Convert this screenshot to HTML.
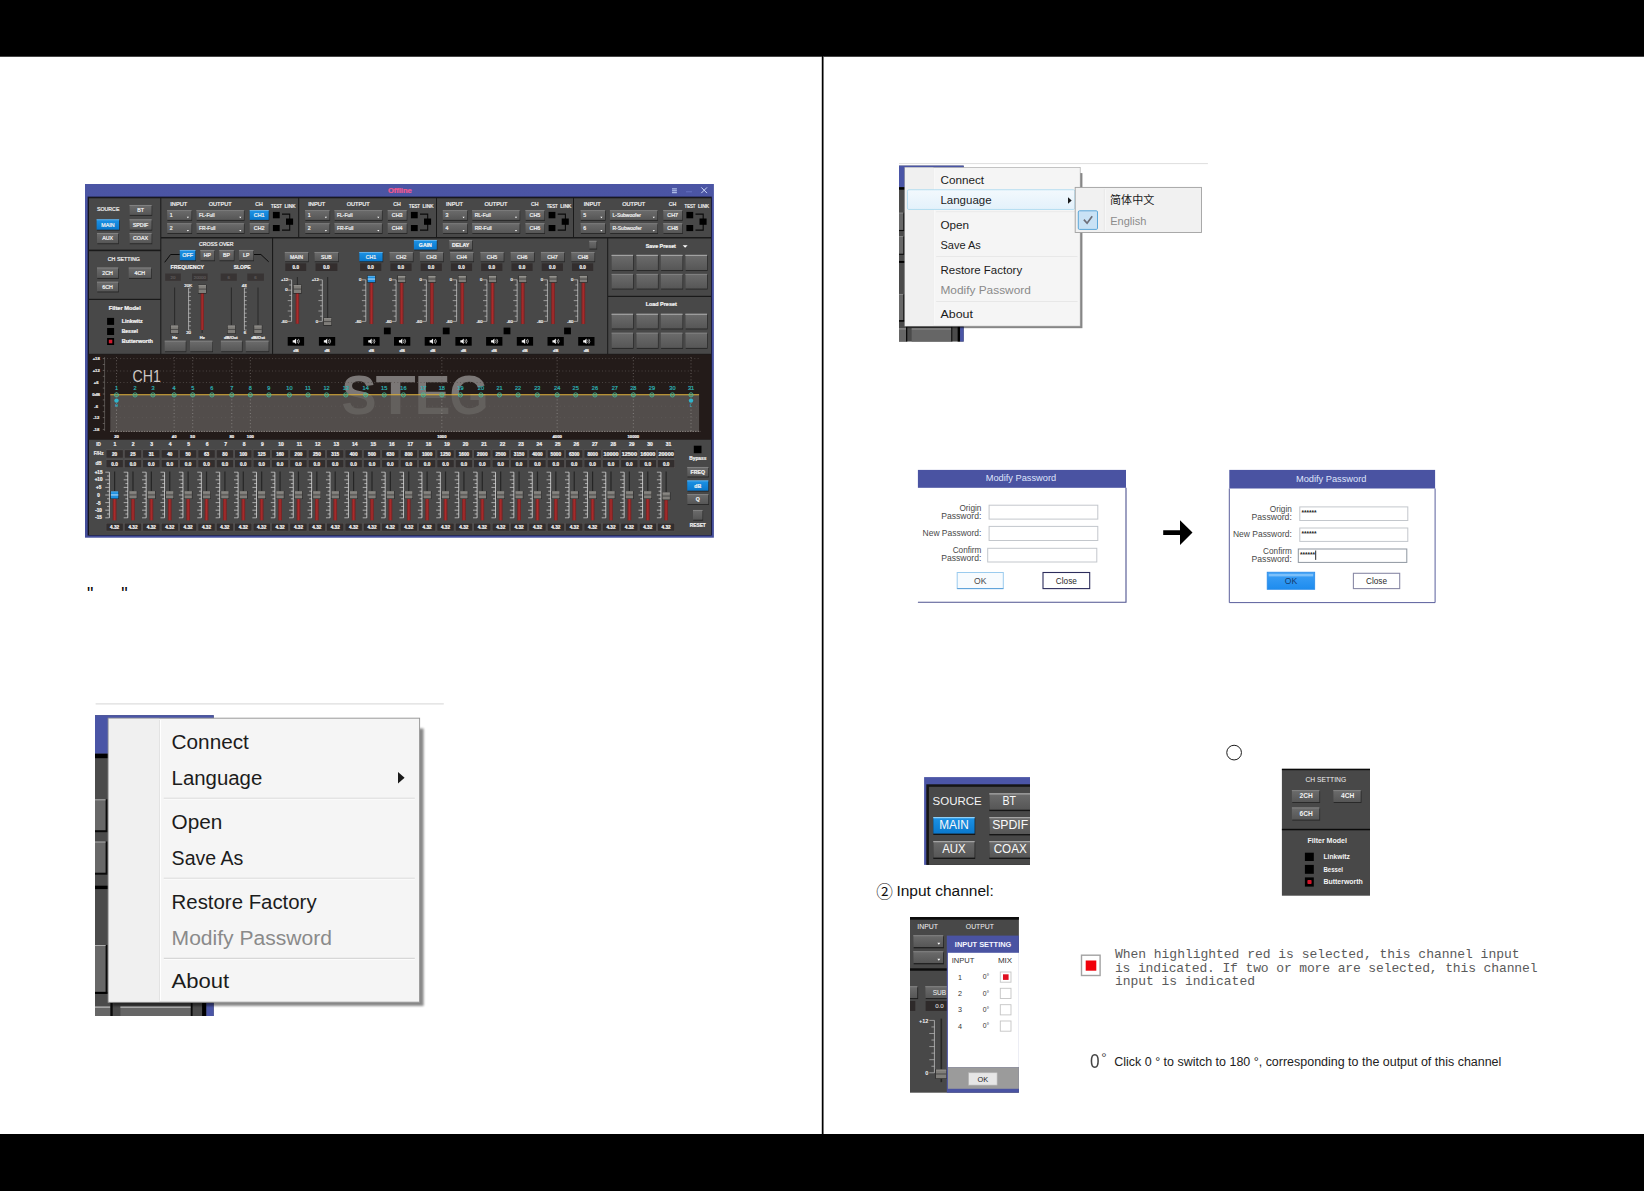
<!DOCTYPE html>
<html lang="en"><head><meta charset="utf-8"><title>Manual</title>
<style>
html,body{margin:0;padding:0;background:#fff}
body{width:1644px;height:1191px;position:relative;overflow:hidden;font-family:"Liberation Sans","Noto Sans CJK SC",sans-serif}
svg{font-family:"Liberation Sans","Noto Sans CJK SC",sans-serif;overflow:hidden}
svg text{white-space:pre}
.bar{position:absolute;left:0;width:1644px;background:#000}
.t{position:absolute;white-space:pre;line-height:1;margin:0;padding:0}
</style></head><body>
<div class="bar" style="top:0;height:56px"></div>
<div class="bar" style="top:56px;height:1px;background:#454545"></div>
<div class="bar" style="top:1134px;height:57px"></div>
<div style="position:absolute;left:822px;top:56px;width:1px;height:1079px;background:#000"></div>
<div style="position:absolute;left:821px;top:57px;width:1px;height:1077px;background:#c8c8c8"></div>
<div style="position:absolute;left:823px;top:57px;width:1px;height:1077px;background:#787878"></div>
<svg style="position:absolute;left:84px;top:183px;" width="632" height="357" viewBox="84 183 632 357"><defs><linearGradient id="gg" x1="0" y1="0" x2="0" y2="1"><stop offset="0" stop-color="#6c6c6c"/><stop offset="1" stop-color="#565656"/></linearGradient><linearGradient id="gb" x1="0" y1="0" x2="0" y2="1"><stop offset="0" stop-color="#1d93e6"/><stop offset="1" stop-color="#0a78cc"/></linearGradient><linearGradient id="rd" x1="0" y1="0" x2="1" y2="0"><stop offset="0" stop-color="#6a2424"/><stop offset="0.5" stop-color="#ae2b2b"/><stop offset="1" stop-color="#6a2424"/></linearGradient><linearGradient id="tb" x1="0" y1="0" x2="0" y2="1"><stop offset="0" stop-color="#4b55a4"/><stop offset="1" stop-color="#444e9a"/></linearGradient></defs><rect x="85.00" y="184.00" width="628.90" height="353.70" fill="url(#tb)"/><rect x="87.60" y="196.60" width="624.20" height="339.00" fill="#15152e"/><rect x="88.40" y="197.30" width="622.80" height="337.70" fill="#1a1a1a"/><text x="399.80" y="192.71" font-size="6.6" fill="#f2588e" text-anchor="middle" font-weight="bold" textLength="23.8" lengthAdjust="spacingAndGlyphs" stroke="#f2588e" stroke-width="0.22">Offline</text><path d="M672.00 188.90L676.90 188.90" stroke="#cfe0ff" stroke-width="0.9"/><path d="M672.00 190.80L676.90 190.80" stroke="#cfe0ff" stroke-width="0.9"/><path d="M672.00 192.70L676.90 192.70" stroke="#cfe0ff" stroke-width="0.9"/><path d="M686.00 191.80L692.00 191.80" stroke="#6a78c8" stroke-width="0.8"/><path d="M701.3 187.4L707 193.1M707 187.4L701.3 193.1" stroke="#d8e4ff" stroke-width="0.9" fill="none"/><rect x="89.00" y="198.30" width="71.30" height="51.30" fill="#484848"/><rect x="89.00" y="251.20" width="71.30" height="47.60" fill="#484848"/><rect x="89.00" y="300.00" width="71.30" height="53.80" fill="#484848"/><rect x="161.30" y="198.30" width="136.90" height="38.70" fill="#484848"/><rect x="299.20" y="198.30" width="136.80" height="38.70" fill="#484848"/><rect x="437.00" y="198.30" width="136.00" height="38.70" fill="#484848"/><rect x="574.00" y="198.30" width="137.00" height="38.70" fill="#484848"/><rect x="161.30" y="238.50" width="110.70" height="115.30" fill="#484848"/><rect x="273.10" y="238.50" width="334.10" height="115.30" fill="#484848"/><rect x="608.20" y="238.50" width="102.80" height="57.30" fill="#484848"/><rect x="608.20" y="297.00" width="102.80" height="56.80" fill="#484848"/><rect x="89.00" y="439.50" width="622.00" height="95.50" fill="#484848"/><text x="108.20" y="210.85" font-size="5.3" fill="#f0f0f0" text-anchor="middle" textLength="22.4" lengthAdjust="spacingAndGlyphs" stroke="#f0f0f0" stroke-width="0.22">SOURCE</text><rect x="129.80" y="206.00" width="22.40" height="9.80" fill="#1d1d1d" opacity="0.8"/><rect x="129.50" y="205.10" width="22.10" height="9.80" fill="url(#gg)"/><path d="M129.50 205.45L151.60 205.45" stroke="#8e8e8e" stroke-width="0.7"/><text x="140.55" y="211.95" font-size="5.3" fill="#f2f2f2" text-anchor="middle" stroke="#f2f2f2" stroke-width="0.22">BT</text><rect x="96.90" y="220.30" width="22.80" height="10.30" fill="#1d1d1d" opacity="0.8"/><rect x="96.60" y="219.40" width="22.50" height="10.30" fill="url(#gb)"/><path d="M96.60 219.75L119.10 219.75" stroke="#7fc4f5" stroke-width="0.7"/><text x="107.85" y="226.50" font-size="5.3" fill="#f2f2f2" text-anchor="middle" stroke="#f2f2f2" stroke-width="0.22">MAIN</text><rect x="129.80" y="220.30" width="22.40" height="10.30" fill="#1d1d1d" opacity="0.8"/><rect x="129.50" y="219.40" width="22.10" height="10.30" fill="url(#gg)"/><path d="M129.50 219.75L151.60 219.75" stroke="#8e8e8e" stroke-width="0.7"/><text x="140.55" y="226.50" font-size="5.3" fill="#f2f2f2" text-anchor="middle" stroke="#f2f2f2" stroke-width="0.22">SPDIF</text><rect x="97.30" y="234.00" width="21.50" height="10.20" fill="#1d1d1d" opacity="0.8"/><rect x="97.00" y="233.10" width="21.20" height="10.20" fill="url(#gg)"/><path d="M97.00 233.45L118.20 233.45" stroke="#8e8e8e" stroke-width="0.7"/><text x="107.60" y="240.15" font-size="5.3" fill="#f2f2f2" text-anchor="middle" stroke="#f2f2f2" stroke-width="0.22">AUX</text><rect x="129.80" y="234.00" width="22.40" height="10.20" fill="#1d1d1d" opacity="0.8"/><rect x="129.50" y="233.10" width="22.10" height="10.20" fill="url(#gg)"/><path d="M129.50 233.45L151.60 233.45" stroke="#8e8e8e" stroke-width="0.7"/><text x="140.55" y="240.15" font-size="5.3" fill="#f2f2f2" text-anchor="middle" stroke="#f2f2f2" stroke-width="0.22">COAX</text><text x="123.80" y="261.25" font-size="5.3" fill="#f0f0f0" text-anchor="middle" textLength="32.1" lengthAdjust="spacingAndGlyphs" stroke="#f0f0f0" stroke-width="0.22">CH SETTING</text><rect x="97.30" y="268.50" width="21.50" height="10.30" fill="#1d1d1d" opacity="0.8"/><rect x="97.00" y="267.60" width="21.20" height="10.30" fill="url(#gg)"/><path d="M97.00 267.95L118.20 267.95" stroke="#8e8e8e" stroke-width="0.7"/><text x="107.60" y="274.71" font-size="5.3" fill="#f2f2f2" text-anchor="middle" stroke="#f2f2f2" stroke-width="0.22">2CH</text><rect x="129.00" y="268.50" width="22.70" height="10.30" fill="#1d1d1d" opacity="0.8"/><rect x="128.70" y="267.60" width="22.40" height="10.30" fill="url(#gg)"/><path d="M128.70 267.95L151.10 267.95" stroke="#8e8e8e" stroke-width="0.7"/><text x="139.90" y="274.71" font-size="5.3" fill="#f2f2f2" text-anchor="middle" stroke="#f2f2f2" stroke-width="0.22">4CH</text><rect x="97.30" y="282.70" width="21.50" height="9.70" fill="#1d1d1d" opacity="0.8"/><rect x="97.00" y="281.80" width="21.20" height="9.70" fill="url(#gg)"/><path d="M97.00 282.15L118.20 282.15" stroke="#8e8e8e" stroke-width="0.7"/><text x="107.60" y="288.61" font-size="5.3" fill="#f2f2f2" text-anchor="middle" stroke="#f2f2f2" stroke-width="0.22">6CH</text><text x="124.80" y="309.96" font-size="5.6" fill="#f4f4f4" text-anchor="middle" font-weight="bold" textLength="32.2" lengthAdjust="spacingAndGlyphs" stroke="#f4f4f4" stroke-width="0.22">Filter Model</text><rect x="107.10" y="317.90" width="7.00" height="7.00" fill="#000"/><text x="121.70" y="323.22" font-size="5.2" fill="#f4f4f4" font-weight="bold" textLength="21.1" lengthAdjust="spacingAndGlyphs" stroke="#f4f4f4" stroke-width="0.22">Linkwitz</text><rect x="107.10" y="328.00" width="7.00" height="7.00" fill="#000"/><text x="121.70" y="333.32" font-size="5.2" fill="#f4f4f4" font-weight="bold" textLength="16.2" lengthAdjust="spacingAndGlyphs" stroke="#f4f4f4" stroke-width="0.22">Bessel</text><rect x="107.10" y="338.00" width="7.00" height="7.00" fill="#000"/><rect x="108.80" y="339.70" width="3.50" height="3.60" fill="#d0182c"/><text x="121.70" y="343.32" font-size="5.2" fill="#f4f4f4" font-weight="bold" textLength="31.3" lengthAdjust="spacingAndGlyphs" stroke="#f4f4f4" stroke-width="0.22">Butterworth</text><text x="178.80" y="205.72" font-size="5.2" fill="#f0f0f0" text-anchor="middle" textLength="17.0" lengthAdjust="spacingAndGlyphs" stroke="#f0f0f0" stroke-width="0.22">INPUT</text><text x="220.20" y="205.72" font-size="5.2" fill="#f0f0f0" text-anchor="middle" textLength="23.0" lengthAdjust="spacingAndGlyphs" stroke="#f0f0f0" stroke-width="0.22">OUTPUT</text><text x="259.00" y="205.72" font-size="5.2" fill="#f0f0f0" text-anchor="middle" stroke="#f0f0f0" stroke-width="0.22">CH</text><text x="276.50" y="208.11" font-size="4.6" fill="#f0f0f0" text-anchor="middle" textLength="11.0" lengthAdjust="spacingAndGlyphs" stroke="#f0f0f0" stroke-width="0.22">TEST</text><text x="290.10" y="208.11" font-size="4.6" fill="#f0f0f0" text-anchor="middle" textLength="11.0" lengthAdjust="spacingAndGlyphs" stroke="#f0f0f0" stroke-width="0.22">LINK</text><rect x="167.40" y="211.10" width="24.70" height="9.70" fill="#1d1d1d" opacity="0.8"/><rect x="167.10" y="210.20" width="24.40" height="9.70" fill="url(#gg)"/><path d="M167.10 210.55L191.50 210.55" stroke="#858585" stroke-width="0.7"/><text x="169.70" y="216.87" font-size="5.2" fill="#eee" stroke="#eee" stroke-width="0.22">1</text><path d="M186.80 216.70h2.2l-1.1 1.5z" stroke="none" stroke-width="1" fill="#fff"/><rect x="196.70" y="211.10" width="47.80" height="9.70" fill="#1d1d1d" opacity="0.8"/><rect x="196.40" y="210.20" width="47.50" height="9.70" fill="url(#gg)"/><path d="M196.40 210.55L243.90 210.55" stroke="#858585" stroke-width="0.7"/><text x="199.00" y="216.80" font-size="5.0" fill="#eee" stroke="#eee" stroke-width="0.22">FL-Full</text><path d="M239.20 216.70h2.2l-1.1 1.5z" stroke="none" stroke-width="1" fill="#fff"/><rect x="250.00" y="211.10" width="19.30" height="9.70" fill="#1d1d1d" opacity="0.8"/><rect x="249.70" y="210.20" width="19.00" height="9.70" fill="url(#gb)"/><path d="M249.70 210.55L268.70 210.55" stroke="#7fc4f5" stroke-width="0.7"/><text x="259.20" y="217.04" font-size="5.4" fill="#f2f2f2" text-anchor="middle" stroke="#f2f2f2" stroke-width="0.22">CH1</text><rect x="167.40" y="224.20" width="24.70" height="9.80" fill="#1d1d1d" opacity="0.8"/><rect x="167.10" y="223.30" width="24.40" height="9.80" fill="url(#gg)"/><path d="M167.10 223.65L191.50 223.65" stroke="#858585" stroke-width="0.7"/><text x="169.70" y="230.02" font-size="5.2" fill="#eee" stroke="#eee" stroke-width="0.22">2</text><path d="M186.80 229.90h2.2l-1.1 1.5z" stroke="none" stroke-width="1" fill="#fff"/><rect x="196.70" y="224.20" width="47.80" height="9.80" fill="#1d1d1d" opacity="0.8"/><rect x="196.40" y="223.30" width="47.50" height="9.80" fill="url(#gg)"/><path d="M196.40 223.65L243.90 223.65" stroke="#858585" stroke-width="0.7"/><text x="199.00" y="229.95" font-size="5.0" fill="#eee" stroke="#eee" stroke-width="0.22">FR-Full</text><path d="M239.20 229.90h2.2l-1.1 1.5z" stroke="none" stroke-width="1" fill="#fff"/><rect x="250.00" y="224.20" width="19.30" height="9.80" fill="#1d1d1d" opacity="0.8"/><rect x="249.70" y="223.30" width="19.00" height="9.80" fill="url(#gg)"/><path d="M249.70 223.65L268.70 223.65" stroke="#8e8e8e" stroke-width="0.7"/><text x="259.20" y="230.19" font-size="5.4" fill="#f2f2f2" text-anchor="middle" stroke="#f2f2f2" stroke-width="0.22">CH2</text><rect x="272.90" y="211.90" width="6.80" height="6.40" fill="#000"/><rect x="272.90" y="225.00" width="6.80" height="6.10" fill="#000"/><path d="M282.00 214.1H289.70V230.1H282.00" stroke="#0a0a0a" stroke-width="1.1" fill="none"/><rect x="286.00" y="218.50" width="7.10" height="6.30" fill="#000"/><text x="316.80" y="205.72" font-size="5.2" fill="#f0f0f0" text-anchor="middle" textLength="17.0" lengthAdjust="spacingAndGlyphs" stroke="#f0f0f0" stroke-width="0.22">INPUT</text><text x="358.20" y="205.72" font-size="5.2" fill="#f0f0f0" text-anchor="middle" textLength="23.0" lengthAdjust="spacingAndGlyphs" stroke="#f0f0f0" stroke-width="0.22">OUTPUT</text><text x="397.00" y="205.72" font-size="5.2" fill="#f0f0f0" text-anchor="middle" stroke="#f0f0f0" stroke-width="0.22">CH</text><text x="414.50" y="208.11" font-size="4.6" fill="#f0f0f0" text-anchor="middle" textLength="11.0" lengthAdjust="spacingAndGlyphs" stroke="#f0f0f0" stroke-width="0.22">TEST</text><text x="428.10" y="208.11" font-size="4.6" fill="#f0f0f0" text-anchor="middle" textLength="11.0" lengthAdjust="spacingAndGlyphs" stroke="#f0f0f0" stroke-width="0.22">LINK</text><rect x="305.40" y="211.10" width="24.70" height="9.70" fill="#1d1d1d" opacity="0.8"/><rect x="305.10" y="210.20" width="24.40" height="9.70" fill="url(#gg)"/><path d="M305.10 210.55L329.50 210.55" stroke="#858585" stroke-width="0.7"/><text x="307.70" y="216.87" font-size="5.2" fill="#eee" stroke="#eee" stroke-width="0.22">1</text><path d="M324.80 216.70h2.2l-1.1 1.5z" stroke="none" stroke-width="1" fill="#fff"/><rect x="334.70" y="211.10" width="47.80" height="9.70" fill="#1d1d1d" opacity="0.8"/><rect x="334.40" y="210.20" width="47.50" height="9.70" fill="url(#gg)"/><path d="M334.40 210.55L381.90 210.55" stroke="#858585" stroke-width="0.7"/><text x="337.00" y="216.80" font-size="5.0" fill="#eee" stroke="#eee" stroke-width="0.22">FL-Full</text><path d="M377.20 216.70h2.2l-1.1 1.5z" stroke="none" stroke-width="1" fill="#fff"/><rect x="388.00" y="211.10" width="19.30" height="9.70" fill="#1d1d1d" opacity="0.8"/><rect x="387.70" y="210.20" width="19.00" height="9.70" fill="url(#gg)"/><path d="M387.70 210.55L406.70 210.55" stroke="#8e8e8e" stroke-width="0.7"/><text x="397.20" y="217.04" font-size="5.4" fill="#f2f2f2" text-anchor="middle" stroke="#f2f2f2" stroke-width="0.22">CH3</text><rect x="305.40" y="224.20" width="24.70" height="9.80" fill="#1d1d1d" opacity="0.8"/><rect x="305.10" y="223.30" width="24.40" height="9.80" fill="url(#gg)"/><path d="M305.10 223.65L329.50 223.65" stroke="#858585" stroke-width="0.7"/><text x="307.70" y="230.02" font-size="5.2" fill="#eee" stroke="#eee" stroke-width="0.22">2</text><path d="M324.80 229.90h2.2l-1.1 1.5z" stroke="none" stroke-width="1" fill="#fff"/><rect x="334.70" y="224.20" width="47.80" height="9.80" fill="#1d1d1d" opacity="0.8"/><rect x="334.40" y="223.30" width="47.50" height="9.80" fill="url(#gg)"/><path d="M334.40 223.65L381.90 223.65" stroke="#858585" stroke-width="0.7"/><text x="337.00" y="229.95" font-size="5.0" fill="#eee" stroke="#eee" stroke-width="0.22">FR-Full</text><path d="M377.20 229.90h2.2l-1.1 1.5z" stroke="none" stroke-width="1" fill="#fff"/><rect x="388.00" y="224.20" width="19.30" height="9.80" fill="#1d1d1d" opacity="0.8"/><rect x="387.70" y="223.30" width="19.00" height="9.80" fill="url(#gg)"/><path d="M387.70 223.65L406.70 223.65" stroke="#8e8e8e" stroke-width="0.7"/><text x="397.20" y="230.19" font-size="5.4" fill="#f2f2f2" text-anchor="middle" stroke="#f2f2f2" stroke-width="0.22">CH4</text><rect x="410.90" y="211.90" width="6.80" height="6.40" fill="#000"/><rect x="410.90" y="225.00" width="6.80" height="6.10" fill="#000"/><path d="M420.00 214.1H427.70V230.1H420.00" stroke="#0a0a0a" stroke-width="1.1" fill="none"/><rect x="424.00" y="218.50" width="7.10" height="6.30" fill="#000"/><text x="454.50" y="205.72" font-size="5.2" fill="#f0f0f0" text-anchor="middle" textLength="17.0" lengthAdjust="spacingAndGlyphs" stroke="#f0f0f0" stroke-width="0.22">INPUT</text><text x="495.90" y="205.72" font-size="5.2" fill="#f0f0f0" text-anchor="middle" textLength="23.0" lengthAdjust="spacingAndGlyphs" stroke="#f0f0f0" stroke-width="0.22">OUTPUT</text><text x="534.70" y="205.72" font-size="5.2" fill="#f0f0f0" text-anchor="middle" stroke="#f0f0f0" stroke-width="0.22">CH</text><text x="552.20" y="208.11" font-size="4.6" fill="#f0f0f0" text-anchor="middle" textLength="11.0" lengthAdjust="spacingAndGlyphs" stroke="#f0f0f0" stroke-width="0.22">TEST</text><text x="565.80" y="208.11" font-size="4.6" fill="#f0f0f0" text-anchor="middle" textLength="11.0" lengthAdjust="spacingAndGlyphs" stroke="#f0f0f0" stroke-width="0.22">LINK</text><rect x="443.10" y="211.10" width="24.70" height="9.70" fill="#1d1d1d" opacity="0.8"/><rect x="442.80" y="210.20" width="24.40" height="9.70" fill="url(#gg)"/><path d="M442.80 210.55L467.20 210.55" stroke="#858585" stroke-width="0.7"/><text x="445.40" y="216.87" font-size="5.2" fill="#eee" stroke="#eee" stroke-width="0.22">3</text><path d="M462.50 216.70h2.2l-1.1 1.5z" stroke="none" stroke-width="1" fill="#fff"/><rect x="472.40" y="211.10" width="47.80" height="9.70" fill="#1d1d1d" opacity="0.8"/><rect x="472.10" y="210.20" width="47.50" height="9.70" fill="url(#gg)"/><path d="M472.10 210.55L519.60 210.55" stroke="#858585" stroke-width="0.7"/><text x="474.70" y="216.80" font-size="5.0" fill="#eee" stroke="#eee" stroke-width="0.22">RL-Full</text><path d="M514.90 216.70h2.2l-1.1 1.5z" stroke="none" stroke-width="1" fill="#fff"/><rect x="525.70" y="211.10" width="19.30" height="9.70" fill="#1d1d1d" opacity="0.8"/><rect x="525.40" y="210.20" width="19.00" height="9.70" fill="url(#gg)"/><path d="M525.40 210.55L544.40 210.55" stroke="#8e8e8e" stroke-width="0.7"/><text x="534.90" y="217.04" font-size="5.4" fill="#f2f2f2" text-anchor="middle" stroke="#f2f2f2" stroke-width="0.22">CH5</text><rect x="443.10" y="224.20" width="24.70" height="9.80" fill="#1d1d1d" opacity="0.8"/><rect x="442.80" y="223.30" width="24.40" height="9.80" fill="url(#gg)"/><path d="M442.80 223.65L467.20 223.65" stroke="#858585" stroke-width="0.7"/><text x="445.40" y="230.02" font-size="5.2" fill="#eee" stroke="#eee" stroke-width="0.22">4</text><path d="M462.50 229.90h2.2l-1.1 1.5z" stroke="none" stroke-width="1" fill="#fff"/><rect x="472.40" y="224.20" width="47.80" height="9.80" fill="#1d1d1d" opacity="0.8"/><rect x="472.10" y="223.30" width="47.50" height="9.80" fill="url(#gg)"/><path d="M472.10 223.65L519.60 223.65" stroke="#858585" stroke-width="0.7"/><text x="474.70" y="229.95" font-size="5.0" fill="#eee" stroke="#eee" stroke-width="0.22">RR-Full</text><path d="M514.90 229.90h2.2l-1.1 1.5z" stroke="none" stroke-width="1" fill="#fff"/><rect x="525.70" y="224.20" width="19.30" height="9.80" fill="#1d1d1d" opacity="0.8"/><rect x="525.40" y="223.30" width="19.00" height="9.80" fill="url(#gg)"/><path d="M525.40 223.65L544.40 223.65" stroke="#8e8e8e" stroke-width="0.7"/><text x="534.90" y="230.19" font-size="5.4" fill="#f2f2f2" text-anchor="middle" stroke="#f2f2f2" stroke-width="0.22">CH6</text><rect x="548.60" y="211.90" width="6.80" height="6.40" fill="#000"/><rect x="548.60" y="225.00" width="6.80" height="6.10" fill="#000"/><path d="M557.70 214.1H565.40V230.1H557.70" stroke="#0a0a0a" stroke-width="1.1" fill="none"/><rect x="561.70" y="218.50" width="7.10" height="6.30" fill="#000"/><text x="592.30" y="205.72" font-size="5.2" fill="#f0f0f0" text-anchor="middle" textLength="17.0" lengthAdjust="spacingAndGlyphs" stroke="#f0f0f0" stroke-width="0.22">INPUT</text><text x="633.70" y="205.72" font-size="5.2" fill="#f0f0f0" text-anchor="middle" textLength="23.0" lengthAdjust="spacingAndGlyphs" stroke="#f0f0f0" stroke-width="0.22">OUTPUT</text><text x="672.50" y="205.72" font-size="5.2" fill="#f0f0f0" text-anchor="middle" stroke="#f0f0f0" stroke-width="0.22">CH</text><text x="690.00" y="208.11" font-size="4.6" fill="#f0f0f0" text-anchor="middle" textLength="11.0" lengthAdjust="spacingAndGlyphs" stroke="#f0f0f0" stroke-width="0.22">TEST</text><text x="703.60" y="208.11" font-size="4.6" fill="#f0f0f0" text-anchor="middle" textLength="11.0" lengthAdjust="spacingAndGlyphs" stroke="#f0f0f0" stroke-width="0.22">LINK</text><rect x="580.90" y="211.10" width="24.70" height="9.70" fill="#1d1d1d" opacity="0.8"/><rect x="580.60" y="210.20" width="24.40" height="9.70" fill="url(#gg)"/><path d="M580.60 210.55L605.00 210.55" stroke="#858585" stroke-width="0.7"/><text x="583.20" y="216.87" font-size="5.2" fill="#eee" stroke="#eee" stroke-width="0.22">5</text><path d="M600.30 216.70h2.2l-1.1 1.5z" stroke="none" stroke-width="1" fill="#fff"/><rect x="610.20" y="211.10" width="47.80" height="9.70" fill="#1d1d1d" opacity="0.8"/><rect x="609.90" y="210.20" width="47.50" height="9.70" fill="url(#gg)"/><path d="M609.90 210.55L657.40 210.55" stroke="#858585" stroke-width="0.7"/><text x="612.50" y="216.80" font-size="5.0" fill="#eee" stroke="#eee" stroke-width="0.22">L-Subwoofer</text><path d="M652.70 216.70h2.2l-1.1 1.5z" stroke="none" stroke-width="1" fill="#fff"/><rect x="663.50" y="211.10" width="19.30" height="9.70" fill="#1d1d1d" opacity="0.8"/><rect x="663.20" y="210.20" width="19.00" height="9.70" fill="url(#gg)"/><path d="M663.20 210.55L682.20 210.55" stroke="#8e8e8e" stroke-width="0.7"/><text x="672.70" y="217.04" font-size="5.4" fill="#f2f2f2" text-anchor="middle" stroke="#f2f2f2" stroke-width="0.22">CH7</text><rect x="580.90" y="224.20" width="24.70" height="9.80" fill="#1d1d1d" opacity="0.8"/><rect x="580.60" y="223.30" width="24.40" height="9.80" fill="url(#gg)"/><path d="M580.60 223.65L605.00 223.65" stroke="#858585" stroke-width="0.7"/><text x="583.20" y="230.02" font-size="5.2" fill="#eee" stroke="#eee" stroke-width="0.22">6</text><path d="M600.30 229.90h2.2l-1.1 1.5z" stroke="none" stroke-width="1" fill="#fff"/><rect x="610.20" y="224.20" width="47.80" height="9.80" fill="#1d1d1d" opacity="0.8"/><rect x="609.90" y="223.30" width="47.50" height="9.80" fill="url(#gg)"/><path d="M609.90 223.65L657.40 223.65" stroke="#858585" stroke-width="0.7"/><text x="612.50" y="229.95" font-size="5.0" fill="#eee" stroke="#eee" stroke-width="0.22">R-Subwoofer</text><path d="M652.70 229.90h2.2l-1.1 1.5z" stroke="none" stroke-width="1" fill="#fff"/><rect x="663.50" y="224.20" width="19.30" height="9.80" fill="#1d1d1d" opacity="0.8"/><rect x="663.20" y="223.30" width="19.00" height="9.80" fill="url(#gg)"/><path d="M663.20 223.65L682.20 223.65" stroke="#8e8e8e" stroke-width="0.7"/><text x="672.70" y="230.19" font-size="5.4" fill="#f2f2f2" text-anchor="middle" stroke="#f2f2f2" stroke-width="0.22">CH8</text><rect x="686.40" y="211.90" width="6.80" height="6.40" fill="#000"/><rect x="686.40" y="225.00" width="6.80" height="6.10" fill="#000"/><path d="M695.50 214.1H703.20V230.1H695.50" stroke="#0a0a0a" stroke-width="1.1" fill="none"/><rect x="699.50" y="218.50" width="7.10" height="6.30" fill="#000"/><text x="216.30" y="246.16" font-size="5.3" fill="#f0f0f0" text-anchor="middle" textLength="34.5" lengthAdjust="spacingAndGlyphs" stroke="#f0f0f0" stroke-width="0.22">CROSS OVER</text><path d="M164.7 262.3L170.6 254.5H179.8M253.6 254.5H260.9L268.7 261.8" stroke="#0c0c0c" stroke-width="1" fill="none"/><rect x="180.10" y="251.00" width="15.90" height="10.20" fill="#1d1d1d" opacity="0.8"/><rect x="179.80" y="250.10" width="15.60" height="10.20" fill="url(#gb)"/><path d="M179.80 250.45L195.40 250.45" stroke="#7fc4f5" stroke-width="0.7"/><text x="187.60" y="257.19" font-size="5.4" fill="#f2f2f2" text-anchor="middle" stroke="#f2f2f2" stroke-width="0.22">OFF</text><rect x="200.60" y="251.00" width="14.40" height="10.20" fill="#1d1d1d" opacity="0.8"/><rect x="200.30" y="250.10" width="14.10" height="10.20" fill="url(#gg)"/><path d="M200.30 250.45L214.40 250.45" stroke="#8e8e8e" stroke-width="0.7"/><text x="207.35" y="257.12" font-size="5.2" fill="#f2f2f2" text-anchor="middle" stroke="#f2f2f2" stroke-width="0.22">HP</text><rect x="219.50" y="251.00" width="14.90" height="10.20" fill="#1d1d1d" opacity="0.8"/><rect x="219.20" y="250.10" width="14.60" height="10.20" fill="url(#gg)"/><path d="M219.20 250.45L233.80 250.45" stroke="#8e8e8e" stroke-width="0.7"/><text x="226.50" y="257.12" font-size="5.2" fill="#f2f2f2" text-anchor="middle" stroke="#f2f2f2" stroke-width="0.22">BP</text><rect x="239.30" y="251.00" width="14.70" height="10.20" fill="#1d1d1d" opacity="0.8"/><rect x="239.00" y="250.10" width="14.40" height="10.20" fill="url(#gg)"/><path d="M239.00 250.45L253.40 250.45" stroke="#8e8e8e" stroke-width="0.7"/><text x="246.20" y="257.12" font-size="5.2" fill="#f2f2f2" text-anchor="middle" stroke="#f2f2f2" stroke-width="0.22">LP</text><text x="187.30" y="268.82" font-size="5.2" fill="#f0f0f0" text-anchor="middle" font-weight="bold" textLength="33.5" lengthAdjust="spacingAndGlyphs" stroke="#f0f0f0" stroke-width="0.22">FREQUENCY</text><text x="242.20" y="268.82" font-size="5.2" fill="#f0f0f0" text-anchor="middle" font-weight="bold" textLength="17.0" lengthAdjust="spacingAndGlyphs" stroke="#f0f0f0" stroke-width="0.22">SLOPE</text><rect x="165.20" y="273.50" width="15.60" height="7.30" fill="#383434"/><text x="173.00" y="278.74" font-size="4.4" fill="#5c5858" text-anchor="middle" stroke="#5c5858" stroke-width="0.22">20</text><rect x="192.00" y="273.50" width="15.60" height="7.30" fill="#383434"/><text x="199.80" y="278.74" font-size="4.4" fill="#5c5858" text-anchor="middle" stroke="#5c5858" stroke-width="0.22">20000</text><rect x="220.70" y="273.50" width="16.10" height="7.30" fill="#383434"/><text x="228.75" y="278.74" font-size="4.4" fill="#5c5858" text-anchor="middle" stroke="#5c5858" stroke-width="0.22">6</text><rect x="247.30" y="273.50" width="16.60" height="7.30" fill="#383434"/><text x="255.60" y="278.74" font-size="4.4" fill="#5c5858" text-anchor="middle" stroke="#5c5858" stroke-width="0.22">6</text><path d="M174.60 287.50L174.60 333.00" stroke="#2c2c2c" stroke-width="1.1"/><path d="M231.40 287.50L231.40 333.00" stroke="#2c2c2c" stroke-width="1.1"/><path d="M258.00 287.50L258.00 333.00" stroke="#2c2c2c" stroke-width="1.1"/><path d="M202.20 287.50L202.20 333.00" stroke="#2c2c2c" stroke-width="1.1"/><path d="M188.60 288.00L188.60 330.00" stroke="#d0d0d0" stroke-width="0.7"/><path d="M188.60 288.00h2.30M188.60 292.20h2.30M188.60 296.40h2.30M188.60 300.60h2.30M188.60 304.80h2.30M188.60 309.00h2.30M188.60 313.20h2.30M188.60 317.40h2.30M188.60 321.60h2.30M188.60 325.80h2.30M188.60 330.00h2.30" stroke="#d0d0d0" stroke-width="0.6" fill="none"/><path d="M244.40 288.00L244.40 330.00" stroke="#d0d0d0" stroke-width="0.7"/><path d="M244.40 288.00h2.30M244.40 292.20h2.30M244.40 296.40h2.30M244.40 300.60h2.30M244.40 304.80h2.30M244.40 309.00h2.30M244.40 313.20h2.30M244.40 317.40h2.30M244.40 321.60h2.30M244.40 325.80h2.30M244.40 330.00h2.30" stroke="#d0d0d0" stroke-width="0.6" fill="none"/><text x="188.20" y="287.34" font-size="4.4" fill="#f0f0f0" text-anchor="middle" stroke="#f0f0f0" stroke-width="0.22">20K</text><text x="188.60" y="334.14" font-size="4.4" fill="#f0f0f0" text-anchor="middle" stroke="#f0f0f0" stroke-width="0.22">20</text><text x="244.20" y="287.34" font-size="4.4" fill="#f0f0f0" text-anchor="middle" stroke="#f0f0f0" stroke-width="0.22">48</text><text x="245.00" y="334.14" font-size="4.4" fill="#f0f0f0" text-anchor="middle" stroke="#f0f0f0" stroke-width="0.22">6</text><rect x="200.50" y="293.00" width="3.50" height="37.00" fill="url(#rd)"/><rect x="170.40" y="325.10" width="8.40" height="8.70" fill="#1a1a1a"/><rect x="170.80" y="325.50" width="7.60" height="7.80" fill="#807e7a"/><path d="M170.80 329.40L178.40 329.40" stroke="#3a3a3a" stroke-width="0.8"/><path d="M170.80 325.90L178.40 325.90" stroke="#aaa8a5" stroke-width="0.6"/><rect x="198.00" y="284.80" width="8.40" height="8.70" fill="#1a1a1a"/><rect x="198.40" y="285.20" width="7.60" height="7.80" fill="#807e7a"/><path d="M198.40 289.10L206.00 289.10" stroke="#3a3a3a" stroke-width="0.8"/><path d="M198.40 285.60L206.00 285.60" stroke="#aaa8a5" stroke-width="0.6"/><rect x="227.20" y="325.10" width="8.40" height="8.70" fill="#1a1a1a"/><rect x="227.60" y="325.50" width="7.60" height="7.80" fill="#807e7a"/><path d="M227.60 329.40L235.20 329.40" stroke="#3a3a3a" stroke-width="0.8"/><path d="M227.60 325.90L235.20 325.90" stroke="#aaa8a5" stroke-width="0.6"/><rect x="253.80" y="325.10" width="8.40" height="8.70" fill="#1a1a1a"/><rect x="254.20" y="325.50" width="7.60" height="7.80" fill="#807e7a"/><path d="M254.20 329.40L261.80 329.40" stroke="#3a3a3a" stroke-width="0.8"/><path d="M254.20 325.90L261.80 325.90" stroke="#aaa8a5" stroke-width="0.6"/><text x="174.90" y="338.77" font-size="4.2" fill="#f0f0f0" text-anchor="middle" font-weight="bold" stroke="#f0f0f0" stroke-width="0.22">Hz</text><text x="202.20" y="338.77" font-size="4.2" fill="#f0f0f0" text-anchor="middle" font-weight="bold" stroke="#f0f0f0" stroke-width="0.22">Hz</text><text x="230.90" y="338.77" font-size="4.2" fill="#f0f0f0" text-anchor="middle" font-weight="bold" stroke="#f0f0f0" stroke-width="0.22">dB/Oct</text><text x="258.00" y="338.77" font-size="4.2" fill="#f0f0f0" text-anchor="middle" font-weight="bold" stroke="#f0f0f0" stroke-width="0.22">dB/Oct</text><rect x="165.00" y="341.70" width="21.30" height="10.50" fill="#1d1d1d" opacity="0.8"/><rect x="164.70" y="340.80" width="21.00" height="10.50" fill="url(#gg)"/><path d="M164.70 341.15L185.70 341.15" stroke="#8e8e8e" stroke-width="0.7"/><rect x="190.30" y="341.70" width="22.70" height="10.50" fill="#1d1d1d" opacity="0.8"/><rect x="190.00" y="340.80" width="22.40" height="10.50" fill="url(#gg)"/><path d="M190.00 341.15L212.40 341.15" stroke="#8e8e8e" stroke-width="0.7"/><rect x="221.20" y="341.70" width="21.30" height="10.50" fill="#1d1d1d" opacity="0.8"/><rect x="220.90" y="340.80" width="21.00" height="10.50" fill="url(#gg)"/><path d="M220.90 341.15L241.90 341.15" stroke="#8e8e8e" stroke-width="0.7"/><rect x="245.90" y="341.70" width="23.30" height="10.50" fill="#1d1d1d" opacity="0.8"/><rect x="245.60" y="340.80" width="23.00" height="10.50" fill="url(#gg)"/><path d="M245.60 341.15L268.60 341.15" stroke="#8e8e8e" stroke-width="0.7"/><rect x="414.20" y="241.00" width="23.20" height="9.50" fill="#1d1d1d" opacity="0.8"/><rect x="413.90" y="240.10" width="22.90" height="9.50" fill="url(#gb)"/><path d="M413.90 240.45L436.80 240.45" stroke="#7fc4f5" stroke-width="0.7"/><text x="425.35" y="246.77" font-size="5.2" fill="#f2f2f2" text-anchor="middle" font-weight="bold" stroke="#f2f2f2" stroke-width="0.22">GAIN</text><rect x="449.50" y="241.00" width="23.20" height="9.50" fill="#1d1d1d" opacity="0.8"/><rect x="449.20" y="240.10" width="22.90" height="9.50" fill="url(#gg)"/><path d="M449.20 240.45L472.10 240.45" stroke="#8e8e8e" stroke-width="0.7"/><text x="460.65" y="246.77" font-size="5.2" fill="#f2f2f2" text-anchor="middle" font-weight="bold" stroke="#f2f2f2" stroke-width="0.22">DELAY</text><rect x="589.50" y="241.80" width="7.60" height="7.70" fill="#1d1d1d" opacity="0.8"/><rect x="589.20" y="240.90" width="7.30" height="7.70" fill="url(#gg)"/><path d="M589.20 241.25L596.50 241.25" stroke="#8e8e8e" stroke-width="0.7"/><rect x="285.10" y="253.00" width="23.70" height="9.20" fill="#1d1d1d" opacity="0.8"/><rect x="284.80" y="252.10" width="23.40" height="9.20" fill="url(#gg)"/><path d="M284.80 252.45L308.20 252.45" stroke="#8e8e8e" stroke-width="0.7"/><text x="296.50" y="258.62" font-size="5.2" fill="#f2f2f2" text-anchor="middle" stroke="#f2f2f2" stroke-width="0.22">MAIN</text><rect x="314.80" y="253.00" width="24.10" height="9.20" fill="#1d1d1d" opacity="0.8"/><rect x="314.50" y="252.10" width="23.80" height="9.20" fill="url(#gg)"/><path d="M314.50 252.45L338.30 252.45" stroke="#8e8e8e" stroke-width="0.7"/><text x="326.40" y="258.62" font-size="5.2" fill="#f2f2f2" text-anchor="middle" stroke="#f2f2f2" stroke-width="0.22">SUB</text><rect x="359.60" y="253.00" width="23.60" height="9.20" fill="#1d1d1d" opacity="0.8"/><rect x="359.30" y="252.10" width="23.30" height="9.20" fill="url(#gb)"/><path d="M359.30 252.45L382.60 252.45" stroke="#7fc4f5" stroke-width="0.7"/><text x="370.95" y="258.62" font-size="5.2" fill="#f2f2f2" text-anchor="middle" stroke="#f2f2f2" stroke-width="0.22">CH1</text><rect x="389.87" y="253.00" width="23.60" height="9.20" fill="#1d1d1d" opacity="0.8"/><rect x="389.57" y="252.10" width="23.30" height="9.20" fill="url(#gg)"/><path d="M389.57 252.45L412.87 252.45" stroke="#8e8e8e" stroke-width="0.7"/><text x="401.22" y="258.62" font-size="5.2" fill="#f2f2f2" text-anchor="middle" stroke="#f2f2f2" stroke-width="0.22">CH2</text><rect x="420.14" y="253.00" width="23.60" height="9.20" fill="#1d1d1d" opacity="0.8"/><rect x="419.84" y="252.10" width="23.30" height="9.20" fill="url(#gg)"/><path d="M419.84 252.45L443.14 252.45" stroke="#8e8e8e" stroke-width="0.7"/><text x="431.49" y="258.62" font-size="5.2" fill="#f2f2f2" text-anchor="middle" stroke="#f2f2f2" stroke-width="0.22">CH3</text><rect x="450.41" y="253.00" width="23.60" height="9.20" fill="#1d1d1d" opacity="0.8"/><rect x="450.11" y="252.10" width="23.30" height="9.20" fill="url(#gg)"/><path d="M450.11 252.45L473.41 252.45" stroke="#8e8e8e" stroke-width="0.7"/><text x="461.76" y="258.62" font-size="5.2" fill="#f2f2f2" text-anchor="middle" stroke="#f2f2f2" stroke-width="0.22">CH4</text><rect x="480.68" y="253.00" width="23.60" height="9.20" fill="#1d1d1d" opacity="0.8"/><rect x="480.38" y="252.10" width="23.30" height="9.20" fill="url(#gg)"/><path d="M480.38 252.45L503.68 252.45" stroke="#8e8e8e" stroke-width="0.7"/><text x="492.03" y="258.62" font-size="5.2" fill="#f2f2f2" text-anchor="middle" stroke="#f2f2f2" stroke-width="0.22">CH5</text><rect x="510.95" y="253.00" width="23.60" height="9.20" fill="#1d1d1d" opacity="0.8"/><rect x="510.65" y="252.10" width="23.30" height="9.20" fill="url(#gg)"/><path d="M510.65 252.45L533.95 252.45" stroke="#8e8e8e" stroke-width="0.7"/><text x="522.30" y="258.62" font-size="5.2" fill="#f2f2f2" text-anchor="middle" stroke="#f2f2f2" stroke-width="0.22">CH6</text><rect x="541.22" y="253.00" width="23.60" height="9.20" fill="#1d1d1d" opacity="0.8"/><rect x="540.92" y="252.10" width="23.30" height="9.20" fill="url(#gg)"/><path d="M540.92 252.45L564.22 252.45" stroke="#8e8e8e" stroke-width="0.7"/><text x="552.57" y="258.62" font-size="5.2" fill="#f2f2f2" text-anchor="middle" stroke="#f2f2f2" stroke-width="0.22">CH7</text><rect x="571.49" y="253.00" width="23.60" height="9.20" fill="#1d1d1d" opacity="0.8"/><rect x="571.19" y="252.10" width="23.30" height="9.20" fill="url(#gg)"/><path d="M571.19 252.45L594.49 252.45" stroke="#8e8e8e" stroke-width="0.7"/><text x="582.84" y="258.62" font-size="5.2" fill="#f2f2f2" text-anchor="middle" stroke="#f2f2f2" stroke-width="0.22">CH8</text><rect x="285.30" y="263.30" width="20.90" height="7.70" fill="#332e2e"/><text x="295.75" y="268.91" font-size="4.6" fill="#f0f0f0" text-anchor="middle" font-weight="bold" stroke="#f0f0f0" stroke-width="0.22">0.0</text><rect x="315.50" y="263.30" width="21.90" height="7.70" fill="#332e2e"/><text x="326.45" y="268.91" font-size="4.6" fill="#f0f0f0" text-anchor="middle" font-weight="bold" stroke="#f0f0f0" stroke-width="0.22">0.0</text><rect x="360.10" y="263.30" width="21.20" height="7.70" fill="#332e2e"/><text x="370.70" y="268.91" font-size="4.6" fill="#f0f0f0" text-anchor="middle" font-weight="bold" stroke="#f0f0f0" stroke-width="0.22">0.0</text><rect x="390.37" y="263.30" width="21.20" height="7.70" fill="#332e2e"/><text x="400.97" y="268.91" font-size="4.6" fill="#f0f0f0" text-anchor="middle" font-weight="bold" stroke="#f0f0f0" stroke-width="0.22">0.0</text><rect x="420.64" y="263.30" width="21.20" height="7.70" fill="#332e2e"/><text x="431.24" y="268.91" font-size="4.6" fill="#f0f0f0" text-anchor="middle" font-weight="bold" stroke="#f0f0f0" stroke-width="0.22">0.0</text><rect x="450.91" y="263.30" width="21.20" height="7.70" fill="#332e2e"/><text x="461.51" y="268.91" font-size="4.6" fill="#f0f0f0" text-anchor="middle" font-weight="bold" stroke="#f0f0f0" stroke-width="0.22">0.0</text><rect x="481.18" y="263.30" width="21.20" height="7.70" fill="#332e2e"/><text x="491.78" y="268.91" font-size="4.6" fill="#f0f0f0" text-anchor="middle" font-weight="bold" stroke="#f0f0f0" stroke-width="0.22">0.0</text><rect x="511.45" y="263.30" width="21.20" height="7.70" fill="#332e2e"/><text x="522.05" y="268.91" font-size="4.6" fill="#f0f0f0" text-anchor="middle" font-weight="bold" stroke="#f0f0f0" stroke-width="0.22">0.0</text><rect x="541.72" y="263.30" width="21.20" height="7.70" fill="#332e2e"/><text x="552.32" y="268.91" font-size="4.6" fill="#f0f0f0" text-anchor="middle" font-weight="bold" stroke="#f0f0f0" stroke-width="0.22">0.0</text><rect x="571.99" y="263.30" width="21.20" height="7.70" fill="#332e2e"/><text x="582.59" y="268.91" font-size="4.6" fill="#f0f0f0" text-anchor="middle" font-weight="bold" stroke="#f0f0f0" stroke-width="0.22">0.0</text><path d="M291.60 279.80L291.60 321.40" stroke="#d0d0d0" stroke-width="0.7"/><path d="M291.60 279.80h-3.91M291.60 285.00h-2.30M291.60 290.20h-3.91M291.60 295.40h-2.30M291.60 300.60h-3.91M291.60 305.80h-2.30M291.60 311.00h-3.91M291.60 316.20h-2.30M291.60 321.40h-3.91" stroke="#d0d0d0" stroke-width="0.6" fill="none"/><text x="284.50" y="281.27" font-size="4.2" fill="#f0f0f0" text-anchor="middle" stroke="#f0f0f0" stroke-width="0.22">+12</text><text x="286.50" y="291.47" font-size="4.2" fill="#f0f0f0" text-anchor="middle" stroke="#f0f0f0" stroke-width="0.22">0</text><text x="284.20" y="322.87" font-size="4.2" fill="#f0f0f0" text-anchor="middle" stroke="#f0f0f0" stroke-width="0.22">-60</text><path d="M297.40 277.00L297.40 324.00" stroke="#2c2c2c" stroke-width="1.1"/><rect x="295.60" y="293.00" width="3.60" height="30.80" fill="url(#rd)"/><rect x="293.20" y="284.80" width="8.40" height="8.70" fill="#1a1a1a"/><rect x="293.60" y="285.20" width="7.60" height="7.80" fill="#807e7a"/><path d="M293.60 289.10L301.20 289.10" stroke="#3a3a3a" stroke-width="0.8"/><path d="M293.60 285.60L301.20 285.60" stroke="#aaa8a5" stroke-width="0.6"/><path d="M322.30 279.80L322.30 321.40" stroke="#d0d0d0" stroke-width="0.7"/><path d="M322.30 279.80h-3.91M322.30 285.00h-2.30M322.30 290.20h-3.91M322.30 295.40h-2.30M322.30 300.60h-3.91M322.30 305.80h-2.30M322.30 311.00h-3.91M322.30 316.20h-2.30M322.30 321.40h-3.91" stroke="#d0d0d0" stroke-width="0.6" fill="none"/><text x="315.20" y="281.27" font-size="4.2" fill="#f0f0f0" text-anchor="middle" stroke="#f0f0f0" stroke-width="0.22">+12</text><text x="317.00" y="322.87" font-size="4.2" fill="#f0f0f0" text-anchor="middle" stroke="#f0f0f0" stroke-width="0.22">0</text><path d="M327.60 277.00L327.60 324.00" stroke="#2c2c2c" stroke-width="1.2"/><rect x="323.40" y="317.80" width="8.40" height="7.70" fill="#1a1a1a"/><rect x="323.80" y="318.20" width="7.60" height="6.80" fill="#807e7a"/><path d="M323.80 321.60L331.40 321.60" stroke="#3a3a3a" stroke-width="0.8"/><path d="M323.80 318.60L331.40 318.60" stroke="#aaa8a5" stroke-width="0.6"/><path d="M365.80 279.80L365.80 321.40" stroke="#d0d0d0" stroke-width="0.7"/><path d="M365.80 279.80h-3.91M365.80 285.00h-2.30M365.80 290.20h-3.91M365.80 295.40h-2.30M365.80 300.60h-3.91M365.80 305.80h-2.30M365.80 311.00h-3.91M365.80 316.20h-2.30M365.80 321.40h-3.91" stroke="#d0d0d0" stroke-width="0.6" fill="none"/><text x="360.20" y="281.27" font-size="4.2" fill="#f0f0f0" text-anchor="middle" stroke="#f0f0f0" stroke-width="0.22">0</text><text x="358.40" y="322.87" font-size="4.2" fill="#f0f0f0" text-anchor="middle" stroke="#f0f0f0" stroke-width="0.22">-60</text><path d="M371.40 277.00L371.40 324.00" stroke="#2c2c2c" stroke-width="1.1"/><rect x="369.50" y="282.20" width="3.80" height="41.80" fill="url(#rd)"/><rect x="367.30" y="275.50" width="8.20" height="7.20" fill="#1a1a1a"/><rect x="367.70" y="275.90" width="7.40" height="6.30" fill="#1e90e0"/><path d="M367.70 279.05L375.10 279.05" stroke="#e8f4ff" stroke-width="0.8"/><path d="M367.70 276.30L375.10 276.30" stroke="#8ccaf5" stroke-width="0.6"/><path d="M396.07 279.80L396.07 321.40" stroke="#d0d0d0" stroke-width="0.7"/><path d="M396.07 279.80h-3.91M396.07 285.00h-2.30M396.07 290.20h-3.91M396.07 295.40h-2.30M396.07 300.60h-3.91M396.07 305.80h-2.30M396.07 311.00h-3.91M396.07 316.20h-2.30M396.07 321.40h-3.91" stroke="#d0d0d0" stroke-width="0.6" fill="none"/><text x="390.47" y="281.27" font-size="4.2" fill="#f0f0f0" text-anchor="middle" stroke="#f0f0f0" stroke-width="0.22">0</text><text x="388.67" y="322.87" font-size="4.2" fill="#f0f0f0" text-anchor="middle" stroke="#f0f0f0" stroke-width="0.22">-60</text><path d="M401.67 277.00L401.67 324.00" stroke="#2c2c2c" stroke-width="1.1"/><rect x="399.77" y="282.20" width="3.80" height="41.80" fill="url(#rd)"/><rect x="397.57" y="275.50" width="8.20" height="7.20" fill="#1a1a1a"/><rect x="397.97" y="275.90" width="7.40" height="6.30" fill="#807e7a"/><path d="M397.97 279.05L405.37 279.05" stroke="#3a3a3a" stroke-width="0.8"/><path d="M397.97 276.30L405.37 276.30" stroke="#aaa8a5" stroke-width="0.6"/><path d="M426.34 279.80L426.34 321.40" stroke="#d0d0d0" stroke-width="0.7"/><path d="M426.34 279.80h-3.91M426.34 285.00h-2.30M426.34 290.20h-3.91M426.34 295.40h-2.30M426.34 300.60h-3.91M426.34 305.80h-2.30M426.34 311.00h-3.91M426.34 316.20h-2.30M426.34 321.40h-3.91" stroke="#d0d0d0" stroke-width="0.6" fill="none"/><text x="420.74" y="281.27" font-size="4.2" fill="#f0f0f0" text-anchor="middle" stroke="#f0f0f0" stroke-width="0.22">0</text><text x="418.94" y="322.87" font-size="4.2" fill="#f0f0f0" text-anchor="middle" stroke="#f0f0f0" stroke-width="0.22">-60</text><path d="M431.94 277.00L431.94 324.00" stroke="#2c2c2c" stroke-width="1.1"/><rect x="430.04" y="282.20" width="3.80" height="41.80" fill="url(#rd)"/><rect x="427.84" y="275.50" width="8.20" height="7.20" fill="#1a1a1a"/><rect x="428.24" y="275.90" width="7.40" height="6.30" fill="#807e7a"/><path d="M428.24 279.05L435.64 279.05" stroke="#3a3a3a" stroke-width="0.8"/><path d="M428.24 276.30L435.64 276.30" stroke="#aaa8a5" stroke-width="0.6"/><path d="M456.61 279.80L456.61 321.40" stroke="#d0d0d0" stroke-width="0.7"/><path d="M456.61 279.80h-3.91M456.61 285.00h-2.30M456.61 290.20h-3.91M456.61 295.40h-2.30M456.61 300.60h-3.91M456.61 305.80h-2.30M456.61 311.00h-3.91M456.61 316.20h-2.30M456.61 321.40h-3.91" stroke="#d0d0d0" stroke-width="0.6" fill="none"/><text x="451.01" y="281.27" font-size="4.2" fill="#f0f0f0" text-anchor="middle" stroke="#f0f0f0" stroke-width="0.22">0</text><text x="449.21" y="322.87" font-size="4.2" fill="#f0f0f0" text-anchor="middle" stroke="#f0f0f0" stroke-width="0.22">-60</text><path d="M462.21 277.00L462.21 324.00" stroke="#2c2c2c" stroke-width="1.1"/><rect x="460.31" y="282.20" width="3.80" height="41.80" fill="url(#rd)"/><rect x="458.11" y="275.50" width="8.20" height="7.20" fill="#1a1a1a"/><rect x="458.51" y="275.90" width="7.40" height="6.30" fill="#807e7a"/><path d="M458.51 279.05L465.91 279.05" stroke="#3a3a3a" stroke-width="0.8"/><path d="M458.51 276.30L465.91 276.30" stroke="#aaa8a5" stroke-width="0.6"/><path d="M486.88 279.80L486.88 321.40" stroke="#d0d0d0" stroke-width="0.7"/><path d="M486.88 279.80h-3.91M486.88 285.00h-2.30M486.88 290.20h-3.91M486.88 295.40h-2.30M486.88 300.60h-3.91M486.88 305.80h-2.30M486.88 311.00h-3.91M486.88 316.20h-2.30M486.88 321.40h-3.91" stroke="#d0d0d0" stroke-width="0.6" fill="none"/><text x="481.28" y="281.27" font-size="4.2" fill="#f0f0f0" text-anchor="middle" stroke="#f0f0f0" stroke-width="0.22">0</text><text x="479.48" y="322.87" font-size="4.2" fill="#f0f0f0" text-anchor="middle" stroke="#f0f0f0" stroke-width="0.22">-60</text><path d="M492.48 277.00L492.48 324.00" stroke="#2c2c2c" stroke-width="1.1"/><rect x="490.58" y="282.20" width="3.80" height="41.80" fill="url(#rd)"/><rect x="488.38" y="275.50" width="8.20" height="7.20" fill="#1a1a1a"/><rect x="488.78" y="275.90" width="7.40" height="6.30" fill="#807e7a"/><path d="M488.78 279.05L496.18 279.05" stroke="#3a3a3a" stroke-width="0.8"/><path d="M488.78 276.30L496.18 276.30" stroke="#aaa8a5" stroke-width="0.6"/><path d="M517.15 279.80L517.15 321.40" stroke="#d0d0d0" stroke-width="0.7"/><path d="M517.15 279.80h-3.91M517.15 285.00h-2.30M517.15 290.20h-3.91M517.15 295.40h-2.30M517.15 300.60h-3.91M517.15 305.80h-2.30M517.15 311.00h-3.91M517.15 316.20h-2.30M517.15 321.40h-3.91" stroke="#d0d0d0" stroke-width="0.6" fill="none"/><text x="511.55" y="281.27" font-size="4.2" fill="#f0f0f0" text-anchor="middle" stroke="#f0f0f0" stroke-width="0.22">0</text><text x="509.75" y="322.87" font-size="4.2" fill="#f0f0f0" text-anchor="middle" stroke="#f0f0f0" stroke-width="0.22">-60</text><path d="M522.75 277.00L522.75 324.00" stroke="#2c2c2c" stroke-width="1.1"/><rect x="520.85" y="282.20" width="3.80" height="41.80" fill="url(#rd)"/><rect x="518.65" y="275.50" width="8.20" height="7.20" fill="#1a1a1a"/><rect x="519.05" y="275.90" width="7.40" height="6.30" fill="#807e7a"/><path d="M519.05 279.05L526.45 279.05" stroke="#3a3a3a" stroke-width="0.8"/><path d="M519.05 276.30L526.45 276.30" stroke="#aaa8a5" stroke-width="0.6"/><path d="M547.42 279.80L547.42 321.40" stroke="#d0d0d0" stroke-width="0.7"/><path d="M547.42 279.80h-3.91M547.42 285.00h-2.30M547.42 290.20h-3.91M547.42 295.40h-2.30M547.42 300.60h-3.91M547.42 305.80h-2.30M547.42 311.00h-3.91M547.42 316.20h-2.30M547.42 321.40h-3.91" stroke="#d0d0d0" stroke-width="0.6" fill="none"/><text x="541.82" y="281.27" font-size="4.2" fill="#f0f0f0" text-anchor="middle" stroke="#f0f0f0" stroke-width="0.22">0</text><text x="540.02" y="322.87" font-size="4.2" fill="#f0f0f0" text-anchor="middle" stroke="#f0f0f0" stroke-width="0.22">-60</text><path d="M553.02 277.00L553.02 324.00" stroke="#2c2c2c" stroke-width="1.1"/><rect x="551.12" y="282.20" width="3.80" height="41.80" fill="url(#rd)"/><rect x="548.92" y="275.50" width="8.20" height="7.20" fill="#1a1a1a"/><rect x="549.32" y="275.90" width="7.40" height="6.30" fill="#807e7a"/><path d="M549.32 279.05L556.72 279.05" stroke="#3a3a3a" stroke-width="0.8"/><path d="M549.32 276.30L556.72 276.30" stroke="#aaa8a5" stroke-width="0.6"/><path d="M577.69 279.80L577.69 321.40" stroke="#d0d0d0" stroke-width="0.7"/><path d="M577.69 279.80h-3.91M577.69 285.00h-2.30M577.69 290.20h-3.91M577.69 295.40h-2.30M577.69 300.60h-3.91M577.69 305.80h-2.30M577.69 311.00h-3.91M577.69 316.20h-2.30M577.69 321.40h-3.91" stroke="#d0d0d0" stroke-width="0.6" fill="none"/><text x="572.09" y="281.27" font-size="4.2" fill="#f0f0f0" text-anchor="middle" stroke="#f0f0f0" stroke-width="0.22">0</text><text x="570.29" y="322.87" font-size="4.2" fill="#f0f0f0" text-anchor="middle" stroke="#f0f0f0" stroke-width="0.22">-60</text><path d="M583.29 277.00L583.29 324.00" stroke="#2c2c2c" stroke-width="1.1"/><rect x="581.39" y="282.20" width="3.80" height="41.80" fill="url(#rd)"/><rect x="579.19" y="275.50" width="8.20" height="7.20" fill="#1a1a1a"/><rect x="579.59" y="275.90" width="7.40" height="6.30" fill="#807e7a"/><path d="M579.59 279.05L586.99 279.05" stroke="#3a3a3a" stroke-width="0.8"/><path d="M579.59 276.30L586.99 276.30" stroke="#aaa8a5" stroke-width="0.6"/><rect x="287.70" y="337.00" width="16.40" height="8.70" fill="#000"/><path d="M292.70 340.20h1.5l1.9 -1.7v5.6l-1.9 -1.7h-1.5z" stroke="none" stroke-width="1" fill="#f4f4f4"/><path d="M297.20 339.80q1.2 1.5 0 3M298.40 338.90q2 2.4 0 4.8" stroke="#f4f4f4" stroke-width="0.7" fill="none"/><text x="295.90" y="352.00" font-size="4" fill="#f0f0f0" text-anchor="middle" font-weight="bold" stroke="#f0f0f0" stroke-width="0.22">dB</text><rect x="318.90" y="337.00" width="16.30" height="8.70" fill="#000"/><path d="M323.85 340.20h1.5l1.9 -1.7v5.6l-1.9 -1.7h-1.5z" stroke="none" stroke-width="1" fill="#f4f4f4"/><path d="M328.35 339.80q1.2 1.5 0 3M329.55 338.90q2 2.4 0 4.8" stroke="#f4f4f4" stroke-width="0.7" fill="none"/><text x="327.05" y="352.00" font-size="4" fill="#f0f0f0" text-anchor="middle" font-weight="bold" stroke="#f0f0f0" stroke-width="0.22">dB</text><rect x="363.30" y="337.00" width="16.30" height="8.70" fill="#000"/><path d="M368.25 340.20h1.5l1.9 -1.7v5.6l-1.9 -1.7h-1.5z" stroke="none" stroke-width="1" fill="#f4f4f4"/><path d="M372.75 339.80q1.2 1.5 0 3M373.95 338.90q2 2.4 0 4.8" stroke="#f4f4f4" stroke-width="0.7" fill="none"/><text x="371.45" y="352.00" font-size="4" fill="#f0f0f0" text-anchor="middle" font-weight="bold" stroke="#f0f0f0" stroke-width="0.22">dB</text><rect x="394.00" y="337.00" width="16.30" height="8.70" fill="#000"/><path d="M398.95 340.20h1.5l1.9 -1.7v5.6l-1.9 -1.7h-1.5z" stroke="none" stroke-width="1" fill="#f4f4f4"/><path d="M403.45 339.80q1.2 1.5 0 3M404.65 338.90q2 2.4 0 4.8" stroke="#f4f4f4" stroke-width="0.7" fill="none"/><text x="402.15" y="352.00" font-size="4" fill="#f0f0f0" text-anchor="middle" font-weight="bold" stroke="#f0f0f0" stroke-width="0.22">dB</text><rect x="424.70" y="337.00" width="16.30" height="8.70" fill="#000"/><path d="M429.65 340.20h1.5l1.9 -1.7v5.6l-1.9 -1.7h-1.5z" stroke="none" stroke-width="1" fill="#f4f4f4"/><path d="M434.15 339.80q1.2 1.5 0 3M435.35 338.90q2 2.4 0 4.8" stroke="#f4f4f4" stroke-width="0.7" fill="none"/><text x="432.85" y="352.00" font-size="4" fill="#f0f0f0" text-anchor="middle" font-weight="bold" stroke="#f0f0f0" stroke-width="0.22">dB</text><rect x="455.40" y="337.00" width="16.30" height="8.70" fill="#000"/><path d="M460.35 340.20h1.5l1.9 -1.7v5.6l-1.9 -1.7h-1.5z" stroke="none" stroke-width="1" fill="#f4f4f4"/><path d="M464.85 339.80q1.2 1.5 0 3M466.05 338.90q2 2.4 0 4.8" stroke="#f4f4f4" stroke-width="0.7" fill="none"/><text x="463.55" y="352.00" font-size="4" fill="#f0f0f0" text-anchor="middle" font-weight="bold" stroke="#f0f0f0" stroke-width="0.22">dB</text><rect x="486.10" y="337.00" width="16.30" height="8.70" fill="#000"/><path d="M491.05 340.20h1.5l1.9 -1.7v5.6l-1.9 -1.7h-1.5z" stroke="none" stroke-width="1" fill="#f4f4f4"/><path d="M495.55 339.80q1.2 1.5 0 3M496.75 338.90q2 2.4 0 4.8" stroke="#f4f4f4" stroke-width="0.7" fill="none"/><text x="494.25" y="352.00" font-size="4" fill="#f0f0f0" text-anchor="middle" font-weight="bold" stroke="#f0f0f0" stroke-width="0.22">dB</text><rect x="516.80" y="337.00" width="16.30" height="8.70" fill="#000"/><path d="M521.75 340.20h1.5l1.9 -1.7v5.6l-1.9 -1.7h-1.5z" stroke="none" stroke-width="1" fill="#f4f4f4"/><path d="M526.25 339.80q1.2 1.5 0 3M527.45 338.90q2 2.4 0 4.8" stroke="#f4f4f4" stroke-width="0.7" fill="none"/><text x="524.95" y="352.00" font-size="4" fill="#f0f0f0" text-anchor="middle" font-weight="bold" stroke="#f0f0f0" stroke-width="0.22">dB</text><rect x="547.50" y="337.00" width="16.30" height="8.70" fill="#000"/><path d="M552.45 340.20h1.5l1.9 -1.7v5.6l-1.9 -1.7h-1.5z" stroke="none" stroke-width="1" fill="#f4f4f4"/><path d="M556.95 339.80q1.2 1.5 0 3M558.15 338.90q2 2.4 0 4.8" stroke="#f4f4f4" stroke-width="0.7" fill="none"/><text x="555.65" y="352.00" font-size="4" fill="#f0f0f0" text-anchor="middle" font-weight="bold" stroke="#f0f0f0" stroke-width="0.22">dB</text><rect x="578.20" y="337.00" width="16.30" height="8.70" fill="#000"/><path d="M583.15 340.20h1.5l1.9 -1.7v5.6l-1.9 -1.7h-1.5z" stroke="none" stroke-width="1" fill="#f4f4f4"/><path d="M587.65 339.80q1.2 1.5 0 3M588.85 338.90q2 2.4 0 4.8" stroke="#f4f4f4" stroke-width="0.7" fill="none"/><text x="586.35" y="352.00" font-size="4" fill="#f0f0f0" text-anchor="middle" font-weight="bold" stroke="#f0f0f0" stroke-width="0.22">dB</text><rect x="383.90" y="327.60" width="6.80" height="6.70" fill="#000"/><rect x="442.80" y="327.60" width="6.80" height="6.70" fill="#000"/><rect x="503.60" y="327.60" width="6.80" height="6.70" fill="#000"/><rect x="564.10" y="327.60" width="6.80" height="6.70" fill="#000"/><text x="660.80" y="248.05" font-size="5.3" fill="#f4f4f4" text-anchor="middle" font-weight="bold" textLength="30.2" lengthAdjust="spacingAndGlyphs" stroke="#f4f4f4" stroke-width="0.22">Save Preset</text><path d="M682.7 245.2h4.9l-2.45 2.6z" stroke="none" stroke-width="1" fill="#fff"/><text x="661.20" y="306.46" font-size="5.3" fill="#f4f4f4" text-anchor="middle" font-weight="bold" textLength="31.1" lengthAdjust="spacingAndGlyphs" stroke="#f4f4f4" stroke-width="0.22">Load Preset</text><rect x="611.90" y="255.90" width="21.70" height="15.10" fill="#1d1d1d" opacity="0.8"/><rect x="611.60" y="255.00" width="21.40" height="15.10" fill="url(#gg)"/><path d="M611.60 255.35L633.00 255.35" stroke="#8e8e8e" stroke-width="0.7"/><path d="M611.60 255.35L633.00 255.35" stroke="#b4b4b4" stroke-width="0.8"/><rect x="636.70" y="255.90" width="21.80" height="15.10" fill="#1d1d1d" opacity="0.8"/><rect x="636.40" y="255.00" width="21.50" height="15.10" fill="url(#gg)"/><path d="M636.40 255.35L657.90 255.35" stroke="#8e8e8e" stroke-width="0.7"/><path d="M636.40 255.35L657.90 255.35" stroke="#b4b4b4" stroke-width="0.8"/><rect x="661.10" y="255.90" width="22.00" height="15.10" fill="#1d1d1d" opacity="0.8"/><rect x="660.80" y="255.00" width="21.70" height="15.10" fill="url(#gg)"/><path d="M660.80 255.35L682.50 255.35" stroke="#8e8e8e" stroke-width="0.7"/><path d="M660.80 255.35L682.50 255.35" stroke="#b4b4b4" stroke-width="0.8"/><rect x="685.70" y="255.90" width="21.90" height="15.10" fill="#1d1d1d" opacity="0.8"/><rect x="685.40" y="255.00" width="21.60" height="15.10" fill="url(#gg)"/><path d="M685.40 255.35L707.00 255.35" stroke="#8e8e8e" stroke-width="0.7"/><path d="M685.40 255.35L707.00 255.35" stroke="#b4b4b4" stroke-width="0.8"/><rect x="611.90" y="274.90" width="21.70" height="14.60" fill="#1d1d1d" opacity="0.8"/><rect x="611.60" y="274.00" width="21.40" height="14.60" fill="url(#gg)"/><path d="M611.60 274.35L633.00 274.35" stroke="#8e8e8e" stroke-width="0.7"/><rect x="636.70" y="274.90" width="21.80" height="14.60" fill="#1d1d1d" opacity="0.8"/><rect x="636.40" y="274.00" width="21.50" height="14.60" fill="url(#gg)"/><path d="M636.40 274.35L657.90 274.35" stroke="#8e8e8e" stroke-width="0.7"/><rect x="661.10" y="274.90" width="22.00" height="14.60" fill="#1d1d1d" opacity="0.8"/><rect x="660.80" y="274.00" width="21.70" height="14.60" fill="url(#gg)"/><path d="M660.80 274.35L682.50 274.35" stroke="#8e8e8e" stroke-width="0.7"/><rect x="685.70" y="274.90" width="21.90" height="14.60" fill="#1d1d1d" opacity="0.8"/><rect x="685.40" y="274.00" width="21.60" height="14.60" fill="url(#gg)"/><path d="M685.40 274.35L707.00 274.35" stroke="#8e8e8e" stroke-width="0.7"/><rect x="611.90" y="314.80" width="21.70" height="14.60" fill="#1d1d1d" opacity="0.8"/><rect x="611.60" y="313.90" width="21.40" height="14.60" fill="url(#gg)"/><path d="M611.60 314.25L633.00 314.25" stroke="#8e8e8e" stroke-width="0.7"/><path d="M611.60 314.25L633.00 314.25" stroke="#b4b4b4" stroke-width="0.8"/><rect x="636.70" y="314.80" width="21.80" height="14.60" fill="#1d1d1d" opacity="0.8"/><rect x="636.40" y="313.90" width="21.50" height="14.60" fill="url(#gg)"/><path d="M636.40 314.25L657.90 314.25" stroke="#8e8e8e" stroke-width="0.7"/><path d="M636.40 314.25L657.90 314.25" stroke="#b4b4b4" stroke-width="0.8"/><rect x="661.10" y="314.80" width="22.00" height="14.60" fill="#1d1d1d" opacity="0.8"/><rect x="660.80" y="313.90" width="21.70" height="14.60" fill="url(#gg)"/><path d="M660.80 314.25L682.50 314.25" stroke="#8e8e8e" stroke-width="0.7"/><path d="M660.80 314.25L682.50 314.25" stroke="#b4b4b4" stroke-width="0.8"/><rect x="685.70" y="314.80" width="21.90" height="14.60" fill="#1d1d1d" opacity="0.8"/><rect x="685.40" y="313.90" width="21.60" height="14.60" fill="url(#gg)"/><path d="M685.40 314.25L707.00 314.25" stroke="#8e8e8e" stroke-width="0.7"/><path d="M685.40 314.25L707.00 314.25" stroke="#b4b4b4" stroke-width="0.8"/><rect x="611.90" y="333.70" width="21.70" height="15.10" fill="#1d1d1d" opacity="0.8"/><rect x="611.60" y="332.80" width="21.40" height="15.10" fill="url(#gg)"/><path d="M611.60 333.15L633.00 333.15" stroke="#8e8e8e" stroke-width="0.7"/><rect x="636.70" y="333.70" width="21.80" height="15.10" fill="#1d1d1d" opacity="0.8"/><rect x="636.40" y="332.80" width="21.50" height="15.10" fill="url(#gg)"/><path d="M636.40 333.15L657.90 333.15" stroke="#8e8e8e" stroke-width="0.7"/><rect x="661.10" y="333.70" width="22.00" height="15.10" fill="#1d1d1d" opacity="0.8"/><rect x="660.80" y="332.80" width="21.70" height="15.10" fill="url(#gg)"/><path d="M660.80 333.15L682.50 333.15" stroke="#8e8e8e" stroke-width="0.7"/><rect x="685.70" y="333.70" width="21.90" height="15.10" fill="#1d1d1d" opacity="0.8"/><rect x="685.40" y="332.80" width="21.60" height="15.10" fill="url(#gg)"/><path d="M685.40 333.15L707.00 333.15" stroke="#8e8e8e" stroke-width="0.7"/><rect x="88.40" y="354.40" width="622.80" height="85.10" fill="#231b19"/><text y="413.6" font-size="56" font-weight="bold" fill="#7b7776"><tspan x="341.6" textLength="35" lengthAdjust="spacingAndGlyphs">S</tspan><tspan x="375.6" textLength="40.2" lengthAdjust="spacingAndGlyphs">T</tspan><tspan x="414.8" textLength="35.6" lengthAdjust="spacingAndGlyphs">E</tspan><tspan x="449.6" textLength="39" lengthAdjust="spacingAndGlyphs">G</tspan></text><path d="M107.00 358.60L700.00 358.60" stroke="#5a5452" stroke-width="0.8" stroke-dasharray="0.9 2.4"/><path d="M107.00 371.00L700.00 371.00" stroke="#5a5452" stroke-width="0.8" stroke-dasharray="0.9 2.4"/><path d="M107.00 382.50L700.00 382.50" stroke="#5a5452" stroke-width="0.8" stroke-dasharray="0.9 2.4"/><path d="M116.50 357.00L116.50 394.00" stroke="#6e6866" stroke-width="0.8" stroke-dasharray="1 2.2"/><path d="M174.15 357.00L174.15 394.00" stroke="#6e6866" stroke-width="0.8" stroke-dasharray="1 2.2"/><path d="M192.71 357.00L192.71 394.00" stroke="#6e6866" stroke-width="0.8" stroke-dasharray="1 2.2"/><path d="M231.79 357.00L231.79 394.00" stroke="#6e6866" stroke-width="0.8" stroke-dasharray="1 2.2"/><path d="M250.35 357.00L250.35 394.00" stroke="#6e6866" stroke-width="0.8" stroke-dasharray="1 2.2"/><path d="M441.85 357.00L441.85 394.00" stroke="#6e6866" stroke-width="0.8" stroke-dasharray="1 2.2"/><path d="M557.15 357.00L557.15 394.00" stroke="#6e6866" stroke-width="0.8" stroke-dasharray="1 2.2"/><path d="M633.35 357.00L633.35 394.00" stroke="#6e6866" stroke-width="0.8" stroke-dasharray="1 2.2"/><path d="M691.00 357.00L691.00 394.00" stroke="#6e6866" stroke-width="0.8" stroke-dasharray="1 2.2"/><rect x="110.30" y="394.60" width="588.80" height="36.80" fill="#5e5a57" opacity="0.8"/><path d="M111.00 406.20L699.00 406.20" stroke="#6a6563" stroke-width="0.6" stroke-dasharray="0.8 3.6"/><path d="M111.00 417.70L699.00 417.70" stroke="#6a6563" stroke-width="0.6" stroke-dasharray="0.8 3.6"/><path d="M116.50 396.00L116.50 431.00" stroke="#9a9694" stroke-width="0.7" stroke-dasharray="1 2.4"/><path d="M174.15 396.00L174.15 431.00" stroke="#9a9694" stroke-width="0.7" stroke-dasharray="1 2.4"/><path d="M192.71 396.00L192.71 431.00" stroke="#9a9694" stroke-width="0.7" stroke-dasharray="1 2.4"/><path d="M231.79 396.00L231.79 431.00" stroke="#9a9694" stroke-width="0.7" stroke-dasharray="1 2.4"/><path d="M250.35 396.00L250.35 431.00" stroke="#9a9694" stroke-width="0.7" stroke-dasharray="1 2.4"/><path d="M441.85 396.00L441.85 431.00" stroke="#9a9694" stroke-width="0.7" stroke-dasharray="1 2.4"/><path d="M557.15 396.00L557.15 431.00" stroke="#9a9694" stroke-width="0.7" stroke-dasharray="1 2.4"/><path d="M633.35 396.00L633.35 431.00" stroke="#9a9694" stroke-width="0.7" stroke-dasharray="1 2.4"/><path d="M691.00 396.00L691.00 431.00" stroke="#9a9694" stroke-width="0.7" stroke-dasharray="1 2.4"/><path d="M110.00 431.40L700.50 431.40" stroke="#9a9592" stroke-width="0.8" stroke-dasharray="1.6 1"/><path d="M104.60 357.00L104.60 431.00" stroke="#6a6563" stroke-width="0.7"/><path d="M102.8 358.60h1.8M102.8 364.50h1.8M102.8 370.40h1.8M102.8 376.30h1.8M102.8 382.20h1.8M102.8 388.10h1.8M102.8 394.00h1.8M102.8 399.90h1.8M102.8 405.80h1.8M102.8 411.70h1.8M102.8 417.60h1.8M102.8 423.50h1.8M102.8 429.40h1.8" stroke="#8a8582" stroke-width="0.6" fill="none"/><text x="96.20" y="360.07" font-size="4.2" fill="#e8e8e8" text-anchor="middle" font-weight="bold" stroke="#e8e8e8" stroke-width="0.22">+18</text><text x="96.20" y="372.47" font-size="4.2" fill="#e8e8e8" text-anchor="middle" font-weight="bold" stroke="#e8e8e8" stroke-width="0.22">+12</text><text x="96.20" y="383.97" font-size="4.2" fill="#e8e8e8" text-anchor="middle" font-weight="bold" stroke="#e8e8e8" stroke-width="0.22">+6</text><text x="96.20" y="395.87" font-size="4.2" fill="#e8e8e8" text-anchor="middle" font-weight="bold" stroke="#e8e8e8" stroke-width="0.22">0dB</text><text x="96.20" y="407.67" font-size="4.2" fill="#e8e8e8" text-anchor="middle" font-weight="bold" stroke="#e8e8e8" stroke-width="0.22">-6</text><text x="96.20" y="419.17" font-size="4.2" fill="#e8e8e8" text-anchor="middle" font-weight="bold" stroke="#e8e8e8" stroke-width="0.22">-12</text><text x="96.20" y="430.77" font-size="4.2" fill="#e8e8e8" text-anchor="middle" font-weight="bold" stroke="#e8e8e8" stroke-width="0.22">-18</text><text x="116.50" y="437.77" font-size="4.2" fill="#f0f0f0" text-anchor="middle" font-weight="bold" stroke="#f0f0f0" stroke-width="0.22">20</text><text x="174.15" y="437.77" font-size="4.2" fill="#f0f0f0" text-anchor="middle" font-weight="bold" stroke="#f0f0f0" stroke-width="0.22">40</text><text x="192.71" y="437.77" font-size="4.2" fill="#f0f0f0" text-anchor="middle" font-weight="bold" stroke="#f0f0f0" stroke-width="0.22">50</text><text x="231.79" y="437.77" font-size="4.2" fill="#f0f0f0" text-anchor="middle" font-weight="bold" stroke="#f0f0f0" stroke-width="0.22">80</text><text x="250.35" y="437.77" font-size="4.2" fill="#f0f0f0" text-anchor="middle" font-weight="bold" stroke="#f0f0f0" stroke-width="0.22">100</text><text x="441.85" y="437.77" font-size="4.2" fill="#f0f0f0" text-anchor="middle" font-weight="bold" stroke="#f0f0f0" stroke-width="0.22">1000</text><text x="557.15" y="437.77" font-size="4.2" fill="#f0f0f0" text-anchor="middle" font-weight="bold" stroke="#f0f0f0" stroke-width="0.22">4000</text><text x="633.35" y="437.77" font-size="4.2" fill="#f0f0f0" text-anchor="middle" font-weight="bold" stroke="#f0f0f0" stroke-width="0.22">10000</text><text x="146.70" y="381.93" font-size="15.8" fill="#cfc8c6" text-anchor="middle" textLength="28.2" lengthAdjust="spacingAndGlyphs">CH1</text><path d="M110.30 394.70L699.10 394.70" stroke="#e0b23a" stroke-width="1.1"/><circle cx="116.50" cy="394.90" r="2.1" fill="none" stroke="#3fc0a0" stroke-width="0.8"/><path d="M115.20 394.90L117.80 394.90" stroke="#3fc0a0" stroke-width="0.7"/><text x="116.50" y="390.16" font-size="5.6" fill="#2cb0b4" text-anchor="middle" stroke="#2cb0b4" stroke-width="0.22">1</text><circle cx="135.06" cy="394.90" r="2.1" fill="none" stroke="#3fc0a0" stroke-width="0.8"/><path d="M133.76 394.90L136.36 394.90" stroke="#3fc0a0" stroke-width="0.7"/><text x="135.06" y="390.16" font-size="5.6" fill="#2cb0b4" text-anchor="middle" stroke="#2cb0b4" stroke-width="0.22">2</text><circle cx="152.95" cy="394.90" r="2.1" fill="none" stroke="#3fc0a0" stroke-width="0.8"/><path d="M151.65 394.90L154.25 394.90" stroke="#3fc0a0" stroke-width="0.7"/><text x="152.95" y="390.16" font-size="5.6" fill="#2cb0b4" text-anchor="middle" stroke="#2cb0b4" stroke-width="0.22">3</text><circle cx="174.15" cy="394.90" r="2.1" fill="none" stroke="#3fc0a0" stroke-width="0.8"/><path d="M172.85 394.90L175.45 394.90" stroke="#3fc0a0" stroke-width="0.7"/><text x="174.15" y="390.16" font-size="5.6" fill="#2cb0b4" text-anchor="middle" stroke="#2cb0b4" stroke-width="0.22">4</text><circle cx="192.71" cy="394.90" r="2.1" fill="none" stroke="#3fc0a0" stroke-width="0.8"/><path d="M191.41 394.90L194.01 394.90" stroke="#3fc0a0" stroke-width="0.7"/><text x="192.71" y="390.16" font-size="5.6" fill="#2cb0b4" text-anchor="middle" stroke="#2cb0b4" stroke-width="0.22">5</text><circle cx="211.93" cy="394.90" r="2.1" fill="none" stroke="#3fc0a0" stroke-width="0.8"/><path d="M210.63 394.90L213.23 394.90" stroke="#3fc0a0" stroke-width="0.7"/><text x="211.93" y="390.16" font-size="5.6" fill="#2cb0b4" text-anchor="middle" stroke="#2cb0b4" stroke-width="0.22">6</text><circle cx="231.79" cy="394.90" r="2.1" fill="none" stroke="#3fc0a0" stroke-width="0.8"/><path d="M230.49 394.90L233.09 394.90" stroke="#3fc0a0" stroke-width="0.7"/><text x="231.79" y="390.16" font-size="5.6" fill="#2cb0b4" text-anchor="middle" stroke="#2cb0b4" stroke-width="0.22">7</text><circle cx="250.35" cy="394.90" r="2.1" fill="none" stroke="#3fc0a0" stroke-width="0.8"/><path d="M249.05 394.90L251.65 394.90" stroke="#3fc0a0" stroke-width="0.7"/><text x="250.35" y="390.16" font-size="5.6" fill="#2cb0b4" text-anchor="middle" stroke="#2cb0b4" stroke-width="0.22">8</text><circle cx="268.91" cy="394.90" r="2.1" fill="none" stroke="#3fc0a0" stroke-width="0.8"/><path d="M267.61 394.90L270.21 394.90" stroke="#3fc0a0" stroke-width="0.7"/><text x="268.91" y="390.16" font-size="5.6" fill="#2cb0b4" text-anchor="middle" stroke="#2cb0b4" stroke-width="0.22">9</text><circle cx="289.44" cy="394.90" r="2.1" fill="none" stroke="#3fc0a0" stroke-width="0.8"/><path d="M288.14 394.90L290.74 394.90" stroke="#3fc0a0" stroke-width="0.7"/><text x="289.44" y="390.16" font-size="5.6" fill="#2cb0b4" text-anchor="middle" stroke="#2cb0b4" stroke-width="0.22">10</text><circle cx="308.00" cy="394.90" r="2.1" fill="none" stroke="#3fc0a0" stroke-width="0.8"/><path d="M306.70 394.90L309.30 394.90" stroke="#3fc0a0" stroke-width="0.7"/><text x="308.00" y="390.16" font-size="5.6" fill="#2cb0b4" text-anchor="middle" stroke="#2cb0b4" stroke-width="0.22">11</text><circle cx="326.56" cy="394.90" r="2.1" fill="none" stroke="#3fc0a0" stroke-width="0.8"/><path d="M325.26 394.90L327.86 394.90" stroke="#3fc0a0" stroke-width="0.7"/><text x="326.56" y="390.16" font-size="5.6" fill="#2cb0b4" text-anchor="middle" stroke="#2cb0b4" stroke-width="0.22">12</text><circle cx="345.78" cy="394.90" r="2.1" fill="none" stroke="#3fc0a0" stroke-width="0.8"/><path d="M344.48 394.90L347.08 394.90" stroke="#3fc0a0" stroke-width="0.7"/><text x="345.78" y="390.16" font-size="5.6" fill="#2cb0b4" text-anchor="middle" stroke="#2cb0b4" stroke-width="0.22">13</text><circle cx="365.65" cy="394.90" r="2.1" fill="none" stroke="#3fc0a0" stroke-width="0.8"/><path d="M364.35 394.90L366.95 394.90" stroke="#3fc0a0" stroke-width="0.7"/><text x="365.65" y="390.16" font-size="5.6" fill="#2cb0b4" text-anchor="middle" stroke="#2cb0b4" stroke-width="0.22">14</text><circle cx="384.21" cy="394.90" r="2.1" fill="none" stroke="#3fc0a0" stroke-width="0.8"/><path d="M382.91 394.90L385.51 394.90" stroke="#3fc0a0" stroke-width="0.7"/><text x="384.21" y="390.16" font-size="5.6" fill="#2cb0b4" text-anchor="middle" stroke="#2cb0b4" stroke-width="0.22">15</text><circle cx="403.43" cy="394.90" r="2.1" fill="none" stroke="#3fc0a0" stroke-width="0.8"/><path d="M402.13 394.90L404.73 394.90" stroke="#3fc0a0" stroke-width="0.7"/><text x="403.43" y="390.16" font-size="5.6" fill="#2cb0b4" text-anchor="middle" stroke="#2cb0b4" stroke-width="0.22">16</text><circle cx="423.29" cy="394.90" r="2.1" fill="none" stroke="#3fc0a0" stroke-width="0.8"/><path d="M421.99 394.90L424.59 394.90" stroke="#3fc0a0" stroke-width="0.7"/><text x="423.29" y="390.16" font-size="5.6" fill="#2cb0b4" text-anchor="middle" stroke="#2cb0b4" stroke-width="0.22">17</text><circle cx="441.85" cy="394.90" r="2.1" fill="none" stroke="#3fc0a0" stroke-width="0.8"/><path d="M440.55 394.90L443.15 394.90" stroke="#3fc0a0" stroke-width="0.7"/><text x="441.85" y="390.16" font-size="5.6" fill="#2cb0b4" text-anchor="middle" stroke="#2cb0b4" stroke-width="0.22">18</text><circle cx="460.41" cy="394.90" r="2.1" fill="none" stroke="#3fc0a0" stroke-width="0.8"/><path d="M459.11 394.90L461.71 394.90" stroke="#3fc0a0" stroke-width="0.7"/><text x="460.41" y="390.16" font-size="5.6" fill="#2cb0b4" text-anchor="middle" stroke="#2cb0b4" stroke-width="0.22">19</text><circle cx="480.94" cy="394.90" r="2.1" fill="none" stroke="#3fc0a0" stroke-width="0.8"/><path d="M479.64 394.90L482.24 394.90" stroke="#3fc0a0" stroke-width="0.7"/><text x="480.94" y="390.16" font-size="5.6" fill="#2cb0b4" text-anchor="middle" stroke="#2cb0b4" stroke-width="0.22">20</text><circle cx="499.50" cy="394.90" r="2.1" fill="none" stroke="#3fc0a0" stroke-width="0.8"/><path d="M498.20 394.90L500.80 394.90" stroke="#3fc0a0" stroke-width="0.7"/><text x="499.50" y="390.16" font-size="5.6" fill="#2cb0b4" text-anchor="middle" stroke="#2cb0b4" stroke-width="0.22">21</text><circle cx="518.06" cy="394.90" r="2.1" fill="none" stroke="#3fc0a0" stroke-width="0.8"/><path d="M516.76 394.90L519.36 394.90" stroke="#3fc0a0" stroke-width="0.7"/><text x="518.06" y="390.16" font-size="5.6" fill="#2cb0b4" text-anchor="middle" stroke="#2cb0b4" stroke-width="0.22">22</text><circle cx="537.28" cy="394.90" r="2.1" fill="none" stroke="#3fc0a0" stroke-width="0.8"/><path d="M535.98 394.90L538.58 394.90" stroke="#3fc0a0" stroke-width="0.7"/><text x="537.28" y="390.16" font-size="5.6" fill="#2cb0b4" text-anchor="middle" stroke="#2cb0b4" stroke-width="0.22">23</text><circle cx="557.15" cy="394.90" r="2.1" fill="none" stroke="#3fc0a0" stroke-width="0.8"/><path d="M555.85 394.90L558.45 394.90" stroke="#3fc0a0" stroke-width="0.7"/><text x="557.15" y="390.16" font-size="5.6" fill="#2cb0b4" text-anchor="middle" stroke="#2cb0b4" stroke-width="0.22">24</text><circle cx="575.71" cy="394.90" r="2.1" fill="none" stroke="#3fc0a0" stroke-width="0.8"/><path d="M574.41 394.90L577.01 394.90" stroke="#3fc0a0" stroke-width="0.7"/><text x="575.71" y="390.16" font-size="5.6" fill="#2cb0b4" text-anchor="middle" stroke="#2cb0b4" stroke-width="0.22">25</text><circle cx="594.93" cy="394.90" r="2.1" fill="none" stroke="#3fc0a0" stroke-width="0.8"/><path d="M593.63 394.90L596.23 394.90" stroke="#3fc0a0" stroke-width="0.7"/><text x="594.93" y="390.16" font-size="5.6" fill="#2cb0b4" text-anchor="middle" stroke="#2cb0b4" stroke-width="0.22">26</text><circle cx="614.79" cy="394.90" r="2.1" fill="none" stroke="#3fc0a0" stroke-width="0.8"/><path d="M613.49 394.90L616.09 394.90" stroke="#3fc0a0" stroke-width="0.7"/><text x="614.79" y="390.16" font-size="5.6" fill="#2cb0b4" text-anchor="middle" stroke="#2cb0b4" stroke-width="0.22">27</text><circle cx="633.35" cy="394.90" r="2.1" fill="none" stroke="#3fc0a0" stroke-width="0.8"/><path d="M632.05 394.90L634.65 394.90" stroke="#3fc0a0" stroke-width="0.7"/><text x="633.35" y="390.16" font-size="5.6" fill="#2cb0b4" text-anchor="middle" stroke="#2cb0b4" stroke-width="0.22">28</text><circle cx="651.91" cy="394.90" r="2.1" fill="none" stroke="#3fc0a0" stroke-width="0.8"/><path d="M650.61 394.90L653.21 394.90" stroke="#3fc0a0" stroke-width="0.7"/><text x="651.91" y="390.16" font-size="5.6" fill="#2cb0b4" text-anchor="middle" stroke="#2cb0b4" stroke-width="0.22">29</text><circle cx="672.44" cy="394.90" r="2.1" fill="none" stroke="#3fc0a0" stroke-width="0.8"/><path d="M671.14 394.90L673.74 394.90" stroke="#3fc0a0" stroke-width="0.7"/><text x="672.44" y="390.16" font-size="5.6" fill="#2cb0b4" text-anchor="middle" stroke="#2cb0b4" stroke-width="0.22">30</text><circle cx="691.00" cy="394.90" r="2.1" fill="none" stroke="#3fc0a0" stroke-width="0.8"/><path d="M689.70 394.90L692.30 394.90" stroke="#3fc0a0" stroke-width="0.7"/><text x="691.00" y="390.16" font-size="5.6" fill="#2cb0b4" text-anchor="middle" stroke="#2cb0b4" stroke-width="0.22">31</text><circle cx="116.50" cy="400.60" r="2.2" fill="#30b4cc"/><text x="116.50" y="407.26" font-size="3.6" fill="#30a8c0" text-anchor="middle" stroke="#30a8c0" stroke-width="0.22">H</text><circle cx="691.00" cy="400.60" r="2.2" fill="#30b4cc"/><text x="691.00" y="407.26" font-size="3.6" fill="#30a8c0" text-anchor="middle" stroke="#30a8c0" stroke-width="0.22">L</text><text x="98.60" y="446.11" font-size="4.6" fill="#e8e8e8" text-anchor="middle" font-weight="bold" stroke="#e8e8e8" stroke-width="0.22">ID</text><text x="98.60" y="455.21" font-size="4.6" fill="#e8e8e8" text-anchor="middle" font-weight="bold" stroke="#e8e8e8" stroke-width="0.22">F/Hz</text><text x="98.60" y="464.91" font-size="4.6" fill="#e8e8e8" text-anchor="middle" font-weight="bold" stroke="#e8e8e8" stroke-width="0.22">dB</text><text x="98.60" y="473.71" font-size="4.6" fill="#f0f0f0" text-anchor="middle" font-weight="bold" stroke="#f0f0f0" stroke-width="0.22">+15</text><text x="98.60" y="481.11" font-size="4.6" fill="#f0f0f0" text-anchor="middle" font-weight="bold" stroke="#f0f0f0" stroke-width="0.22">+10</text><text x="98.60" y="488.91" font-size="4.6" fill="#f0f0f0" text-anchor="middle" font-weight="bold" stroke="#f0f0f0" stroke-width="0.22">+5</text><text x="98.60" y="496.61" font-size="4.6" fill="#f0f0f0" text-anchor="middle" font-weight="bold" stroke="#f0f0f0" stroke-width="0.22">0</text><text x="98.60" y="504.51" font-size="4.6" fill="#f0f0f0" text-anchor="middle" font-weight="bold" stroke="#f0f0f0" stroke-width="0.22">-5</text><text x="98.60" y="511.91" font-size="4.6" fill="#f0f0f0" text-anchor="middle" font-weight="bold" stroke="#f0f0f0" stroke-width="0.22">-10</text><text x="98.60" y="519.41" font-size="4.6" fill="#f0f0f0" text-anchor="middle" font-weight="bold" stroke="#f0f0f0" stroke-width="0.22">-15</text><text x="114.80" y="446.35" font-size="5" fill="#f0f0f0" text-anchor="middle" font-weight="bold" stroke="#f0f0f0" stroke-width="0.22">1</text><rect x="105.90" y="449.70" width="17.40" height="8.50" fill="#5e5a5a"/><rect x="106.30" y="450.10" width="16.60" height="7.70" fill="#322e2e"/><text x="114.60" y="455.70" font-size="4.7" fill="#f4f4f4" text-anchor="middle" font-weight="bold" stroke="#f4f4f4" stroke-width="0.22">20</text><rect x="105.90" y="459.60" width="17.40" height="8.30" fill="#5e5a5a"/><rect x="106.30" y="460.00" width="16.60" height="7.50" fill="#322e2e"/><text x="114.60" y="465.50" font-size="4.7" fill="#f4f4f4" text-anchor="middle" font-weight="bold" stroke="#f4f4f4" stroke-width="0.22">0.0</text><rect x="105.90" y="523.00" width="17.40" height="8.20" fill="#5e5a5a"/><rect x="106.30" y="523.40" width="16.60" height="7.40" fill="#322e2e"/><text x="114.60" y="528.84" font-size="4.7" fill="#f4f4f4" text-anchor="middle" font-weight="bold" stroke="#f4f4f4" stroke-width="0.22">4.32</text><path d="M109.40 472.20L109.40 517.80" stroke="#eeeeee" stroke-width="0.7"/><path d="M109.40 472.20h-4.08M109.40 476.00h-2.40M109.40 479.80h-4.08M109.40 483.60h-2.40M109.40 487.40h-4.08M109.40 491.20h-2.40M109.40 495.00h-4.08M109.40 498.80h-2.40M109.40 502.60h-4.08M109.40 506.40h-2.40M109.40 510.20h-4.08M109.40 514.00h-2.40M109.40 517.80h-4.08" stroke="#eeeeee" stroke-width="0.6" fill="none"/><path d="M114.60 471.50L114.60 520.00" stroke="#262626" stroke-width="1.2"/><rect x="112.70" y="497.40" width="3.80" height="23.00" fill="url(#rd)"/><rect x="110.45" y="491.00" width="8.30" height="8.00" fill="#1a1a1a"/><rect x="110.85" y="491.40" width="7.50" height="7.10" fill="#1e90e0"/><path d="M110.85 494.95L118.35 494.95" stroke="#e8f4ff" stroke-width="0.8"/><path d="M110.85 491.80L118.35 491.80" stroke="#8ccaf5" stroke-width="0.6"/><text x="133.26" y="446.35" font-size="5" fill="#f0f0f0" text-anchor="middle" font-weight="bold" stroke="#f0f0f0" stroke-width="0.22">2</text><rect x="124.28" y="449.70" width="17.40" height="8.50" fill="#5e5a5a"/><rect x="124.68" y="450.10" width="16.60" height="7.70" fill="#322e2e"/><text x="132.98" y="455.70" font-size="4.7" fill="#f4f4f4" text-anchor="middle" font-weight="bold" stroke="#f4f4f4" stroke-width="0.22">25</text><rect x="124.28" y="459.60" width="17.40" height="8.30" fill="#5e5a5a"/><rect x="124.68" y="460.00" width="16.60" height="7.50" fill="#322e2e"/><text x="132.98" y="465.50" font-size="4.7" fill="#f4f4f4" text-anchor="middle" font-weight="bold" stroke="#f4f4f4" stroke-width="0.22">0.0</text><rect x="124.28" y="523.00" width="17.40" height="8.20" fill="#5e5a5a"/><rect x="124.68" y="523.40" width="16.60" height="7.40" fill="#322e2e"/><text x="132.98" y="528.84" font-size="4.7" fill="#f4f4f4" text-anchor="middle" font-weight="bold" stroke="#f4f4f4" stroke-width="0.22">4.32</text><path d="M127.78 472.20L127.78 517.80" stroke="#eeeeee" stroke-width="0.7"/><path d="M127.78 472.20h-4.08M127.78 476.00h-2.40M127.78 479.80h-4.08M127.78 483.60h-2.40M127.78 487.40h-4.08M127.78 491.20h-2.40M127.78 495.00h-4.08M127.78 498.80h-2.40M127.78 502.60h-4.08M127.78 506.40h-2.40M127.78 510.20h-4.08M127.78 514.00h-2.40M127.78 517.80h-4.08" stroke="#eeeeee" stroke-width="0.6" fill="none"/><path d="M132.98 471.50L132.98 520.00" stroke="#262626" stroke-width="1.2"/><rect x="131.08" y="497.40" width="3.80" height="23.00" fill="url(#rd)"/><rect x="128.83" y="491.00" width="8.30" height="8.00" fill="#1a1a1a"/><rect x="129.23" y="491.40" width="7.50" height="7.10" fill="#807e7a"/><path d="M129.23 494.95L136.73 494.95" stroke="#3a3a3a" stroke-width="0.8"/><path d="M129.23 491.80L136.73 491.80" stroke="#aaa8a5" stroke-width="0.6"/><text x="151.72" y="446.35" font-size="5" fill="#f0f0f0" text-anchor="middle" font-weight="bold" stroke="#f0f0f0" stroke-width="0.22">3</text><rect x="142.67" y="449.70" width="17.40" height="8.50" fill="#5e5a5a"/><rect x="143.07" y="450.10" width="16.60" height="7.70" fill="#322e2e"/><text x="151.37" y="455.70" font-size="4.7" fill="#f4f4f4" text-anchor="middle" font-weight="bold" stroke="#f4f4f4" stroke-width="0.22">31</text><rect x="142.67" y="459.60" width="17.40" height="8.30" fill="#5e5a5a"/><rect x="143.07" y="460.00" width="16.60" height="7.50" fill="#322e2e"/><text x="151.37" y="465.50" font-size="4.7" fill="#f4f4f4" text-anchor="middle" font-weight="bold" stroke="#f4f4f4" stroke-width="0.22">0.0</text><rect x="142.67" y="523.00" width="17.40" height="8.20" fill="#5e5a5a"/><rect x="143.07" y="523.40" width="16.60" height="7.40" fill="#322e2e"/><text x="151.37" y="528.84" font-size="4.7" fill="#f4f4f4" text-anchor="middle" font-weight="bold" stroke="#f4f4f4" stroke-width="0.22">4.32</text><path d="M146.17 472.20L146.17 517.80" stroke="#eeeeee" stroke-width="0.7"/><path d="M146.17 472.20h-4.08M146.17 476.00h-2.40M146.17 479.80h-4.08M146.17 483.60h-2.40M146.17 487.40h-4.08M146.17 491.20h-2.40M146.17 495.00h-4.08M146.17 498.80h-2.40M146.17 502.60h-4.08M146.17 506.40h-2.40M146.17 510.20h-4.08M146.17 514.00h-2.40M146.17 517.80h-4.08" stroke="#eeeeee" stroke-width="0.6" fill="none"/><path d="M151.37 471.50L151.37 520.00" stroke="#262626" stroke-width="1.2"/><rect x="149.47" y="497.40" width="3.80" height="23.00" fill="url(#rd)"/><rect x="147.22" y="491.00" width="8.30" height="8.00" fill="#1a1a1a"/><rect x="147.62" y="491.40" width="7.50" height="7.10" fill="#807e7a"/><path d="M147.62 494.95L155.12 494.95" stroke="#3a3a3a" stroke-width="0.8"/><path d="M147.62 491.80L155.12 491.80" stroke="#aaa8a5" stroke-width="0.6"/><text x="170.18" y="446.35" font-size="5" fill="#f0f0f0" text-anchor="middle" font-weight="bold" stroke="#f0f0f0" stroke-width="0.22">4</text><rect x="161.06" y="449.70" width="17.40" height="8.50" fill="#5e5a5a"/><rect x="161.45" y="450.10" width="16.60" height="7.70" fill="#322e2e"/><text x="169.75" y="455.70" font-size="4.7" fill="#f4f4f4" text-anchor="middle" font-weight="bold" stroke="#f4f4f4" stroke-width="0.22">40</text><rect x="161.06" y="459.60" width="17.40" height="8.30" fill="#5e5a5a"/><rect x="161.45" y="460.00" width="16.60" height="7.50" fill="#322e2e"/><text x="169.75" y="465.50" font-size="4.7" fill="#f4f4f4" text-anchor="middle" font-weight="bold" stroke="#f4f4f4" stroke-width="0.22">0.0</text><rect x="161.06" y="523.00" width="17.40" height="8.20" fill="#5e5a5a"/><rect x="161.45" y="523.40" width="16.60" height="7.40" fill="#322e2e"/><text x="169.75" y="528.84" font-size="4.7" fill="#f4f4f4" text-anchor="middle" font-weight="bold" stroke="#f4f4f4" stroke-width="0.22">4.32</text><path d="M164.56 472.20L164.56 517.80" stroke="#eeeeee" stroke-width="0.7"/><path d="M164.56 472.20h-4.08M164.56 476.00h-2.40M164.56 479.80h-4.08M164.56 483.60h-2.40M164.56 487.40h-4.08M164.56 491.20h-2.40M164.56 495.00h-4.08M164.56 498.80h-2.40M164.56 502.60h-4.08M164.56 506.40h-2.40M164.56 510.20h-4.08M164.56 514.00h-2.40M164.56 517.80h-4.08" stroke="#eeeeee" stroke-width="0.6" fill="none"/><path d="M169.75 471.50L169.75 520.00" stroke="#262626" stroke-width="1.2"/><rect x="167.85" y="497.40" width="3.80" height="23.00" fill="url(#rd)"/><rect x="165.60" y="491.00" width="8.30" height="8.00" fill="#1a1a1a"/><rect x="166.00" y="491.40" width="7.50" height="7.10" fill="#807e7a"/><path d="M166.00 494.95L173.50 494.95" stroke="#3a3a3a" stroke-width="0.8"/><path d="M166.00 491.80L173.50 491.80" stroke="#aaa8a5" stroke-width="0.6"/><text x="188.64" y="446.35" font-size="5" fill="#f0f0f0" text-anchor="middle" font-weight="bold" stroke="#f0f0f0" stroke-width="0.22">5</text><rect x="179.44" y="449.70" width="17.40" height="8.50" fill="#5e5a5a"/><rect x="179.84" y="450.10" width="16.60" height="7.70" fill="#322e2e"/><text x="188.14" y="455.70" font-size="4.7" fill="#f4f4f4" text-anchor="middle" font-weight="bold" stroke="#f4f4f4" stroke-width="0.22">50</text><rect x="179.44" y="459.60" width="17.40" height="8.30" fill="#5e5a5a"/><rect x="179.84" y="460.00" width="16.60" height="7.50" fill="#322e2e"/><text x="188.14" y="465.50" font-size="4.7" fill="#f4f4f4" text-anchor="middle" font-weight="bold" stroke="#f4f4f4" stroke-width="0.22">0.0</text><rect x="179.44" y="523.00" width="17.40" height="8.20" fill="#5e5a5a"/><rect x="179.84" y="523.40" width="16.60" height="7.40" fill="#322e2e"/><text x="188.14" y="528.84" font-size="4.7" fill="#f4f4f4" text-anchor="middle" font-weight="bold" stroke="#f4f4f4" stroke-width="0.22">4.32</text><path d="M182.94 472.20L182.94 517.80" stroke="#eeeeee" stroke-width="0.7"/><path d="M182.94 472.20h-4.08M182.94 476.00h-2.40M182.94 479.80h-4.08M182.94 483.60h-2.40M182.94 487.40h-4.08M182.94 491.20h-2.40M182.94 495.00h-4.08M182.94 498.80h-2.40M182.94 502.60h-4.08M182.94 506.40h-2.40M182.94 510.20h-4.08M182.94 514.00h-2.40M182.94 517.80h-4.08" stroke="#eeeeee" stroke-width="0.6" fill="none"/><path d="M188.14 471.50L188.14 520.00" stroke="#262626" stroke-width="1.2"/><rect x="186.24" y="497.40" width="3.80" height="23.00" fill="url(#rd)"/><rect x="183.99" y="491.00" width="8.30" height="8.00" fill="#1a1a1a"/><rect x="184.39" y="491.40" width="7.50" height="7.10" fill="#807e7a"/><path d="M184.39 494.95L191.89 494.95" stroke="#3a3a3a" stroke-width="0.8"/><path d="M184.39 491.80L191.89 491.80" stroke="#aaa8a5" stroke-width="0.6"/><text x="207.10" y="446.35" font-size="5" fill="#f0f0f0" text-anchor="middle" font-weight="bold" stroke="#f0f0f0" stroke-width="0.22">6</text><rect x="197.83" y="449.70" width="17.40" height="8.50" fill="#5e5a5a"/><rect x="198.22" y="450.10" width="16.60" height="7.70" fill="#322e2e"/><text x="206.53" y="455.70" font-size="4.7" fill="#f4f4f4" text-anchor="middle" font-weight="bold" stroke="#f4f4f4" stroke-width="0.22">63</text><rect x="197.83" y="459.60" width="17.40" height="8.30" fill="#5e5a5a"/><rect x="198.22" y="460.00" width="16.60" height="7.50" fill="#322e2e"/><text x="206.53" y="465.50" font-size="4.7" fill="#f4f4f4" text-anchor="middle" font-weight="bold" stroke="#f4f4f4" stroke-width="0.22">0.0</text><rect x="197.83" y="523.00" width="17.40" height="8.20" fill="#5e5a5a"/><rect x="198.22" y="523.40" width="16.60" height="7.40" fill="#322e2e"/><text x="206.53" y="528.84" font-size="4.7" fill="#f4f4f4" text-anchor="middle" font-weight="bold" stroke="#f4f4f4" stroke-width="0.22">4.32</text><path d="M201.33 472.20L201.33 517.80" stroke="#eeeeee" stroke-width="0.7"/><path d="M201.33 472.20h-4.08M201.33 476.00h-2.40M201.33 479.80h-4.08M201.33 483.60h-2.40M201.33 487.40h-4.08M201.33 491.20h-2.40M201.33 495.00h-4.08M201.33 498.80h-2.40M201.33 502.60h-4.08M201.33 506.40h-2.40M201.33 510.20h-4.08M201.33 514.00h-2.40M201.33 517.80h-4.08" stroke="#eeeeee" stroke-width="0.6" fill="none"/><path d="M206.53 471.50L206.53 520.00" stroke="#262626" stroke-width="1.2"/><rect x="204.62" y="497.40" width="3.80" height="23.00" fill="url(#rd)"/><rect x="202.38" y="491.00" width="8.30" height="8.00" fill="#1a1a1a"/><rect x="202.78" y="491.40" width="7.50" height="7.10" fill="#807e7a"/><path d="M202.78 494.95L210.28 494.95" stroke="#3a3a3a" stroke-width="0.8"/><path d="M202.78 491.80L210.28 491.80" stroke="#aaa8a5" stroke-width="0.6"/><text x="225.56" y="446.35" font-size="5" fill="#f0f0f0" text-anchor="middle" font-weight="bold" stroke="#f0f0f0" stroke-width="0.22">7</text><rect x="216.21" y="449.70" width="17.40" height="8.50" fill="#5e5a5a"/><rect x="216.61" y="450.10" width="16.60" height="7.70" fill="#322e2e"/><text x="224.91" y="455.70" font-size="4.7" fill="#f4f4f4" text-anchor="middle" font-weight="bold" stroke="#f4f4f4" stroke-width="0.22">80</text><rect x="216.21" y="459.60" width="17.40" height="8.30" fill="#5e5a5a"/><rect x="216.61" y="460.00" width="16.60" height="7.50" fill="#322e2e"/><text x="224.91" y="465.50" font-size="4.7" fill="#f4f4f4" text-anchor="middle" font-weight="bold" stroke="#f4f4f4" stroke-width="0.22">0.0</text><rect x="216.21" y="523.00" width="17.40" height="8.20" fill="#5e5a5a"/><rect x="216.61" y="523.40" width="16.60" height="7.40" fill="#322e2e"/><text x="224.91" y="528.84" font-size="4.7" fill="#f4f4f4" text-anchor="middle" font-weight="bold" stroke="#f4f4f4" stroke-width="0.22">4.32</text><path d="M219.71 472.20L219.71 517.80" stroke="#eeeeee" stroke-width="0.7"/><path d="M219.71 472.20h-4.08M219.71 476.00h-2.40M219.71 479.80h-4.08M219.71 483.60h-2.40M219.71 487.40h-4.08M219.71 491.20h-2.40M219.71 495.00h-4.08M219.71 498.80h-2.40M219.71 502.60h-4.08M219.71 506.40h-2.40M219.71 510.20h-4.08M219.71 514.00h-2.40M219.71 517.80h-4.08" stroke="#eeeeee" stroke-width="0.6" fill="none"/><path d="M224.91 471.50L224.91 520.00" stroke="#262626" stroke-width="1.2"/><rect x="223.01" y="497.40" width="3.80" height="23.00" fill="url(#rd)"/><rect x="220.76" y="491.00" width="8.30" height="8.00" fill="#1a1a1a"/><rect x="221.16" y="491.40" width="7.50" height="7.10" fill="#807e7a"/><path d="M221.16 494.95L228.66 494.95" stroke="#3a3a3a" stroke-width="0.8"/><path d="M221.16 491.80L228.66 491.80" stroke="#aaa8a5" stroke-width="0.6"/><text x="244.02" y="446.35" font-size="5" fill="#f0f0f0" text-anchor="middle" font-weight="bold" stroke="#f0f0f0" stroke-width="0.22">8</text><rect x="234.60" y="449.70" width="17.40" height="8.50" fill="#5e5a5a"/><rect x="235.00" y="450.10" width="16.60" height="7.70" fill="#322e2e"/><text x="243.30" y="455.70" font-size="4.7" fill="#f4f4f4" text-anchor="middle" font-weight="bold" stroke="#f4f4f4" stroke-width="0.22">100</text><rect x="234.60" y="459.60" width="17.40" height="8.30" fill="#5e5a5a"/><rect x="235.00" y="460.00" width="16.60" height="7.50" fill="#322e2e"/><text x="243.30" y="465.50" font-size="4.7" fill="#f4f4f4" text-anchor="middle" font-weight="bold" stroke="#f4f4f4" stroke-width="0.22">0.0</text><rect x="234.60" y="523.00" width="17.40" height="8.20" fill="#5e5a5a"/><rect x="235.00" y="523.40" width="16.60" height="7.40" fill="#322e2e"/><text x="243.30" y="528.84" font-size="4.7" fill="#f4f4f4" text-anchor="middle" font-weight="bold" stroke="#f4f4f4" stroke-width="0.22">4.32</text><path d="M238.10 472.20L238.10 517.80" stroke="#eeeeee" stroke-width="0.7"/><path d="M238.10 472.20h-4.08M238.10 476.00h-2.40M238.10 479.80h-4.08M238.10 483.60h-2.40M238.10 487.40h-4.08M238.10 491.20h-2.40M238.10 495.00h-4.08M238.10 498.80h-2.40M238.10 502.60h-4.08M238.10 506.40h-2.40M238.10 510.20h-4.08M238.10 514.00h-2.40M238.10 517.80h-4.08" stroke="#eeeeee" stroke-width="0.6" fill="none"/><path d="M243.30 471.50L243.30 520.00" stroke="#262626" stroke-width="1.2"/><rect x="241.40" y="497.40" width="3.80" height="23.00" fill="url(#rd)"/><rect x="239.15" y="491.00" width="8.30" height="8.00" fill="#1a1a1a"/><rect x="239.55" y="491.40" width="7.50" height="7.10" fill="#807e7a"/><path d="M239.55 494.95L247.05 494.95" stroke="#3a3a3a" stroke-width="0.8"/><path d="M239.55 491.80L247.05 491.80" stroke="#aaa8a5" stroke-width="0.6"/><text x="262.48" y="446.35" font-size="5" fill="#f0f0f0" text-anchor="middle" font-weight="bold" stroke="#f0f0f0" stroke-width="0.22">9</text><rect x="252.98" y="449.70" width="17.40" height="8.50" fill="#5e5a5a"/><rect x="253.38" y="450.10" width="16.60" height="7.70" fill="#322e2e"/><text x="261.68" y="455.70" font-size="4.7" fill="#f4f4f4" text-anchor="middle" font-weight="bold" stroke="#f4f4f4" stroke-width="0.22">125</text><rect x="252.98" y="459.60" width="17.40" height="8.30" fill="#5e5a5a"/><rect x="253.38" y="460.00" width="16.60" height="7.50" fill="#322e2e"/><text x="261.68" y="465.50" font-size="4.7" fill="#f4f4f4" text-anchor="middle" font-weight="bold" stroke="#f4f4f4" stroke-width="0.22">0.0</text><rect x="252.98" y="523.00" width="17.40" height="8.20" fill="#5e5a5a"/><rect x="253.38" y="523.40" width="16.60" height="7.40" fill="#322e2e"/><text x="261.68" y="528.84" font-size="4.7" fill="#f4f4f4" text-anchor="middle" font-weight="bold" stroke="#f4f4f4" stroke-width="0.22">4.32</text><path d="M256.48 472.20L256.48 517.80" stroke="#eeeeee" stroke-width="0.7"/><path d="M256.48 472.20h-4.08M256.48 476.00h-2.40M256.48 479.80h-4.08M256.48 483.60h-2.40M256.48 487.40h-4.08M256.48 491.20h-2.40M256.48 495.00h-4.08M256.48 498.80h-2.40M256.48 502.60h-4.08M256.48 506.40h-2.40M256.48 510.20h-4.08M256.48 514.00h-2.40M256.48 517.80h-4.08" stroke="#eeeeee" stroke-width="0.6" fill="none"/><path d="M261.68 471.50L261.68 520.00" stroke="#262626" stroke-width="1.2"/><rect x="259.78" y="497.40" width="3.80" height="23.00" fill="url(#rd)"/><rect x="257.53" y="491.00" width="8.30" height="8.00" fill="#1a1a1a"/><rect x="257.93" y="491.40" width="7.50" height="7.10" fill="#807e7a"/><path d="M257.93 494.95L265.43 494.95" stroke="#3a3a3a" stroke-width="0.8"/><path d="M257.93 491.80L265.43 491.80" stroke="#aaa8a5" stroke-width="0.6"/><text x="280.94" y="446.35" font-size="5" fill="#f0f0f0" text-anchor="middle" font-weight="bold" stroke="#f0f0f0" stroke-width="0.22">10</text><rect x="271.37" y="449.70" width="17.40" height="8.50" fill="#5e5a5a"/><rect x="271.76" y="450.10" width="16.60" height="7.70" fill="#322e2e"/><text x="280.06" y="455.70" font-size="4.7" fill="#f4f4f4" text-anchor="middle" font-weight="bold" stroke="#f4f4f4" stroke-width="0.22">160</text><rect x="271.37" y="459.60" width="17.40" height="8.30" fill="#5e5a5a"/><rect x="271.76" y="460.00" width="16.60" height="7.50" fill="#322e2e"/><text x="280.06" y="465.50" font-size="4.7" fill="#f4f4f4" text-anchor="middle" font-weight="bold" stroke="#f4f4f4" stroke-width="0.22">0.0</text><rect x="271.37" y="523.00" width="17.40" height="8.20" fill="#5e5a5a"/><rect x="271.76" y="523.40" width="16.60" height="7.40" fill="#322e2e"/><text x="280.06" y="528.84" font-size="4.7" fill="#f4f4f4" text-anchor="middle" font-weight="bold" stroke="#f4f4f4" stroke-width="0.22">4.32</text><path d="M274.87 472.20L274.87 517.80" stroke="#eeeeee" stroke-width="0.7"/><path d="M274.87 472.20h-4.08M274.87 476.00h-2.40M274.87 479.80h-4.08M274.87 483.60h-2.40M274.87 487.40h-4.08M274.87 491.20h-2.40M274.87 495.00h-4.08M274.87 498.80h-2.40M274.87 502.60h-4.08M274.87 506.40h-2.40M274.87 510.20h-4.08M274.87 514.00h-2.40M274.87 517.80h-4.08" stroke="#eeeeee" stroke-width="0.6" fill="none"/><path d="M280.06 471.50L280.06 520.00" stroke="#262626" stroke-width="1.2"/><rect x="278.17" y="497.40" width="3.80" height="23.00" fill="url(#rd)"/><rect x="275.92" y="491.00" width="8.30" height="8.00" fill="#1a1a1a"/><rect x="276.31" y="491.40" width="7.50" height="7.10" fill="#807e7a"/><path d="M276.31 494.95L283.81 494.95" stroke="#3a3a3a" stroke-width="0.8"/><path d="M276.31 491.80L283.81 491.80" stroke="#aaa8a5" stroke-width="0.6"/><text x="299.40" y="446.35" font-size="5" fill="#f0f0f0" text-anchor="middle" font-weight="bold" stroke="#f0f0f0" stroke-width="0.22">11</text><rect x="289.75" y="449.70" width="17.40" height="8.50" fill="#5e5a5a"/><rect x="290.15" y="450.10" width="16.60" height="7.70" fill="#322e2e"/><text x="298.45" y="455.70" font-size="4.7" fill="#f4f4f4" text-anchor="middle" font-weight="bold" stroke="#f4f4f4" stroke-width="0.22">200</text><rect x="289.75" y="459.60" width="17.40" height="8.30" fill="#5e5a5a"/><rect x="290.15" y="460.00" width="16.60" height="7.50" fill="#322e2e"/><text x="298.45" y="465.50" font-size="4.7" fill="#f4f4f4" text-anchor="middle" font-weight="bold" stroke="#f4f4f4" stroke-width="0.22">0.0</text><rect x="289.75" y="523.00" width="17.40" height="8.20" fill="#5e5a5a"/><rect x="290.15" y="523.40" width="16.60" height="7.40" fill="#322e2e"/><text x="298.45" y="528.84" font-size="4.7" fill="#f4f4f4" text-anchor="middle" font-weight="bold" stroke="#f4f4f4" stroke-width="0.22">4.32</text><path d="M293.25 472.20L293.25 517.80" stroke="#eeeeee" stroke-width="0.7"/><path d="M293.25 472.20h-4.08M293.25 476.00h-2.40M293.25 479.80h-4.08M293.25 483.60h-2.40M293.25 487.40h-4.08M293.25 491.20h-2.40M293.25 495.00h-4.08M293.25 498.80h-2.40M293.25 502.60h-4.08M293.25 506.40h-2.40M293.25 510.20h-4.08M293.25 514.00h-2.40M293.25 517.80h-4.08" stroke="#eeeeee" stroke-width="0.6" fill="none"/><path d="M298.45 471.50L298.45 520.00" stroke="#262626" stroke-width="1.2"/><rect x="296.55" y="497.40" width="3.80" height="23.00" fill="url(#rd)"/><rect x="294.30" y="491.00" width="8.30" height="8.00" fill="#1a1a1a"/><rect x="294.70" y="491.40" width="7.50" height="7.10" fill="#807e7a"/><path d="M294.70 494.95L302.20 494.95" stroke="#3a3a3a" stroke-width="0.8"/><path d="M294.70 491.80L302.20 491.80" stroke="#aaa8a5" stroke-width="0.6"/><text x="317.86" y="446.35" font-size="5" fill="#f0f0f0" text-anchor="middle" font-weight="bold" stroke="#f0f0f0" stroke-width="0.22">12</text><rect x="308.14" y="449.70" width="17.40" height="8.50" fill="#5e5a5a"/><rect x="308.54" y="450.10" width="16.60" height="7.70" fill="#322e2e"/><text x="316.84" y="455.70" font-size="4.7" fill="#f4f4f4" text-anchor="middle" font-weight="bold" stroke="#f4f4f4" stroke-width="0.22">250</text><rect x="308.14" y="459.60" width="17.40" height="8.30" fill="#5e5a5a"/><rect x="308.54" y="460.00" width="16.60" height="7.50" fill="#322e2e"/><text x="316.84" y="465.50" font-size="4.7" fill="#f4f4f4" text-anchor="middle" font-weight="bold" stroke="#f4f4f4" stroke-width="0.22">0.0</text><rect x="308.14" y="523.00" width="17.40" height="8.20" fill="#5e5a5a"/><rect x="308.54" y="523.40" width="16.60" height="7.40" fill="#322e2e"/><text x="316.84" y="528.84" font-size="4.7" fill="#f4f4f4" text-anchor="middle" font-weight="bold" stroke="#f4f4f4" stroke-width="0.22">4.32</text><path d="M311.64 472.20L311.64 517.80" stroke="#eeeeee" stroke-width="0.7"/><path d="M311.64 472.20h-4.08M311.64 476.00h-2.40M311.64 479.80h-4.08M311.64 483.60h-2.40M311.64 487.40h-4.08M311.64 491.20h-2.40M311.64 495.00h-4.08M311.64 498.80h-2.40M311.64 502.60h-4.08M311.64 506.40h-2.40M311.64 510.20h-4.08M311.64 514.00h-2.40M311.64 517.80h-4.08" stroke="#eeeeee" stroke-width="0.6" fill="none"/><path d="M316.84 471.50L316.84 520.00" stroke="#262626" stroke-width="1.2"/><rect x="314.94" y="497.40" width="3.80" height="23.00" fill="url(#rd)"/><rect x="312.69" y="491.00" width="8.30" height="8.00" fill="#1a1a1a"/><rect x="313.09" y="491.40" width="7.50" height="7.10" fill="#807e7a"/><path d="M313.09 494.95L320.59 494.95" stroke="#3a3a3a" stroke-width="0.8"/><path d="M313.09 491.80L320.59 491.80" stroke="#aaa8a5" stroke-width="0.6"/><text x="336.32" y="446.35" font-size="5" fill="#f0f0f0" text-anchor="middle" font-weight="bold" stroke="#f0f0f0" stroke-width="0.22">13</text><rect x="326.52" y="449.70" width="17.40" height="8.50" fill="#5e5a5a"/><rect x="326.92" y="450.10" width="16.60" height="7.70" fill="#322e2e"/><text x="335.22" y="455.70" font-size="4.7" fill="#f4f4f4" text-anchor="middle" font-weight="bold" stroke="#f4f4f4" stroke-width="0.22">315</text><rect x="326.52" y="459.60" width="17.40" height="8.30" fill="#5e5a5a"/><rect x="326.92" y="460.00" width="16.60" height="7.50" fill="#322e2e"/><text x="335.22" y="465.50" font-size="4.7" fill="#f4f4f4" text-anchor="middle" font-weight="bold" stroke="#f4f4f4" stroke-width="0.22">0.0</text><rect x="326.52" y="523.00" width="17.40" height="8.20" fill="#5e5a5a"/><rect x="326.92" y="523.40" width="16.60" height="7.40" fill="#322e2e"/><text x="335.22" y="528.84" font-size="4.7" fill="#f4f4f4" text-anchor="middle" font-weight="bold" stroke="#f4f4f4" stroke-width="0.22">4.32</text><path d="M330.02 472.20L330.02 517.80" stroke="#eeeeee" stroke-width="0.7"/><path d="M330.02 472.20h-4.08M330.02 476.00h-2.40M330.02 479.80h-4.08M330.02 483.60h-2.40M330.02 487.40h-4.08M330.02 491.20h-2.40M330.02 495.00h-4.08M330.02 498.80h-2.40M330.02 502.60h-4.08M330.02 506.40h-2.40M330.02 510.20h-4.08M330.02 514.00h-2.40M330.02 517.80h-4.08" stroke="#eeeeee" stroke-width="0.6" fill="none"/><path d="M335.22 471.50L335.22 520.00" stroke="#262626" stroke-width="1.2"/><rect x="333.32" y="497.40" width="3.80" height="23.00" fill="url(#rd)"/><rect x="331.07" y="491.00" width="8.30" height="8.00" fill="#1a1a1a"/><rect x="331.47" y="491.40" width="7.50" height="7.10" fill="#807e7a"/><path d="M331.47 494.95L338.97 494.95" stroke="#3a3a3a" stroke-width="0.8"/><path d="M331.47 491.80L338.97 491.80" stroke="#aaa8a5" stroke-width="0.6"/><text x="354.78" y="446.35" font-size="5" fill="#f0f0f0" text-anchor="middle" font-weight="bold" stroke="#f0f0f0" stroke-width="0.22">14</text><rect x="344.91" y="449.70" width="17.40" height="8.50" fill="#5e5a5a"/><rect x="345.31" y="450.10" width="16.60" height="7.70" fill="#322e2e"/><text x="353.61" y="455.70" font-size="4.7" fill="#f4f4f4" text-anchor="middle" font-weight="bold" stroke="#f4f4f4" stroke-width="0.22">400</text><rect x="344.91" y="459.60" width="17.40" height="8.30" fill="#5e5a5a"/><rect x="345.31" y="460.00" width="16.60" height="7.50" fill="#322e2e"/><text x="353.61" y="465.50" font-size="4.7" fill="#f4f4f4" text-anchor="middle" font-weight="bold" stroke="#f4f4f4" stroke-width="0.22">0.0</text><rect x="344.91" y="523.00" width="17.40" height="8.20" fill="#5e5a5a"/><rect x="345.31" y="523.40" width="16.60" height="7.40" fill="#322e2e"/><text x="353.61" y="528.84" font-size="4.7" fill="#f4f4f4" text-anchor="middle" font-weight="bold" stroke="#f4f4f4" stroke-width="0.22">4.32</text><path d="M348.41 472.20L348.41 517.80" stroke="#eeeeee" stroke-width="0.7"/><path d="M348.41 472.20h-4.08M348.41 476.00h-2.40M348.41 479.80h-4.08M348.41 483.60h-2.40M348.41 487.40h-4.08M348.41 491.20h-2.40M348.41 495.00h-4.08M348.41 498.80h-2.40M348.41 502.60h-4.08M348.41 506.40h-2.40M348.41 510.20h-4.08M348.41 514.00h-2.40M348.41 517.80h-4.08" stroke="#eeeeee" stroke-width="0.6" fill="none"/><path d="M353.61 471.50L353.61 520.00" stroke="#262626" stroke-width="1.2"/><rect x="351.71" y="497.40" width="3.80" height="23.00" fill="url(#rd)"/><rect x="349.46" y="491.00" width="8.30" height="8.00" fill="#1a1a1a"/><rect x="349.86" y="491.40" width="7.50" height="7.10" fill="#807e7a"/><path d="M349.86 494.95L357.36 494.95" stroke="#3a3a3a" stroke-width="0.8"/><path d="M349.86 491.80L357.36 491.80" stroke="#aaa8a5" stroke-width="0.6"/><text x="373.24" y="446.35" font-size="5" fill="#f0f0f0" text-anchor="middle" font-weight="bold" stroke="#f0f0f0" stroke-width="0.22">15</text><rect x="363.29" y="449.70" width="17.40" height="8.50" fill="#5e5a5a"/><rect x="363.69" y="450.10" width="16.60" height="7.70" fill="#322e2e"/><text x="371.99" y="455.70" font-size="4.7" fill="#f4f4f4" text-anchor="middle" font-weight="bold" stroke="#f4f4f4" stroke-width="0.22">500</text><rect x="363.29" y="459.60" width="17.40" height="8.30" fill="#5e5a5a"/><rect x="363.69" y="460.00" width="16.60" height="7.50" fill="#322e2e"/><text x="371.99" y="465.50" font-size="4.7" fill="#f4f4f4" text-anchor="middle" font-weight="bold" stroke="#f4f4f4" stroke-width="0.22">0.0</text><rect x="363.29" y="523.00" width="17.40" height="8.20" fill="#5e5a5a"/><rect x="363.69" y="523.40" width="16.60" height="7.40" fill="#322e2e"/><text x="371.99" y="528.84" font-size="4.7" fill="#f4f4f4" text-anchor="middle" font-weight="bold" stroke="#f4f4f4" stroke-width="0.22">4.32</text><path d="M366.79 472.20L366.79 517.80" stroke="#eeeeee" stroke-width="0.7"/><path d="M366.79 472.20h-4.08M366.79 476.00h-2.40M366.79 479.80h-4.08M366.79 483.60h-2.40M366.79 487.40h-4.08M366.79 491.20h-2.40M366.79 495.00h-4.08M366.79 498.80h-2.40M366.79 502.60h-4.08M366.79 506.40h-2.40M366.79 510.20h-4.08M366.79 514.00h-2.40M366.79 517.80h-4.08" stroke="#eeeeee" stroke-width="0.6" fill="none"/><path d="M371.99 471.50L371.99 520.00" stroke="#262626" stroke-width="1.2"/><rect x="370.09" y="497.40" width="3.80" height="23.00" fill="url(#rd)"/><rect x="367.84" y="491.00" width="8.30" height="8.00" fill="#1a1a1a"/><rect x="368.24" y="491.40" width="7.50" height="7.10" fill="#807e7a"/><path d="M368.24 494.95L375.74 494.95" stroke="#3a3a3a" stroke-width="0.8"/><path d="M368.24 491.80L375.74 491.80" stroke="#aaa8a5" stroke-width="0.6"/><text x="391.70" y="446.35" font-size="5" fill="#f0f0f0" text-anchor="middle" font-weight="bold" stroke="#f0f0f0" stroke-width="0.22">16</text><rect x="381.68" y="449.70" width="17.40" height="8.50" fill="#5e5a5a"/><rect x="382.07" y="450.10" width="16.60" height="7.70" fill="#322e2e"/><text x="390.38" y="455.70" font-size="4.7" fill="#f4f4f4" text-anchor="middle" font-weight="bold" stroke="#f4f4f4" stroke-width="0.22">630</text><rect x="381.68" y="459.60" width="17.40" height="8.30" fill="#5e5a5a"/><rect x="382.07" y="460.00" width="16.60" height="7.50" fill="#322e2e"/><text x="390.38" y="465.50" font-size="4.7" fill="#f4f4f4" text-anchor="middle" font-weight="bold" stroke="#f4f4f4" stroke-width="0.22">0.0</text><rect x="381.68" y="523.00" width="17.40" height="8.20" fill="#5e5a5a"/><rect x="382.07" y="523.40" width="16.60" height="7.40" fill="#322e2e"/><text x="390.38" y="528.84" font-size="4.7" fill="#f4f4f4" text-anchor="middle" font-weight="bold" stroke="#f4f4f4" stroke-width="0.22">4.32</text><path d="M385.18 472.20L385.18 517.80" stroke="#eeeeee" stroke-width="0.7"/><path d="M385.18 472.20h-4.08M385.18 476.00h-2.40M385.18 479.80h-4.08M385.18 483.60h-2.40M385.18 487.40h-4.08M385.18 491.20h-2.40M385.18 495.00h-4.08M385.18 498.80h-2.40M385.18 502.60h-4.08M385.18 506.40h-2.40M385.18 510.20h-4.08M385.18 514.00h-2.40M385.18 517.80h-4.08" stroke="#eeeeee" stroke-width="0.6" fill="none"/><path d="M390.38 471.50L390.38 520.00" stroke="#262626" stroke-width="1.2"/><rect x="388.48" y="497.40" width="3.80" height="23.00" fill="url(#rd)"/><rect x="386.23" y="491.00" width="8.30" height="8.00" fill="#1a1a1a"/><rect x="386.62" y="491.40" width="7.50" height="7.10" fill="#807e7a"/><path d="M386.62 494.95L394.12 494.95" stroke="#3a3a3a" stroke-width="0.8"/><path d="M386.62 491.80L394.12 491.80" stroke="#aaa8a5" stroke-width="0.6"/><text x="410.16" y="446.35" font-size="5" fill="#f0f0f0" text-anchor="middle" font-weight="bold" stroke="#f0f0f0" stroke-width="0.22">17</text><rect x="400.06" y="449.70" width="17.40" height="8.50" fill="#5e5a5a"/><rect x="400.46" y="450.10" width="16.60" height="7.70" fill="#322e2e"/><text x="408.76" y="455.70" font-size="4.7" fill="#f4f4f4" text-anchor="middle" font-weight="bold" stroke="#f4f4f4" stroke-width="0.22">800</text><rect x="400.06" y="459.60" width="17.40" height="8.30" fill="#5e5a5a"/><rect x="400.46" y="460.00" width="16.60" height="7.50" fill="#322e2e"/><text x="408.76" y="465.50" font-size="4.7" fill="#f4f4f4" text-anchor="middle" font-weight="bold" stroke="#f4f4f4" stroke-width="0.22">0.0</text><rect x="400.06" y="523.00" width="17.40" height="8.20" fill="#5e5a5a"/><rect x="400.46" y="523.40" width="16.60" height="7.40" fill="#322e2e"/><text x="408.76" y="528.84" font-size="4.7" fill="#f4f4f4" text-anchor="middle" font-weight="bold" stroke="#f4f4f4" stroke-width="0.22">4.32</text><path d="M403.56 472.20L403.56 517.80" stroke="#eeeeee" stroke-width="0.7"/><path d="M403.56 472.20h-4.08M403.56 476.00h-2.40M403.56 479.80h-4.08M403.56 483.60h-2.40M403.56 487.40h-4.08M403.56 491.20h-2.40M403.56 495.00h-4.08M403.56 498.80h-2.40M403.56 502.60h-4.08M403.56 506.40h-2.40M403.56 510.20h-4.08M403.56 514.00h-2.40M403.56 517.80h-4.08" stroke="#eeeeee" stroke-width="0.6" fill="none"/><path d="M408.76 471.50L408.76 520.00" stroke="#262626" stroke-width="1.2"/><rect x="406.86" y="497.40" width="3.80" height="23.00" fill="url(#rd)"/><rect x="404.61" y="491.00" width="8.30" height="8.00" fill="#1a1a1a"/><rect x="405.01" y="491.40" width="7.50" height="7.10" fill="#807e7a"/><path d="M405.01 494.95L412.51 494.95" stroke="#3a3a3a" stroke-width="0.8"/><path d="M405.01 491.80L412.51 491.80" stroke="#aaa8a5" stroke-width="0.6"/><text x="428.62" y="446.35" font-size="5" fill="#f0f0f0" text-anchor="middle" font-weight="bold" stroke="#f0f0f0" stroke-width="0.22">18</text><rect x="418.44" y="449.70" width="17.40" height="8.50" fill="#5e5a5a"/><rect x="418.84" y="450.10" width="16.60" height="7.70" fill="#322e2e"/><text x="427.14" y="455.70" font-size="4.7" fill="#f4f4f4" text-anchor="middle" font-weight="bold" stroke="#f4f4f4" stroke-width="0.22">1000</text><rect x="418.44" y="459.60" width="17.40" height="8.30" fill="#5e5a5a"/><rect x="418.84" y="460.00" width="16.60" height="7.50" fill="#322e2e"/><text x="427.14" y="465.50" font-size="4.7" fill="#f4f4f4" text-anchor="middle" font-weight="bold" stroke="#f4f4f4" stroke-width="0.22">0.0</text><rect x="418.44" y="523.00" width="17.40" height="8.20" fill="#5e5a5a"/><rect x="418.84" y="523.40" width="16.60" height="7.40" fill="#322e2e"/><text x="427.14" y="528.84" font-size="4.7" fill="#f4f4f4" text-anchor="middle" font-weight="bold" stroke="#f4f4f4" stroke-width="0.22">4.32</text><path d="M421.94 472.20L421.94 517.80" stroke="#eeeeee" stroke-width="0.7"/><path d="M421.94 472.20h-4.08M421.94 476.00h-2.40M421.94 479.80h-4.08M421.94 483.60h-2.40M421.94 487.40h-4.08M421.94 491.20h-2.40M421.94 495.00h-4.08M421.94 498.80h-2.40M421.94 502.60h-4.08M421.94 506.40h-2.40M421.94 510.20h-4.08M421.94 514.00h-2.40M421.94 517.80h-4.08" stroke="#eeeeee" stroke-width="0.6" fill="none"/><path d="M427.14 471.50L427.14 520.00" stroke="#262626" stroke-width="1.2"/><rect x="425.25" y="497.40" width="3.80" height="23.00" fill="url(#rd)"/><rect x="423.00" y="491.00" width="8.30" height="8.00" fill="#1a1a1a"/><rect x="423.39" y="491.40" width="7.50" height="7.10" fill="#807e7a"/><path d="M423.39 494.95L430.89 494.95" stroke="#3a3a3a" stroke-width="0.8"/><path d="M423.39 491.80L430.89 491.80" stroke="#aaa8a5" stroke-width="0.6"/><text x="447.08" y="446.35" font-size="5" fill="#f0f0f0" text-anchor="middle" font-weight="bold" stroke="#f0f0f0" stroke-width="0.22">19</text><rect x="436.83" y="449.70" width="17.40" height="8.50" fill="#5e5a5a"/><rect x="437.23" y="450.10" width="16.60" height="7.70" fill="#322e2e"/><text x="445.53" y="455.70" font-size="4.7" fill="#f4f4f4" text-anchor="middle" font-weight="bold" stroke="#f4f4f4" stroke-width="0.22">1250</text><rect x="436.83" y="459.60" width="17.40" height="8.30" fill="#5e5a5a"/><rect x="437.23" y="460.00" width="16.60" height="7.50" fill="#322e2e"/><text x="445.53" y="465.50" font-size="4.7" fill="#f4f4f4" text-anchor="middle" font-weight="bold" stroke="#f4f4f4" stroke-width="0.22">0.0</text><rect x="436.83" y="523.00" width="17.40" height="8.20" fill="#5e5a5a"/><rect x="437.23" y="523.40" width="16.60" height="7.40" fill="#322e2e"/><text x="445.53" y="528.84" font-size="4.7" fill="#f4f4f4" text-anchor="middle" font-weight="bold" stroke="#f4f4f4" stroke-width="0.22">4.32</text><path d="M440.33 472.20L440.33 517.80" stroke="#eeeeee" stroke-width="0.7"/><path d="M440.33 472.20h-4.08M440.33 476.00h-2.40M440.33 479.80h-4.08M440.33 483.60h-2.40M440.33 487.40h-4.08M440.33 491.20h-2.40M440.33 495.00h-4.08M440.33 498.80h-2.40M440.33 502.60h-4.08M440.33 506.40h-2.40M440.33 510.20h-4.08M440.33 514.00h-2.40M440.33 517.80h-4.08" stroke="#eeeeee" stroke-width="0.6" fill="none"/><path d="M445.53 471.50L445.53 520.00" stroke="#262626" stroke-width="1.2"/><rect x="443.63" y="497.40" width="3.80" height="23.00" fill="url(#rd)"/><rect x="441.38" y="491.00" width="8.30" height="8.00" fill="#1a1a1a"/><rect x="441.78" y="491.40" width="7.50" height="7.10" fill="#807e7a"/><path d="M441.78 494.95L449.28 494.95" stroke="#3a3a3a" stroke-width="0.8"/><path d="M441.78 491.80L449.28 491.80" stroke="#aaa8a5" stroke-width="0.6"/><text x="465.54" y="446.35" font-size="5" fill="#f0f0f0" text-anchor="middle" font-weight="bold" stroke="#f0f0f0" stroke-width="0.22">20</text><rect x="455.22" y="449.70" width="17.40" height="8.50" fill="#5e5a5a"/><rect x="455.62" y="450.10" width="16.60" height="7.70" fill="#322e2e"/><text x="463.92" y="455.70" font-size="4.7" fill="#f4f4f4" text-anchor="middle" font-weight="bold" stroke="#f4f4f4" stroke-width="0.22">1600</text><rect x="455.22" y="459.60" width="17.40" height="8.30" fill="#5e5a5a"/><rect x="455.62" y="460.00" width="16.60" height="7.50" fill="#322e2e"/><text x="463.92" y="465.50" font-size="4.7" fill="#f4f4f4" text-anchor="middle" font-weight="bold" stroke="#f4f4f4" stroke-width="0.22">0.0</text><rect x="455.22" y="523.00" width="17.40" height="8.20" fill="#5e5a5a"/><rect x="455.62" y="523.40" width="16.60" height="7.40" fill="#322e2e"/><text x="463.92" y="528.84" font-size="4.7" fill="#f4f4f4" text-anchor="middle" font-weight="bold" stroke="#f4f4f4" stroke-width="0.22">4.32</text><path d="M458.72 472.20L458.72 517.80" stroke="#eeeeee" stroke-width="0.7"/><path d="M458.72 472.20h-4.08M458.72 476.00h-2.40M458.72 479.80h-4.08M458.72 483.60h-2.40M458.72 487.40h-4.08M458.72 491.20h-2.40M458.72 495.00h-4.08M458.72 498.80h-2.40M458.72 502.60h-4.08M458.72 506.40h-2.40M458.72 510.20h-4.08M458.72 514.00h-2.40M458.72 517.80h-4.08" stroke="#eeeeee" stroke-width="0.6" fill="none"/><path d="M463.92 471.50L463.92 520.00" stroke="#262626" stroke-width="1.2"/><rect x="462.02" y="497.40" width="3.80" height="23.00" fill="url(#rd)"/><rect x="459.77" y="491.00" width="8.30" height="8.00" fill="#1a1a1a"/><rect x="460.17" y="491.40" width="7.50" height="7.10" fill="#807e7a"/><path d="M460.17 494.95L467.67 494.95" stroke="#3a3a3a" stroke-width="0.8"/><path d="M460.17 491.80L467.67 491.80" stroke="#aaa8a5" stroke-width="0.6"/><text x="484.00" y="446.35" font-size="5" fill="#f0f0f0" text-anchor="middle" font-weight="bold" stroke="#f0f0f0" stroke-width="0.22">21</text><rect x="473.60" y="449.70" width="17.40" height="8.50" fill="#5e5a5a"/><rect x="474.00" y="450.10" width="16.60" height="7.70" fill="#322e2e"/><text x="482.30" y="455.70" font-size="4.7" fill="#f4f4f4" text-anchor="middle" font-weight="bold" stroke="#f4f4f4" stroke-width="0.22">2000</text><rect x="473.60" y="459.60" width="17.40" height="8.30" fill="#5e5a5a"/><rect x="474.00" y="460.00" width="16.60" height="7.50" fill="#322e2e"/><text x="482.30" y="465.50" font-size="4.7" fill="#f4f4f4" text-anchor="middle" font-weight="bold" stroke="#f4f4f4" stroke-width="0.22">0.0</text><rect x="473.60" y="523.00" width="17.40" height="8.20" fill="#5e5a5a"/><rect x="474.00" y="523.40" width="16.60" height="7.40" fill="#322e2e"/><text x="482.30" y="528.84" font-size="4.7" fill="#f4f4f4" text-anchor="middle" font-weight="bold" stroke="#f4f4f4" stroke-width="0.22">4.32</text><path d="M477.10 472.20L477.10 517.80" stroke="#eeeeee" stroke-width="0.7"/><path d="M477.10 472.20h-4.08M477.10 476.00h-2.40M477.10 479.80h-4.08M477.10 483.60h-2.40M477.10 487.40h-4.08M477.10 491.20h-2.40M477.10 495.00h-4.08M477.10 498.80h-2.40M477.10 502.60h-4.08M477.10 506.40h-2.40M477.10 510.20h-4.08M477.10 514.00h-2.40M477.10 517.80h-4.08" stroke="#eeeeee" stroke-width="0.6" fill="none"/><path d="M482.30 471.50L482.30 520.00" stroke="#262626" stroke-width="1.2"/><rect x="480.40" y="497.40" width="3.80" height="23.00" fill="url(#rd)"/><rect x="478.15" y="491.00" width="8.30" height="8.00" fill="#1a1a1a"/><rect x="478.55" y="491.40" width="7.50" height="7.10" fill="#807e7a"/><path d="M478.55 494.95L486.05 494.95" stroke="#3a3a3a" stroke-width="0.8"/><path d="M478.55 491.80L486.05 491.80" stroke="#aaa8a5" stroke-width="0.6"/><text x="502.46" y="446.35" font-size="5" fill="#f0f0f0" text-anchor="middle" font-weight="bold" stroke="#f0f0f0" stroke-width="0.22">22</text><rect x="491.99" y="449.70" width="17.40" height="8.50" fill="#5e5a5a"/><rect x="492.39" y="450.10" width="16.60" height="7.70" fill="#322e2e"/><text x="500.69" y="455.70" font-size="4.7" fill="#f4f4f4" text-anchor="middle" font-weight="bold" stroke="#f4f4f4" stroke-width="0.22">2500</text><rect x="491.99" y="459.60" width="17.40" height="8.30" fill="#5e5a5a"/><rect x="492.39" y="460.00" width="16.60" height="7.50" fill="#322e2e"/><text x="500.69" y="465.50" font-size="4.7" fill="#f4f4f4" text-anchor="middle" font-weight="bold" stroke="#f4f4f4" stroke-width="0.22">0.0</text><rect x="491.99" y="523.00" width="17.40" height="8.20" fill="#5e5a5a"/><rect x="492.39" y="523.40" width="16.60" height="7.40" fill="#322e2e"/><text x="500.69" y="528.84" font-size="4.7" fill="#f4f4f4" text-anchor="middle" font-weight="bold" stroke="#f4f4f4" stroke-width="0.22">4.32</text><path d="M495.49 472.20L495.49 517.80" stroke="#eeeeee" stroke-width="0.7"/><path d="M495.49 472.20h-4.08M495.49 476.00h-2.40M495.49 479.80h-4.08M495.49 483.60h-2.40M495.49 487.40h-4.08M495.49 491.20h-2.40M495.49 495.00h-4.08M495.49 498.80h-2.40M495.49 502.60h-4.08M495.49 506.40h-2.40M495.49 510.20h-4.08M495.49 514.00h-2.40M495.49 517.80h-4.08" stroke="#eeeeee" stroke-width="0.6" fill="none"/><path d="M500.69 471.50L500.69 520.00" stroke="#262626" stroke-width="1.2"/><rect x="498.79" y="497.40" width="3.80" height="23.00" fill="url(#rd)"/><rect x="496.54" y="491.00" width="8.30" height="8.00" fill="#1a1a1a"/><rect x="496.94" y="491.40" width="7.50" height="7.10" fill="#807e7a"/><path d="M496.94 494.95L504.44 494.95" stroke="#3a3a3a" stroke-width="0.8"/><path d="M496.94 491.80L504.44 491.80" stroke="#aaa8a5" stroke-width="0.6"/><text x="520.92" y="446.35" font-size="5" fill="#f0f0f0" text-anchor="middle" font-weight="bold" stroke="#f0f0f0" stroke-width="0.22">23</text><rect x="510.37" y="449.70" width="17.40" height="8.50" fill="#5e5a5a"/><rect x="510.77" y="450.10" width="16.60" height="7.70" fill="#322e2e"/><text x="519.07" y="455.70" font-size="4.7" fill="#f4f4f4" text-anchor="middle" font-weight="bold" stroke="#f4f4f4" stroke-width="0.22">3150</text><rect x="510.37" y="459.60" width="17.40" height="8.30" fill="#5e5a5a"/><rect x="510.77" y="460.00" width="16.60" height="7.50" fill="#322e2e"/><text x="519.07" y="465.50" font-size="4.7" fill="#f4f4f4" text-anchor="middle" font-weight="bold" stroke="#f4f4f4" stroke-width="0.22">0.0</text><rect x="510.37" y="523.00" width="17.40" height="8.20" fill="#5e5a5a"/><rect x="510.77" y="523.40" width="16.60" height="7.40" fill="#322e2e"/><text x="519.07" y="528.84" font-size="4.7" fill="#f4f4f4" text-anchor="middle" font-weight="bold" stroke="#f4f4f4" stroke-width="0.22">4.32</text><path d="M513.87 472.20L513.87 517.80" stroke="#eeeeee" stroke-width="0.7"/><path d="M513.87 472.20h-4.08M513.87 476.00h-2.40M513.87 479.80h-4.08M513.87 483.60h-2.40M513.87 487.40h-4.08M513.87 491.20h-2.40M513.87 495.00h-4.08M513.87 498.80h-2.40M513.87 502.60h-4.08M513.87 506.40h-2.40M513.87 510.20h-4.08M513.87 514.00h-2.40M513.87 517.80h-4.08" stroke="#eeeeee" stroke-width="0.6" fill="none"/><path d="M519.07 471.50L519.07 520.00" stroke="#262626" stroke-width="1.2"/><rect x="517.17" y="497.40" width="3.80" height="23.00" fill="url(#rd)"/><rect x="514.92" y="491.00" width="8.30" height="8.00" fill="#1a1a1a"/><rect x="515.32" y="491.40" width="7.50" height="7.10" fill="#807e7a"/><path d="M515.32 494.95L522.82 494.95" stroke="#3a3a3a" stroke-width="0.8"/><path d="M515.32 491.80L522.82 491.80" stroke="#aaa8a5" stroke-width="0.6"/><text x="539.38" y="446.35" font-size="5" fill="#f0f0f0" text-anchor="middle" font-weight="bold" stroke="#f0f0f0" stroke-width="0.22">24</text><rect x="528.75" y="449.70" width="17.40" height="8.50" fill="#5e5a5a"/><rect x="529.16" y="450.10" width="16.60" height="7.70" fill="#322e2e"/><text x="537.46" y="455.70" font-size="4.7" fill="#f4f4f4" text-anchor="middle" font-weight="bold" stroke="#f4f4f4" stroke-width="0.22">4000</text><rect x="528.75" y="459.60" width="17.40" height="8.30" fill="#5e5a5a"/><rect x="529.16" y="460.00" width="16.60" height="7.50" fill="#322e2e"/><text x="537.46" y="465.50" font-size="4.7" fill="#f4f4f4" text-anchor="middle" font-weight="bold" stroke="#f4f4f4" stroke-width="0.22">0.0</text><rect x="528.75" y="523.00" width="17.40" height="8.20" fill="#5e5a5a"/><rect x="529.16" y="523.40" width="16.60" height="7.40" fill="#322e2e"/><text x="537.46" y="528.84" font-size="4.7" fill="#f4f4f4" text-anchor="middle" font-weight="bold" stroke="#f4f4f4" stroke-width="0.22">4.32</text><path d="M532.25 472.20L532.25 517.80" stroke="#eeeeee" stroke-width="0.7"/><path d="M532.25 472.20h-4.08M532.25 476.00h-2.40M532.25 479.80h-4.08M532.25 483.60h-2.40M532.25 487.40h-4.08M532.25 491.20h-2.40M532.25 495.00h-4.08M532.25 498.80h-2.40M532.25 502.60h-4.08M532.25 506.40h-2.40M532.25 510.20h-4.08M532.25 514.00h-2.40M532.25 517.80h-4.08" stroke="#eeeeee" stroke-width="0.6" fill="none"/><path d="M537.46 471.50L537.46 520.00" stroke="#262626" stroke-width="1.2"/><rect x="535.56" y="497.40" width="3.80" height="23.00" fill="url(#rd)"/><rect x="533.31" y="491.00" width="8.30" height="8.00" fill="#1a1a1a"/><rect x="533.71" y="491.40" width="7.50" height="7.10" fill="#807e7a"/><path d="M533.71 494.95L541.21 494.95" stroke="#3a3a3a" stroke-width="0.8"/><path d="M533.71 491.80L541.21 491.80" stroke="#aaa8a5" stroke-width="0.6"/><text x="557.84" y="446.35" font-size="5" fill="#f0f0f0" text-anchor="middle" font-weight="bold" stroke="#f0f0f0" stroke-width="0.22">25</text><rect x="547.14" y="449.70" width="17.40" height="8.50" fill="#5e5a5a"/><rect x="547.54" y="450.10" width="16.60" height="7.70" fill="#322e2e"/><text x="555.84" y="455.70" font-size="4.7" fill="#f4f4f4" text-anchor="middle" font-weight="bold" stroke="#f4f4f4" stroke-width="0.22">5000</text><rect x="547.14" y="459.60" width="17.40" height="8.30" fill="#5e5a5a"/><rect x="547.54" y="460.00" width="16.60" height="7.50" fill="#322e2e"/><text x="555.84" y="465.50" font-size="4.7" fill="#f4f4f4" text-anchor="middle" font-weight="bold" stroke="#f4f4f4" stroke-width="0.22">0.0</text><rect x="547.14" y="523.00" width="17.40" height="8.20" fill="#5e5a5a"/><rect x="547.54" y="523.40" width="16.60" height="7.40" fill="#322e2e"/><text x="555.84" y="528.84" font-size="4.7" fill="#f4f4f4" text-anchor="middle" font-weight="bold" stroke="#f4f4f4" stroke-width="0.22">4.32</text><path d="M550.64 472.20L550.64 517.80" stroke="#eeeeee" stroke-width="0.7"/><path d="M550.64 472.20h-4.08M550.64 476.00h-2.40M550.64 479.80h-4.08M550.64 483.60h-2.40M550.64 487.40h-4.08M550.64 491.20h-2.40M550.64 495.00h-4.08M550.64 498.80h-2.40M550.64 502.60h-4.08M550.64 506.40h-2.40M550.64 510.20h-4.08M550.64 514.00h-2.40M550.64 517.80h-4.08" stroke="#eeeeee" stroke-width="0.6" fill="none"/><path d="M555.84 471.50L555.84 520.00" stroke="#262626" stroke-width="1.2"/><rect x="553.94" y="497.40" width="3.80" height="23.00" fill="url(#rd)"/><rect x="551.69" y="491.00" width="8.30" height="8.00" fill="#1a1a1a"/><rect x="552.09" y="491.40" width="7.50" height="7.10" fill="#807e7a"/><path d="M552.09 494.95L559.59 494.95" stroke="#3a3a3a" stroke-width="0.8"/><path d="M552.09 491.80L559.59 491.80" stroke="#aaa8a5" stroke-width="0.6"/><text x="576.30" y="446.35" font-size="5" fill="#f0f0f0" text-anchor="middle" font-weight="bold" stroke="#f0f0f0" stroke-width="0.22">26</text><rect x="565.52" y="449.70" width="17.40" height="8.50" fill="#5e5a5a"/><rect x="565.93" y="450.10" width="16.60" height="7.70" fill="#322e2e"/><text x="574.23" y="455.70" font-size="4.7" fill="#f4f4f4" text-anchor="middle" font-weight="bold" stroke="#f4f4f4" stroke-width="0.22">6300</text><rect x="565.52" y="459.60" width="17.40" height="8.30" fill="#5e5a5a"/><rect x="565.93" y="460.00" width="16.60" height="7.50" fill="#322e2e"/><text x="574.23" y="465.50" font-size="4.7" fill="#f4f4f4" text-anchor="middle" font-weight="bold" stroke="#f4f4f4" stroke-width="0.22">0.0</text><rect x="565.52" y="523.00" width="17.40" height="8.20" fill="#5e5a5a"/><rect x="565.93" y="523.40" width="16.60" height="7.40" fill="#322e2e"/><text x="574.23" y="528.84" font-size="4.7" fill="#f4f4f4" text-anchor="middle" font-weight="bold" stroke="#f4f4f4" stroke-width="0.22">4.32</text><path d="M569.02 472.20L569.02 517.80" stroke="#eeeeee" stroke-width="0.7"/><path d="M569.02 472.20h-4.08M569.02 476.00h-2.40M569.02 479.80h-4.08M569.02 483.60h-2.40M569.02 487.40h-4.08M569.02 491.20h-2.40M569.02 495.00h-4.08M569.02 498.80h-2.40M569.02 502.60h-4.08M569.02 506.40h-2.40M569.02 510.20h-4.08M569.02 514.00h-2.40M569.02 517.80h-4.08" stroke="#eeeeee" stroke-width="0.6" fill="none"/><path d="M574.23 471.50L574.23 520.00" stroke="#262626" stroke-width="1.2"/><rect x="572.33" y="497.40" width="3.80" height="23.00" fill="url(#rd)"/><rect x="570.08" y="491.00" width="8.30" height="8.00" fill="#1a1a1a"/><rect x="570.48" y="491.40" width="7.50" height="7.10" fill="#807e7a"/><path d="M570.48 494.95L577.98 494.95" stroke="#3a3a3a" stroke-width="0.8"/><path d="M570.48 491.80L577.98 491.80" stroke="#aaa8a5" stroke-width="0.6"/><text x="594.76" y="446.35" font-size="5" fill="#f0f0f0" text-anchor="middle" font-weight="bold" stroke="#f0f0f0" stroke-width="0.22">27</text><rect x="583.91" y="449.70" width="17.40" height="8.50" fill="#5e5a5a"/><rect x="584.31" y="450.10" width="16.60" height="7.70" fill="#322e2e"/><text x="592.61" y="455.70" font-size="4.7" fill="#f4f4f4" text-anchor="middle" font-weight="bold" stroke="#f4f4f4" stroke-width="0.22">8000</text><rect x="583.91" y="459.60" width="17.40" height="8.30" fill="#5e5a5a"/><rect x="584.31" y="460.00" width="16.60" height="7.50" fill="#322e2e"/><text x="592.61" y="465.50" font-size="4.7" fill="#f4f4f4" text-anchor="middle" font-weight="bold" stroke="#f4f4f4" stroke-width="0.22">0.0</text><rect x="583.91" y="523.00" width="17.40" height="8.20" fill="#5e5a5a"/><rect x="584.31" y="523.40" width="16.60" height="7.40" fill="#322e2e"/><text x="592.61" y="528.84" font-size="4.7" fill="#f4f4f4" text-anchor="middle" font-weight="bold" stroke="#f4f4f4" stroke-width="0.22">4.32</text><path d="M587.41 472.20L587.41 517.80" stroke="#eeeeee" stroke-width="0.7"/><path d="M587.41 472.20h-4.08M587.41 476.00h-2.40M587.41 479.80h-4.08M587.41 483.60h-2.40M587.41 487.40h-4.08M587.41 491.20h-2.40M587.41 495.00h-4.08M587.41 498.80h-2.40M587.41 502.60h-4.08M587.41 506.40h-2.40M587.41 510.20h-4.08M587.41 514.00h-2.40M587.41 517.80h-4.08" stroke="#eeeeee" stroke-width="0.6" fill="none"/><path d="M592.61 471.50L592.61 520.00" stroke="#262626" stroke-width="1.2"/><rect x="590.71" y="497.40" width="3.80" height="23.00" fill="url(#rd)"/><rect x="588.46" y="491.00" width="8.30" height="8.00" fill="#1a1a1a"/><rect x="588.86" y="491.40" width="7.50" height="7.10" fill="#807e7a"/><path d="M588.86 494.95L596.36 494.95" stroke="#3a3a3a" stroke-width="0.8"/><path d="M588.86 491.80L596.36 491.80" stroke="#aaa8a5" stroke-width="0.6"/><text x="613.22" y="446.35" font-size="5" fill="#f0f0f0" text-anchor="middle" font-weight="bold" stroke="#f0f0f0" stroke-width="0.22">28</text><rect x="602.29" y="449.70" width="17.40" height="8.50" fill="#5e5a5a"/><rect x="602.70" y="450.10" width="16.60" height="7.70" fill="#322e2e"/><text x="611.00" y="455.70" font-size="4.7" fill="#f4f4f4" text-anchor="middle" font-weight="bold" textLength="15.2" lengthAdjust="spacingAndGlyphs" stroke="#f4f4f4" stroke-width="0.22">10000</text><rect x="602.29" y="459.60" width="17.40" height="8.30" fill="#5e5a5a"/><rect x="602.70" y="460.00" width="16.60" height="7.50" fill="#322e2e"/><text x="611.00" y="465.50" font-size="4.7" fill="#f4f4f4" text-anchor="middle" font-weight="bold" stroke="#f4f4f4" stroke-width="0.22">0.0</text><rect x="602.29" y="523.00" width="17.40" height="8.20" fill="#5e5a5a"/><rect x="602.70" y="523.40" width="16.60" height="7.40" fill="#322e2e"/><text x="611.00" y="528.84" font-size="4.7" fill="#f4f4f4" text-anchor="middle" font-weight="bold" stroke="#f4f4f4" stroke-width="0.22">4.32</text><path d="M605.79 472.20L605.79 517.80" stroke="#eeeeee" stroke-width="0.7"/><path d="M605.79 472.20h-4.08M605.79 476.00h-2.40M605.79 479.80h-4.08M605.79 483.60h-2.40M605.79 487.40h-4.08M605.79 491.20h-2.40M605.79 495.00h-4.08M605.79 498.80h-2.40M605.79 502.60h-4.08M605.79 506.40h-2.40M605.79 510.20h-4.08M605.79 514.00h-2.40M605.79 517.80h-4.08" stroke="#eeeeee" stroke-width="0.6" fill="none"/><path d="M611.00 471.50L611.00 520.00" stroke="#262626" stroke-width="1.2"/><rect x="609.10" y="497.40" width="3.80" height="23.00" fill="url(#rd)"/><rect x="606.85" y="491.00" width="8.30" height="8.00" fill="#1a1a1a"/><rect x="607.25" y="491.40" width="7.50" height="7.10" fill="#807e7a"/><path d="M607.25 494.95L614.75 494.95" stroke="#3a3a3a" stroke-width="0.8"/><path d="M607.25 491.80L614.75 491.80" stroke="#aaa8a5" stroke-width="0.6"/><text x="631.68" y="446.35" font-size="5" fill="#f0f0f0" text-anchor="middle" font-weight="bold" stroke="#f0f0f0" stroke-width="0.22">29</text><rect x="620.68" y="449.70" width="17.40" height="8.50" fill="#5e5a5a"/><rect x="621.08" y="450.10" width="16.60" height="7.70" fill="#322e2e"/><text x="629.38" y="455.70" font-size="4.7" fill="#f4f4f4" text-anchor="middle" font-weight="bold" textLength="15.2" lengthAdjust="spacingAndGlyphs" stroke="#f4f4f4" stroke-width="0.22">12500</text><rect x="620.68" y="459.60" width="17.40" height="8.30" fill="#5e5a5a"/><rect x="621.08" y="460.00" width="16.60" height="7.50" fill="#322e2e"/><text x="629.38" y="465.50" font-size="4.7" fill="#f4f4f4" text-anchor="middle" font-weight="bold" stroke="#f4f4f4" stroke-width="0.22">0.0</text><rect x="620.68" y="523.00" width="17.40" height="8.20" fill="#5e5a5a"/><rect x="621.08" y="523.40" width="16.60" height="7.40" fill="#322e2e"/><text x="629.38" y="528.84" font-size="4.7" fill="#f4f4f4" text-anchor="middle" font-weight="bold" stroke="#f4f4f4" stroke-width="0.22">4.32</text><path d="M624.18 472.20L624.18 517.80" stroke="#eeeeee" stroke-width="0.7"/><path d="M624.18 472.20h-4.08M624.18 476.00h-2.40M624.18 479.80h-4.08M624.18 483.60h-2.40M624.18 487.40h-4.08M624.18 491.20h-2.40M624.18 495.00h-4.08M624.18 498.80h-2.40M624.18 502.60h-4.08M624.18 506.40h-2.40M624.18 510.20h-4.08M624.18 514.00h-2.40M624.18 517.80h-4.08" stroke="#eeeeee" stroke-width="0.6" fill="none"/><path d="M629.38 471.50L629.38 520.00" stroke="#262626" stroke-width="1.2"/><rect x="627.48" y="497.40" width="3.80" height="23.00" fill="url(#rd)"/><rect x="625.23" y="491.00" width="8.30" height="8.00" fill="#1a1a1a"/><rect x="625.63" y="491.40" width="7.50" height="7.10" fill="#807e7a"/><path d="M625.63 494.95L633.13 494.95" stroke="#3a3a3a" stroke-width="0.8"/><path d="M625.63 491.80L633.13 491.80" stroke="#aaa8a5" stroke-width="0.6"/><text x="650.14" y="446.35" font-size="5" fill="#f0f0f0" text-anchor="middle" font-weight="bold" stroke="#f0f0f0" stroke-width="0.22">30</text><rect x="639.07" y="449.70" width="17.40" height="8.50" fill="#5e5a5a"/><rect x="639.47" y="450.10" width="16.60" height="7.70" fill="#322e2e"/><text x="647.77" y="455.70" font-size="4.7" fill="#f4f4f4" text-anchor="middle" font-weight="bold" textLength="15.2" lengthAdjust="spacingAndGlyphs" stroke="#f4f4f4" stroke-width="0.22">16000</text><rect x="639.07" y="459.60" width="17.40" height="8.30" fill="#5e5a5a"/><rect x="639.47" y="460.00" width="16.60" height="7.50" fill="#322e2e"/><text x="647.77" y="465.50" font-size="4.7" fill="#f4f4f4" text-anchor="middle" font-weight="bold" stroke="#f4f4f4" stroke-width="0.22">0.0</text><rect x="639.07" y="523.00" width="17.40" height="8.20" fill="#5e5a5a"/><rect x="639.47" y="523.40" width="16.60" height="7.40" fill="#322e2e"/><text x="647.77" y="528.84" font-size="4.7" fill="#f4f4f4" text-anchor="middle" font-weight="bold" stroke="#f4f4f4" stroke-width="0.22">4.32</text><path d="M642.57 472.20L642.57 517.80" stroke="#eeeeee" stroke-width="0.7"/><path d="M642.57 472.20h-4.08M642.57 476.00h-2.40M642.57 479.80h-4.08M642.57 483.60h-2.40M642.57 487.40h-4.08M642.57 491.20h-2.40M642.57 495.00h-4.08M642.57 498.80h-2.40M642.57 502.60h-4.08M642.57 506.40h-2.40M642.57 510.20h-4.08M642.57 514.00h-2.40M642.57 517.80h-4.08" stroke="#eeeeee" stroke-width="0.6" fill="none"/><path d="M647.77 471.50L647.77 520.00" stroke="#262626" stroke-width="1.2"/><rect x="645.87" y="497.40" width="3.80" height="23.00" fill="url(#rd)"/><rect x="643.62" y="491.00" width="8.30" height="8.00" fill="#1a1a1a"/><rect x="644.02" y="491.40" width="7.50" height="7.10" fill="#807e7a"/><path d="M644.02 494.95L651.52 494.95" stroke="#3a3a3a" stroke-width="0.8"/><path d="M644.02 491.80L651.52 491.80" stroke="#aaa8a5" stroke-width="0.6"/><text x="668.60" y="446.35" font-size="5" fill="#f0f0f0" text-anchor="middle" font-weight="bold" stroke="#f0f0f0" stroke-width="0.22">31</text><rect x="657.45" y="449.70" width="17.40" height="8.50" fill="#5e5a5a"/><rect x="657.85" y="450.10" width="16.60" height="7.70" fill="#322e2e"/><text x="666.15" y="455.70" font-size="4.7" fill="#f4f4f4" text-anchor="middle" font-weight="bold" textLength="15.2" lengthAdjust="spacingAndGlyphs" stroke="#f4f4f4" stroke-width="0.22">20000</text><rect x="657.45" y="459.60" width="17.40" height="8.30" fill="#5e5a5a"/><rect x="657.85" y="460.00" width="16.60" height="7.50" fill="#322e2e"/><text x="666.15" y="465.50" font-size="4.7" fill="#f4f4f4" text-anchor="middle" font-weight="bold" stroke="#f4f4f4" stroke-width="0.22">0.0</text><rect x="657.45" y="523.00" width="17.40" height="8.20" fill="#5e5a5a"/><rect x="657.85" y="523.40" width="16.60" height="7.40" fill="#322e2e"/><text x="666.15" y="528.84" font-size="4.7" fill="#f4f4f4" text-anchor="middle" font-weight="bold" stroke="#f4f4f4" stroke-width="0.22">4.32</text><path d="M660.95 472.20L660.95 517.80" stroke="#eeeeee" stroke-width="0.7"/><path d="M660.95 472.20h-4.08M660.95 476.00h-2.40M660.95 479.80h-4.08M660.95 483.60h-2.40M660.95 487.40h-4.08M660.95 491.20h-2.40M660.95 495.00h-4.08M660.95 498.80h-2.40M660.95 502.60h-4.08M660.95 506.40h-2.40M660.95 510.20h-4.08M660.95 514.00h-2.40M660.95 517.80h-4.08" stroke="#eeeeee" stroke-width="0.6" fill="none"/><path d="M666.15 471.50L666.15 520.00" stroke="#262626" stroke-width="1.2"/><rect x="664.25" y="498.50" width="3.80" height="21.90" fill="url(#rd)"/><rect x="662.00" y="492.10" width="8.30" height="8.00" fill="#1a1a1a"/><rect x="662.40" y="492.50" width="7.50" height="7.10" fill="#807e7a"/><path d="M662.40 496.05L669.90 496.05" stroke="#3a3a3a" stroke-width="0.8"/><path d="M662.40 492.90L669.90 492.90" stroke="#aaa8a5" stroke-width="0.6"/><rect x="693.80" y="445.70" width="7.70" height="7.50" fill="#000"/><text x="697.80" y="460.48" font-size="4.8" fill="#f0f0f0" text-anchor="middle" font-weight="bold" stroke="#f0f0f0" stroke-width="0.22">Bypass</text><rect x="687.50" y="468.00" width="21.40" height="9.40" fill="#1d1d1d" opacity="0.8"/><rect x="687.20" y="467.10" width="21.10" height="9.40" fill="url(#gg)"/><path d="M687.20 467.45L708.30 467.45" stroke="#8e8e8e" stroke-width="0.7"/><text x="697.75" y="473.72" font-size="5.2" fill="#f2f2f2" text-anchor="middle" font-weight="bold" stroke="#f2f2f2" stroke-width="0.22">FREQ</text><rect x="687.50" y="481.40" width="21.40" height="10.20" fill="#1d1d1d" opacity="0.8"/><rect x="687.20" y="480.50" width="21.10" height="10.20" fill="url(#gb)"/><path d="M687.20 480.85L708.30 480.85" stroke="#7fc4f5" stroke-width="0.7"/><text x="697.75" y="487.52" font-size="5.2" fill="#f2f2f2" text-anchor="middle" font-weight="bold" stroke="#f2f2f2" stroke-width="0.22">dB</text><rect x="687.50" y="495.10" width="21.40" height="9.90" fill="#1d1d1d" opacity="0.8"/><rect x="687.20" y="494.20" width="21.10" height="9.90" fill="url(#gg)"/><path d="M687.20 494.55L708.30 494.55" stroke="#8e8e8e" stroke-width="0.7"/><text x="697.75" y="501.07" font-size="5.2" fill="#f2f2f2" text-anchor="middle" font-weight="bold" stroke="#f2f2f2" stroke-width="0.22">Q</text><rect x="693.30" y="511.00" width="9.80" height="9.60" fill="#1d1d1d" opacity="0.8"/><rect x="693.00" y="510.10" width="9.50" height="9.60" fill="url(#gg)"/><path d="M693.00 510.45L702.50 510.45" stroke="#8e8e8e" stroke-width="0.7"/><text x="697.80" y="527.18" font-size="4.8" fill="#f0f0f0" text-anchor="middle" font-weight="bold" stroke="#f0f0f0" stroke-width="0.22">RESET</text></svg>
<svg style="position:absolute;left:95.2px;top:698px;" width="354.8" height="318.29999999999995" viewBox="95.2 698 354.8 318.29999999999995"><defs><filter id="sh" x="-5%" y="-5%" width="110%" height="110%"><feGaussianBlur stdDeviation="1.3"/></filter><linearGradient id="hl" x1="0" y1="0" x2="0" y2="1"><stop offset="0" stop-color="#f3f9fd"/><stop offset="1" stop-color="#e3f1fb"/></linearGradient></defs><path d="M95.80 703.90L444.00 703.90" stroke="#dedede" stroke-width="1.4"/><rect x="91.20" y="715.20" width="122.70" height="301.10" fill="#4b4b4b"/><rect x="91.20" y="715.20" width="122.70" height="38.50" fill="#4a55a6"/><rect x="91.20" y="753.70" width="122.70" height="4.50" fill="#000"/><rect x="95.20" y="799.30" width="12.60" height="32.90" fill="#0a0a0a"/><rect x="95.20" y="799.30" width="10.60" height="30.90" fill="#686868"/><path d="M95.20 799.80L105.80 799.80" stroke="#b0b0b0" stroke-width="1"/><rect x="95.20" y="841.50" width="12.60" height="33.20" fill="#0a0a0a"/><rect x="95.20" y="841.50" width="10.60" height="31.20" fill="#686868"/><path d="M95.20 842.00L105.80 842.00" stroke="#b0b0b0" stroke-width="1"/><rect x="95.20" y="945.00" width="12.60" height="48.90" fill="#0a0a0a"/><rect x="95.20" y="945.00" width="10.60" height="46.90" fill="#686868"/><path d="M95.20 945.50L105.80 945.50" stroke="#b0b0b0" stroke-width="1"/><rect x="95.20" y="885.70" width="14.80" height="3.40" fill="#000"/><rect x="95.20" y="991.90" width="14.80" height="1.80" fill="#000"/><rect x="95.20" y="1006.60" width="15.40" height="9.70" fill="#666"/><path d="M95.20 1007.10L110.60 1007.10" stroke="#c8c8c8" stroke-width="1.1"/><rect x="110.60" y="1003.00" width="2.30" height="13.30" fill="#0a0a0a"/><rect x="120.60" y="1006.60" width="70.40" height="9.70" fill="#666"/><path d="M120.60 1007.10L191.00 1007.10" stroke="#c8c8c8" stroke-width="1.1"/><rect x="191.00" y="1003.00" width="1.80" height="13.30" fill="#0a0a0a"/><rect x="202.30" y="1003.00" width="4.30" height="13.30" fill="#000"/><rect x="206.60" y="1003.00" width="7.30" height="13.30" fill="#4a55a6"/><rect x="112.5" y="728.5" width="311.3" height="277.4" fill="#000" opacity="0.47" filter="url(#sh)"/><rect x="108.40" y="718.20" width="311.40" height="284.00" fill="#f5f5f5" stroke="#9a9a9a" stroke-width="1.0"/><rect x="109.00" y="718.80" width="50.40" height="282.80" fill="#f0f0f0"/><path d="M159.70 720.00L159.70 1000.50" stroke="#e3e3e3" stroke-width="1"/><path d="M160.70 720.00L160.70 1000.50" stroke="#ffffff" stroke-width="1"/><path d="M164.00 798.20L415.00 798.20" stroke="#d7d7d7" stroke-width="1.1"/><path d="M164.00 799.30L415.00 799.30" stroke="#fcfcfc" stroke-width="1"/><path d="M164.00 878.20L415.00 878.20" stroke="#d7d7d7" stroke-width="1.1"/><path d="M164.00 879.30L415.00 879.30" stroke="#fcfcfc" stroke-width="1"/><path d="M164.00 958.40L415.00 958.40" stroke="#d7d7d7" stroke-width="1.1"/><path d="M164.00 959.50L415.00 959.50" stroke="#fcfcfc" stroke-width="1"/><text x="171.80" y="748.60" font-size="20.6" fill="#1c1c1c" textLength="77.3" lengthAdjust="spacingAndGlyphs">Connect</text><text x="171.80" y="784.60" font-size="20.6" fill="#1c1c1c" textLength="90.7" lengthAdjust="spacingAndGlyphs">Language</text><text x="171.80" y="829.10" font-size="20.6" fill="#1c1c1c" textLength="50.8" lengthAdjust="spacingAndGlyphs">Open</text><text x="171.80" y="864.60" font-size="20.6" fill="#1c1c1c" textLength="71.7" lengthAdjust="spacingAndGlyphs">Save As</text><text x="171.80" y="908.80" font-size="20.6" fill="#1c1c1c" textLength="145.0" lengthAdjust="spacingAndGlyphs">Restore Factory</text><text x="171.80" y="944.60" font-size="20.6" fill="#8a8a8a" textLength="160.4" lengthAdjust="spacingAndGlyphs">Modify Password</text><text x="171.80" y="988.50" font-size="20.6" fill="#1c1c1c" textLength="57.6" lengthAdjust="spacingAndGlyphs">About</text><path d="M398.2 771.9L404.8 777.7L398.2 783.5z" stroke="none" stroke-width="1" fill="#1a1a1a"/></svg>
<svg style="position:absolute;left:899.1px;top:160px;" width="312.9" height="181.5" viewBox="899.1 160 312.9 181.5"><defs><filter id="sh" x="-5%" y="-5%" width="110%" height="110%"><feGaussianBlur stdDeviation="1.3"/></filter><linearGradient id="hl" x1="0" y1="0" x2="0" y2="1"><stop offset="0" stop-color="#f3f9fd"/><stop offset="1" stop-color="#e3f1fb"/></linearGradient></defs><path d="M899.00 163.60L1208.00 163.60" stroke="#dedede" stroke-width="1.0"/><g transform="matrix(0.5633,0,0,0.5592,843.8,-234.3)"><rect x="91.20" y="715.20" width="121.80" height="314.60" fill="#4b4b4b"/><rect x="91.20" y="715.20" width="121.80" height="38.50" fill="#4a55a6"/><rect x="91.20" y="753.70" width="121.80" height="4.50" fill="#000"/><rect x="95.20" y="799.30" width="12.60" height="32.90" fill="#0a0a0a"/><rect x="95.20" y="799.30" width="10.60" height="30.90" fill="#686868"/><path d="M95.20 799.80L105.80 799.80" stroke="#b0b0b0" stroke-width="1"/><rect x="95.20" y="841.50" width="12.60" height="33.20" fill="#0a0a0a"/><rect x="95.20" y="841.50" width="10.60" height="31.20" fill="#686868"/><path d="M95.20 842.00L105.80 842.00" stroke="#b0b0b0" stroke-width="1"/><rect x="95.20" y="945.00" width="12.60" height="48.90" fill="#0a0a0a"/><rect x="95.20" y="945.00" width="10.60" height="46.90" fill="#686868"/><path d="M95.20 945.50L105.80 945.50" stroke="#b0b0b0" stroke-width="1"/><rect x="95.20" y="885.70" width="14.80" height="3.40" fill="#000"/><rect x="95.20" y="991.90" width="14.80" height="1.80" fill="#000"/><rect x="95.20" y="1006.60" width="15.40" height="23.20" fill="#666"/><path d="M95.20 1007.10L110.60 1007.10" stroke="#c8c8c8" stroke-width="1.1"/><rect x="110.60" y="1003.00" width="2.30" height="26.80" fill="#0a0a0a"/><rect x="120.60" y="1006.60" width="70.40" height="23.20" fill="#666"/><path d="M120.60 1007.10L191.00 1007.10" stroke="#c8c8c8" stroke-width="1.1"/><rect x="191.00" y="1003.00" width="1.80" height="26.80" fill="#0a0a0a"/><rect x="202.30" y="1003.00" width="4.30" height="26.80" fill="#000"/><rect x="206.60" y="1003.00" width="6.40" height="26.80" fill="#4a55a6"/><rect x="112.5" y="728.5" width="311.3" height="277.4" fill="#000" opacity="0.47" filter="url(#sh)"/><rect x="108.40" y="718.20" width="311.40" height="284.00" fill="#f5f5f5" stroke="#9a9a9a" stroke-width="1.0"/><rect x="109.00" y="718.80" width="50.40" height="282.80" fill="#f0f0f0"/><path d="M159.70 720.00L159.70 1000.50" stroke="#e3e3e3" stroke-width="1"/><path d="M160.70 720.00L160.70 1000.50" stroke="#ffffff" stroke-width="1"/><path d="M164.00 798.20L415.00 798.20" stroke="#d7d7d7" stroke-width="1.1"/><path d="M164.00 799.30L415.00 799.30" stroke="#fcfcfc" stroke-width="1"/><path d="M164.00 878.20L415.00 878.20" stroke="#d7d7d7" stroke-width="1.1"/><path d="M164.00 879.30L415.00 879.30" stroke="#fcfcfc" stroke-width="1"/><path d="M164.00 958.40L415.00 958.40" stroke="#d7d7d7" stroke-width="1.1"/><path d="M164.00 959.50L415.00 959.50" stroke="#fcfcfc" stroke-width="1"/><rect x="113.10" y="758.30" width="297.10" height="35.30" fill="url(#hl)" stroke="#a6d8ef" stroke-width="1.4" rx="2.5"/><text x="171.80" y="748.60" font-size="20.6" fill="#1c1c1c" textLength="77.3" lengthAdjust="spacingAndGlyphs">Connect</text><text x="171.80" y="784.60" font-size="20.6" fill="#1c1c1c" textLength="90.7" lengthAdjust="spacingAndGlyphs">Language</text><text x="171.80" y="829.10" font-size="20.6" fill="#1c1c1c" textLength="50.8" lengthAdjust="spacingAndGlyphs">Open</text><text x="171.80" y="864.60" font-size="20.6" fill="#1c1c1c" textLength="71.7" lengthAdjust="spacingAndGlyphs">Save As</text><text x="171.80" y="908.80" font-size="20.6" fill="#1c1c1c" textLength="145.0" lengthAdjust="spacingAndGlyphs">Restore Factory</text><text x="171.80" y="944.60" font-size="20.6" fill="#8a8a8a" textLength="160.4" lengthAdjust="spacingAndGlyphs">Modify Password</text><text x="171.80" y="988.50" font-size="20.6" fill="#1c1c1c" textLength="57.6" lengthAdjust="spacingAndGlyphs">About</text><path d="M398.2 771.9L404.8 777.7L398.2 783.5z" stroke="none" stroke-width="1" fill="#1a1a1a"/></g><rect x="1075.30" y="187.40" width="126.30" height="45.10" fill="#f1f1f1" stroke="#a0a0a0" stroke-width="0.9"/><path d="M1104.50 189.50L1104.50 230.50" stroke="#dcdcdc" stroke-width="0.8"/><path d="M1105.20 189.50L1105.20 230.50" stroke="#fdfdfd" stroke-width="0.8"/><text x="1110.10" y="204.34" font-size="11.2" fill="#1a1a1a" textLength="44.3" lengthAdjust="spacingAndGlyphs" font-family="Noto Sans CJK SC, sans-serif">简体中文</text><text x="1110.30" y="224.82" font-size="11.6" fill="#8c8c8c" textLength="36.2" lengthAdjust="spacingAndGlyphs">English</text><rect x="1078.40" y="210.80" width="19.20" height="18.60" fill="#c9e2f5" stroke="#5aa6d8" stroke-width="1" rx="1.2"/><path d="M1084 219.6L1087.2 223.2L1092.3 216.3" stroke="#6e6e78" stroke-width="1.7" fill="none"/></svg>
<svg style="position:absolute;left:915px;top:466px;" width="525" height="140" viewBox="915 466 525 140"><defs><linearGradient id="okb" x1="0" y1="0" x2="0" y2="1"><stop offset="0" stop-color="#3ea0f6"/><stop offset="1" stop-color="#1e8cee"/></linearGradient></defs><rect x="917.90" y="469.90" width="208.10" height="132.40" fill="#fff"/><rect x="917.90" y="469.90" width="208.10" height="17.90" fill="#4a53a2"/><path d="M917.9 602.3H1126V487.8" stroke="#4f5390" stroke-width="1.1" fill="none"/><text x="1020.95" y="480.96" font-size="8.6" fill="#dfe4fb" text-anchor="middle" textLength="70.5" lengthAdjust="spacingAndGlyphs">Modify Password</text><text x="981.40" y="510.77" font-size="8.2" fill="#484848" text-anchor="end" textLength="22.0" lengthAdjust="spacingAndGlyphs">Origin</text><text x="981.40" y="518.97" font-size="8.2" fill="#484848" text-anchor="end" textLength="40.2" lengthAdjust="spacingAndGlyphs">Password:</text><text x="981.40" y="536.07" font-size="8.2" fill="#484848" text-anchor="end" textLength="58.8" lengthAdjust="spacingAndGlyphs">New Password:</text><text x="981.40" y="552.87" font-size="8.2" fill="#484848" text-anchor="end" textLength="28.7" lengthAdjust="spacingAndGlyphs">Confirm</text><text x="981.40" y="561.37" font-size="8.2" fill="#484848" text-anchor="end" textLength="40.2" lengthAdjust="spacingAndGlyphs">Password:</text><rect x="989.10" y="505.20" width="108.70" height="13.90" fill="#fff" stroke="#c3c7cc" stroke-width="1"/><rect x="989.10" y="526.40" width="108.70" height="14.10" fill="#fff" stroke="#c3c7cc" stroke-width="1"/><rect x="987.70" y="548.30" width="109.10" height="13.70" fill="#fff" stroke="#c3c7cc" stroke-width="1"/><rect x="957.20" y="572.50" width="46.10" height="16.10" fill="#f7fbfe" stroke="#9acbee" stroke-width="1"/><path d="M957.20 588.60L1003.30 588.60" stroke="#5b9fd8" stroke-width="1"/><text x="980.25" y="583.76" font-size="8.6" fill="#4a4a4a" text-anchor="middle">OK</text><rect x="1043.00" y="572.50" width="46.70" height="16.10" fill="#fff" stroke="#2d2d5c" stroke-width="1.1"/><text x="1066.35" y="583.76" font-size="8.6" fill="#2a2a2a" text-anchor="middle" textLength="21.0" lengthAdjust="spacingAndGlyphs">Close</text><rect x="1229.30" y="469.90" width="205.80" height="132.70" fill="#fff"/><rect x="1229.30" y="469.90" width="205.80" height="18.60" fill="#4a53a2"/><path d="M1229.3 488.5V602.6H1435.1V488.5" stroke="#5a5e9c" stroke-width="1" fill="none"/><text x="1331.20" y="482.31" font-size="8.6" fill="#dfe4fb" text-anchor="middle" textLength="70.5" lengthAdjust="spacingAndGlyphs">Modify Password</text><text x="1291.80" y="511.57" font-size="8.2" fill="#484848" text-anchor="end" textLength="22.0" lengthAdjust="spacingAndGlyphs">Origin</text><text x="1291.80" y="519.77" font-size="8.2" fill="#484848" text-anchor="end" textLength="40.2" lengthAdjust="spacingAndGlyphs">Password:</text><text x="1291.80" y="536.87" font-size="8.2" fill="#484848" text-anchor="end" textLength="58.8" lengthAdjust="spacingAndGlyphs">New Password:</text><text x="1291.80" y="553.67" font-size="8.2" fill="#484848" text-anchor="end" textLength="28.7" lengthAdjust="spacingAndGlyphs">Confirm</text><text x="1291.80" y="562.17" font-size="8.2" fill="#484848" text-anchor="end" textLength="40.2" lengthAdjust="spacingAndGlyphs">Password:</text><rect x="1299.80" y="506.90" width="108.00" height="13.60" fill="#fff" stroke="#c3c7cc" stroke-width="1"/><text x="1301.40" y="515.23" font-size="7.5" fill="#222" font-weight="bold" textLength="15.2" lengthAdjust="spacingAndGlyphs">******</text><rect x="1299.80" y="528.00" width="108.00" height="13.40" fill="#fff" stroke="#c3c7cc" stroke-width="1"/><text x="1301.40" y="536.23" font-size="7.5" fill="#222" font-weight="bold" textLength="15.2" lengthAdjust="spacingAndGlyphs">******</text><rect x="1298.30" y="549.00" width="108.50" height="13.40" fill="#fff" stroke="#8e96a0" stroke-width="1"/><text x="1299.90" y="557.23" font-size="7.5" fill="#222" font-weight="bold" textLength="15.2" lengthAdjust="spacingAndGlyphs">******</text><path d="M1315.70 550.50L1315.70 559.90" stroke="#111" stroke-width="0.9"/><rect x="1267.20" y="572.20" width="47.50" height="17.10" fill="url(#okb)" stroke="#2a8ae8" stroke-width="0.8"/><rect x="1268.70" y="573.80" width="44.50" height="2.60" fill="#7cc0fa"/><text x="1290.95" y="583.96" font-size="8.6" fill="#163a6a" text-anchor="middle">OK</text><rect x="1353.40" y="573.30" width="46.30" height="15.30" fill="#fff" stroke="#8a8aa6" stroke-width="1.1"/><text x="1376.55" y="584.16" font-size="8.6" fill="#2a2a2a" text-anchor="middle" textLength="21.0" lengthAdjust="spacingAndGlyphs">Close</text><path d="M1163.2 530.3H1180V520.2L1192.5 532.6L1180 544.9V534.9H1163.2z" stroke="none" stroke-width="1" fill="#000"/></svg>
<svg style="position:absolute;left:924px;top:777px;" width="106" height="88" viewBox="924 777 106 88"><defs><linearGradient id="gg" x1="0" y1="0" x2="0" y2="1"><stop offset="0" stop-color="#6c6c6c"/><stop offset="1" stop-color="#565656"/></linearGradient><linearGradient id="gb" x1="0" y1="0" x2="0" y2="1"><stop offset="0" stop-color="#1d93e6"/><stop offset="1" stop-color="#0a78cc"/></linearGradient><linearGradient id="rd" x1="0" y1="0" x2="1" y2="0"><stop offset="0" stop-color="#6a2424"/><stop offset="0.5" stop-color="#ae2b2b"/><stop offset="1" stop-color="#6a2424"/></linearGradient><linearGradient id="tb" x1="0" y1="0" x2="0" y2="1"><stop offset="0" stop-color="#4b55a4"/><stop offset="1" stop-color="#444e9a"/></linearGradient></defs><rect x="924.10" y="777.10" width="105.90" height="87.80" fill="#4b55a6"/><rect x="926.30" y="784.30" width="103.70" height="80.60" fill="#151515"/><rect x="928.90" y="786.80" width="101.10" height="78.10" fill="#484848"/><text x="932.60" y="804.86" font-size="11.8" fill="#f4f4f4" textLength="49.2" lengthAdjust="spacingAndGlyphs">SOURCE</text><rect x="989.30" y="794.30" width="43.30" height="16.80" fill="#161616"/><rect x="989.30" y="793.10" width="42.70" height="16.60" fill="url(#gg)"/><path d="M989.30 793.80L1032.00 793.80" stroke="#a4a4a4" stroke-width="1.3"/><text x="1009.20" y="804.83" font-size="12" fill="#fafafa" text-anchor="middle" textLength="13.5" lengthAdjust="spacingAndGlyphs">BT</text><rect x="933.30" y="818.20" width="41.90" height="16.80" fill="#161616"/><rect x="933.30" y="817.00" width="41.30" height="16.60" fill="url(#gb)"/><path d="M933.30 817.70L974.60 817.70" stroke="#8fd0f8" stroke-width="1.3"/><text x="953.95" y="828.73" font-size="12" fill="#fafafa" text-anchor="middle" textLength="29.5" lengthAdjust="spacingAndGlyphs">MAIN</text><rect x="989.30" y="818.20" width="43.30" height="17.20" fill="#161616"/><rect x="989.30" y="817.00" width="42.70" height="17.00" fill="url(#gg)"/><path d="M989.30 817.70L1032.00 817.70" stroke="#a4a4a4" stroke-width="1.3"/><text x="1010.20" y="828.93" font-size="12" fill="#fafafa" text-anchor="middle" textLength="36.0" lengthAdjust="spacingAndGlyphs">SPDIF</text><rect x="933.30" y="842.20" width="41.90" height="16.80" fill="#161616"/><rect x="933.30" y="841.00" width="41.30" height="16.60" fill="url(#gg)"/><path d="M933.30 841.70L974.60 841.70" stroke="#a4a4a4" stroke-width="1.3"/><text x="953.95" y="852.73" font-size="12" fill="#fafafa" text-anchor="middle" textLength="23.5" lengthAdjust="spacingAndGlyphs">AUX</text><rect x="989.30" y="842.20" width="43.30" height="16.80" fill="#161616"/><rect x="989.30" y="841.00" width="42.70" height="16.60" fill="url(#gg)"/><path d="M989.30 841.70L1032.00 841.70" stroke="#a4a4a4" stroke-width="1.3"/><text x="1010.20" y="852.73" font-size="12" fill="#fafafa" text-anchor="middle" textLength="33.0" lengthAdjust="spacingAndGlyphs">COAX</text></svg>
<svg style="position:absolute;left:1281px;top:768px;" width="90" height="128.5" viewBox="1281 768 90 128.5"><defs><linearGradient id="gg" x1="0" y1="0" x2="0" y2="1"><stop offset="0" stop-color="#6c6c6c"/><stop offset="1" stop-color="#565656"/></linearGradient><linearGradient id="gb" x1="0" y1="0" x2="0" y2="1"><stop offset="0" stop-color="#1d93e6"/><stop offset="1" stop-color="#0a78cc"/></linearGradient><linearGradient id="rd" x1="0" y1="0" x2="1" y2="0"><stop offset="0" stop-color="#6a2424"/><stop offset="0.5" stop-color="#ae2b2b"/><stop offset="1" stop-color="#6a2424"/></linearGradient><linearGradient id="tb" x1="0" y1="0" x2="0" y2="1"><stop offset="0" stop-color="#4b55a4"/><stop offset="1" stop-color="#444e9a"/></linearGradient></defs><rect x="1281.90" y="768.80" width="88.10" height="126.90" fill="#484848"/><rect x="1281.90" y="768.80" width="88.10" height="1.40" fill="#0a0a0a"/><rect x="1281.90" y="828.80" width="88.10" height="1.50" fill="#0a0a0a"/><text x="1325.80" y="782.17" font-size="6.9" fill="#f2f2f2" text-anchor="middle" textLength="40.6" lengthAdjust="spacingAndGlyphs">CH SETTING</text><rect x="1292.30" y="791.20" width="27.80" height="11.80" fill="#222" opacity="0.8"/><rect x="1291.90" y="790.20" width="27.40" height="11.80" fill="url(#gg)"/><path d="M1291.90 790.60L1319.30 790.60" stroke="#8a8a8a" stroke-width="0.8"/><text x="1306.20" y="798.47" font-size="6.6" fill="#f2f2f2" text-anchor="middle" font-weight="bold">2CH</text><rect x="1333.70" y="791.20" width="27.80" height="11.80" fill="#222" opacity="0.8"/><rect x="1333.30" y="790.20" width="27.40" height="11.80" fill="url(#gg)"/><path d="M1333.30 790.60L1360.70 790.60" stroke="#8a8a8a" stroke-width="0.8"/><text x="1347.60" y="798.47" font-size="6.6" fill="#f2f2f2" text-anchor="middle" font-weight="bold">4CH</text><rect x="1292.30" y="808.50" width="27.80" height="12.10" fill="#222" opacity="0.8"/><rect x="1291.90" y="807.50" width="27.40" height="12.10" fill="url(#gg)"/><path d="M1291.90 807.90L1319.30 807.90" stroke="#8a8a8a" stroke-width="0.8"/><text x="1306.20" y="815.92" font-size="6.6" fill="#f2f2f2" text-anchor="middle" font-weight="bold">6CH</text><text x="1327.20" y="842.71" font-size="7" fill="#f4f4f4" text-anchor="middle" font-weight="bold" textLength="39.5" lengthAdjust="spacingAndGlyphs">Filter Model</text><rect x="1304.90" y="852.70" width="8.90" height="8.30" fill="#000"/><text x="1323.50" y="858.77" font-size="6.6" fill="#f4f4f4" font-weight="bold" textLength="26.4" lengthAdjust="spacingAndGlyphs">Linkwitz</text><rect x="1304.90" y="864.90" width="8.90" height="8.90" fill="#000"/><text x="1323.50" y="871.57" font-size="6.6" fill="#f4f4f4" font-weight="bold" textLength="19.5" lengthAdjust="spacingAndGlyphs">Bessel</text><rect x="1304.90" y="877.40" width="8.90" height="9.20" fill="#000"/><rect x="1307.40" y="879.90" width="4.20" height="4.10" fill="#d21428" rx="0.8"/><text x="1323.50" y="884.27" font-size="6.6" fill="#f4f4f4" font-weight="bold" textLength="39.3" lengthAdjust="spacingAndGlyphs">Butterworth</text></svg>
<svg style="position:absolute;left:909.9px;top:916.9px;" width="108.89999999999998" height="175.69999999999993" viewBox="909.9 916.9 108.89999999999998 175.69999999999993"><defs><linearGradient id="gg" x1="0" y1="0" x2="0" y2="1"><stop offset="0" stop-color="#6c6c6c"/><stop offset="1" stop-color="#565656"/></linearGradient><linearGradient id="gb" x1="0" y1="0" x2="0" y2="1"><stop offset="0" stop-color="#1d93e6"/><stop offset="1" stop-color="#0a78cc"/></linearGradient><linearGradient id="rd" x1="0" y1="0" x2="1" y2="0"><stop offset="0" stop-color="#6a2424"/><stop offset="0.5" stop-color="#ae2b2b"/><stop offset="1" stop-color="#6a2424"/></linearGradient><linearGradient id="tb" x1="0" y1="0" x2="0" y2="1"><stop offset="0" stop-color="#4b55a4"/><stop offset="1" stop-color="#444e9a"/></linearGradient></defs><rect x="909.90" y="916.90" width="108.90" height="175.70" fill="#484848"/><rect x="909.90" y="916.90" width="108.90" height="2.70" fill="#0c0c0c"/><rect x="909.90" y="968.20" width="37.10" height="2.40" fill="#0c0c0c"/><text x="927.60" y="929.31" font-size="7.6" fill="#f2f2f2" text-anchor="middle" textLength="20.8" lengthAdjust="spacingAndGlyphs">INPUT</text><text x="979.80" y="929.31" font-size="7.6" fill="#f2f2f2" text-anchor="middle" textLength="28.1" lengthAdjust="spacingAndGlyphs">OUTPUT</text><rect x="913.60" y="936.20" width="30.20" height="12.00" fill="#1c1c1c"/><rect x="913.20" y="935.20" width="29.90" height="11.80" fill="url(#gg)"/><path d="M913.20 935.60L943.10 935.60" stroke="#8a8a8a" stroke-width="0.8"/><path d="M937.2 942.6h3l-1.5 2z" stroke="none" stroke-width="1" fill="#fff"/><rect x="913.60" y="952.20" width="30.20" height="12.00" fill="#1c1c1c"/><rect x="913.20" y="951.20" width="29.90" height="11.80" fill="url(#gg)"/><path d="M913.20 951.60L943.10 951.60" stroke="#8a8a8a" stroke-width="0.8"/><path d="M937.2 958.6h3l-1.5 2z" stroke="none" stroke-width="1" fill="#fff"/><rect x="905.40" y="987.20" width="12.60" height="11.80" fill="#1c1c1c"/><rect x="905.00" y="986.20" width="12.20" height="11.80" fill="url(#gg)"/><path d="M905.00 986.60L917.20 986.60" stroke="#8a8a8a" stroke-width="0.8"/><rect x="925.60" y="987.20" width="25.20" height="11.80" fill="#1c1c1c"/><rect x="925.20" y="986.20" width="24.80" height="11.80" fill="url(#gg)"/><path d="M925.20 986.60L950.00 986.60" stroke="#8a8a8a" stroke-width="0.8"/><text x="939.40" y="994.68" font-size="7.2" fill="#f2f2f2" text-anchor="middle" textLength="13.5" lengthAdjust="spacingAndGlyphs">SUB</text><rect x="905.00" y="1000.90" width="10.20" height="9.90" fill="#2e2a2a"/><rect x="925.50" y="1000.90" width="24.50" height="9.90" fill="#2e2a2a"/><text x="939.40" y="1008.03" font-size="6.2" fill="#f2f2f2" text-anchor="middle">0.0</text><text x="923.60" y="1022.83" font-size="5.6" fill="#f2f2f2" text-anchor="middle" font-weight="bold">+12</text><text x="926.80" y="1074.63" font-size="5.6" fill="#f2f2f2" text-anchor="middle" font-weight="bold">0</text><path d="M934.30 1020.30L934.30 1072.70" stroke="#d0d0d0" stroke-width="0.7"/><path d="M934.30 1020.30h-5.10M934.30 1026.85h-3.00M934.30 1033.40h-5.10M934.30 1039.95h-3.00M934.30 1046.50h-5.10M934.30 1053.05h-3.00M934.30 1059.60h-5.10M934.30 1066.15h-3.00M934.30 1072.70h-5.10" stroke="#d0d0d0" stroke-width="0.6" fill="none"/><path d="M941.20 1018.50L941.20 1082.00" stroke="#262626" stroke-width="1.6"/><rect x="935.50" y="1069.10" width="11.20" height="9.70" fill="#1a1a1a"/><rect x="935.90" y="1069.50" width="10.40" height="8.80" fill="#807e7a"/><path d="M935.90 1073.90L946.30 1073.90" stroke="#3a3a3a" stroke-width="0.8"/><path d="M935.90 1069.90L946.30 1069.90" stroke="#aaa8a5" stroke-width="0.6"/><rect x="946.70" y="935.50" width="72.10" height="157.10" fill="#4a53a2"/><rect x="947.80" y="952.70" width="71.00" height="114.40" fill="#fff"/><rect x="947.80" y="1067.10" width="71.00" height="21.60" fill="#9b9b9b"/><text x="983.00" y="946.61" font-size="7.6" fill="#f4f6ff" text-anchor="middle" font-weight="bold" textLength="56.5" lengthAdjust="spacingAndGlyphs">INPUT SETTING</text><text x="962.90" y="963.31" font-size="7.6" fill="#333" text-anchor="middle" textLength="22.7" lengthAdjust="spacingAndGlyphs">INPUT</text><text x="1005.00" y="963.31" font-size="7.6" fill="#333" text-anchor="middle" textLength="14.3" lengthAdjust="spacingAndGlyphs">MIX</text><text x="959.80" y="979.48" font-size="7.2" fill="#333" text-anchor="middle">1</text><text x="985.80" y="979.34" font-size="6.8" fill="#333" text-anchor="middle">0°</text><rect x="1000.20" y="971.90" width="10.70" height="10.20" fill="#fff" stroke="#c4c4c4" stroke-width="0.9"/><rect x="1002.90" y="974.20" width="5.60" height="5.60" fill="#e01020"/><text x="959.80" y="995.78" font-size="7.2" fill="#333" text-anchor="middle">2</text><text x="985.80" y="995.64" font-size="6.8" fill="#333" text-anchor="middle">0°</text><rect x="1000.20" y="988.20" width="10.70" height="10.20" fill="#fff" stroke="#c4c4c4" stroke-width="0.9"/><text x="959.80" y="1012.18" font-size="7.2" fill="#333" text-anchor="middle">3</text><text x="985.80" y="1012.04" font-size="6.8" fill="#333" text-anchor="middle">0°</text><rect x="1000.20" y="1004.60" width="10.70" height="10.20" fill="#fff" stroke="#c4c4c4" stroke-width="0.9"/><text x="959.80" y="1028.48" font-size="7.2" fill="#333" text-anchor="middle">4</text><text x="985.80" y="1028.34" font-size="6.8" fill="#333" text-anchor="middle">0°</text><rect x="1000.20" y="1020.90" width="10.70" height="10.20" fill="#fff" stroke="#c4c4c4" stroke-width="0.9"/><rect x="968.60" y="1072.70" width="28.40" height="12.30" fill="#e6e6e6" stroke="#b8b8b8" stroke-width="0.6"/><text x="982.80" y="1081.45" font-size="7.4" fill="#222" text-anchor="middle">OK</text></svg>
<svg style="position:absolute;left:1070px;top:740px;" width="180" height="240" viewBox="1070 740 180 240"><circle cx="1234.10" cy="752.60" r="7.35" fill="none" stroke="#1a1a1a" stroke-width="1.0"/><rect x="1081.50" y="955.20" width="18.60" height="20.30" fill="#fff" stroke="#a2a2a2" stroke-width="1.4"/><rect x="1085.70" y="960.50" width="10.60" height="10.20" fill="#f0000a"/></svg>
<span class="t" style="left:87.00px;top:584.56px;font-size:18px;color:#000;font-family:'Liberation Sans',sans-serif;">&quot;</span>
<span class="t" style="left:121.30px;top:584.56px;font-size:18px;color:#000;font-family:'Liberation Sans',sans-serif;">&quot;</span>
<span class="t" style="left:876.20px;top:884.66px;font-size:16.6px;color:#111;font-family:'Liberation Sans','Noto Sans CJK SC',sans-serif;">②</span>
<span class="t" style="left:896.40px;top:882.78px;font-size:15.5px;color:#111;font-family:'Liberation Sans',sans-serif;">Input channel:</span>
<span class="t" style="left:1114.90px;top:948.13px;font-size:13px;color:#5a5a5a;font-family:'Liberation Mono',monospace;letter-spacing:-0.02px;">When highlighted red is selected, this channel input</span>
<span class="t" style="left:1114.90px;top:961.80px;font-size:13px;color:#5a5a5a;font-family:'Liberation Mono',monospace;letter-spacing:-0.12px;">is indicated. If two or more are selected, this channel</span>
<span class="t" style="left:1114.90px;top:975.47px;font-size:13px;color:#5a5a5a;font-family:'Liberation Mono',monospace;letter-spacing:-0.02px;">input is indicated</span>
<span class="t" style="left:1089.60px;top:1050.65px;font-size:20.5px;color:#444;font-family:'Liberation Sans',sans-serif;transform:scaleX(0.84);transform-origin:0 0;">0</span>
<span class="t" style="left:1101.20px;top:1050.77px;font-size:13.5px;color:#444;font-family:'Liberation Sans',sans-serif;">°</span>
<span class="t" style="left:1114.30px;top:1056.24px;font-size:12.47px;color:#222;font-family:'Liberation Sans',sans-serif;">Click 0 ° to switch to 180 °, corresponding to the output of this channel</span>
</body></html>
